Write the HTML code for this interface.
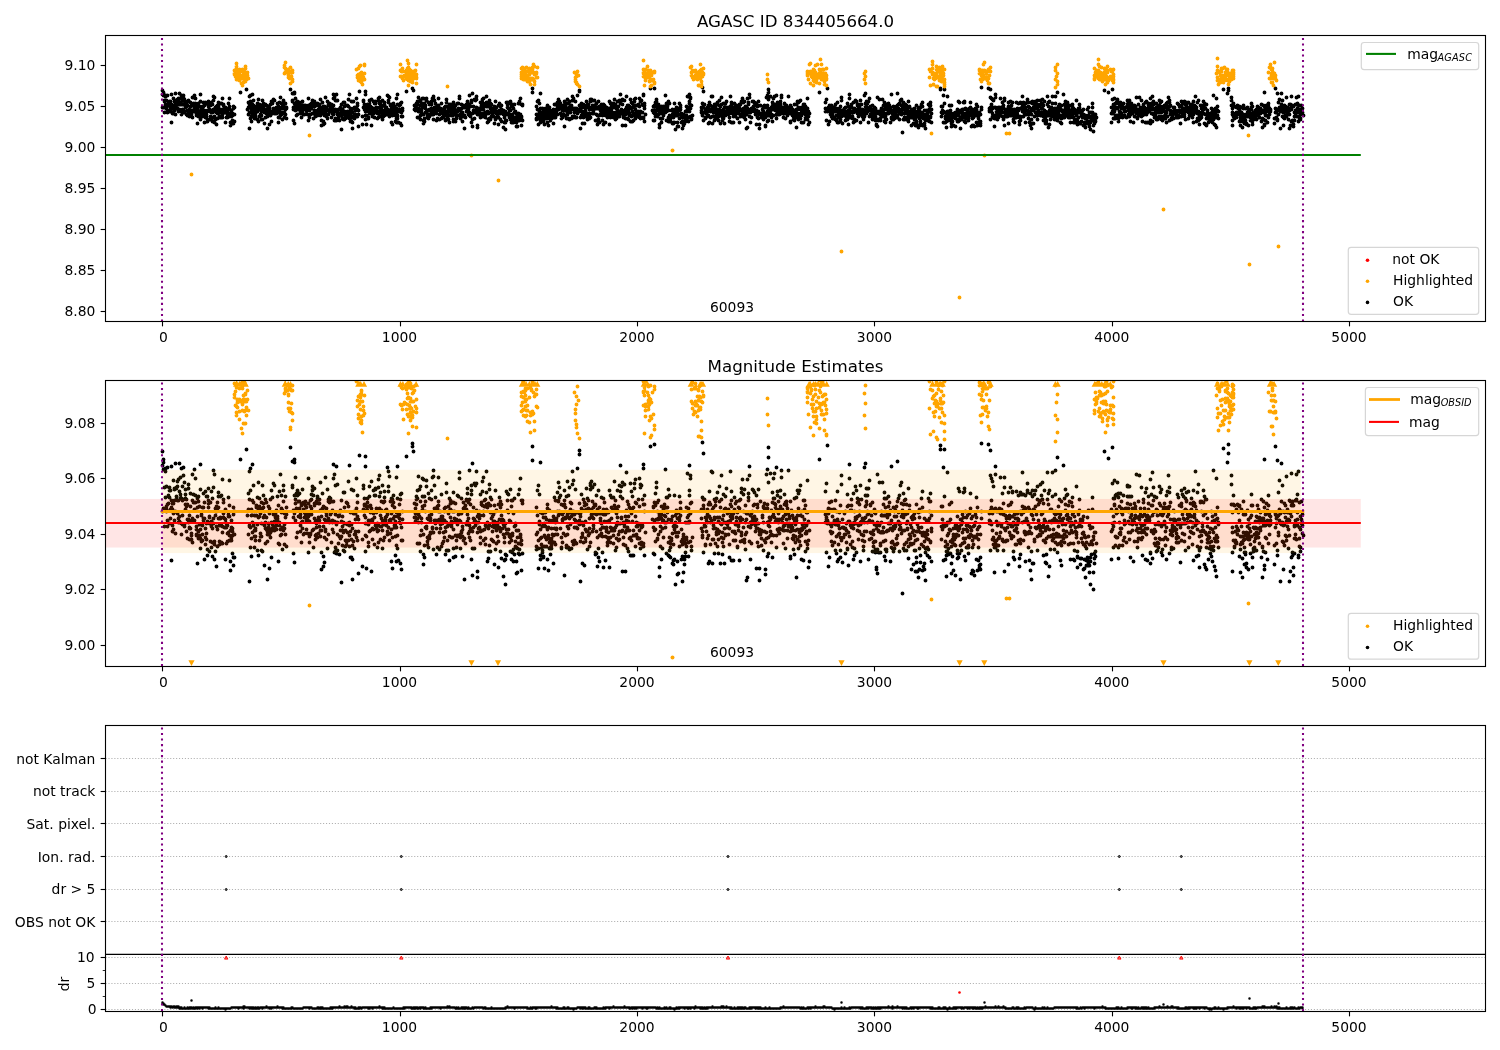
<!DOCTYPE html>
<html><head><meta charset="utf-8"><title>AGASC ID 834405664.0</title>
<style>html,body{margin:0;padding:0;background:#fff}svg{display:block;will-change:transform}text{font-family:"DejaVu Sans","Liberation Sans",sans-serif;font-size:13.89px;fill:#000}</style></head>
<body>
<svg width="1500" height="1050" viewBox="0 0 1500 1050">
<rect width="1500" height="1050" fill="#fff"/>
<defs>
<clipPath id="c1"><rect x="105.5" y="35.5" width="1380.0" height="286.0"/></clipPath>
<clipPath id="c2"><rect x="105.5" y="380.5" width="1380.0" height="286.0"/></clipPath>
<clipPath id="c3"><rect x="105.5" y="725.5" width="1380.0" height="286.0"/></clipPath>
</defs>
<g clip-path="url(#c1)">
<path d="M162.5 90.5h0M162.5 107.5h0M162.5 94.5h0M163.5 93.5h0M163.5 92.5h0M163.5 95.5h0M163.5 107.5h0M164.5 101.5h0M164.5 112.5h0M164.5 100.5h0M165.5 96.5h0M165.5 95.5h0M165.5 104.5h0M166.5 107.5h0M166.5 108.5h0M166.5 100.5h0M166.5 106.5h0M167.5 105.5h0M167.5 95.5h0M167.5 112.5h0M167.5 110.5h0M168.5 105.5h0M168.5 103.5h0M168.5 103.5h0M169.5 111.5h0M169.5 101.5h0M169.5 103.5h0M169.5 101.5h0M170.5 109.5h0M170.5 101.5h0M170.5 101.5h0M170.5 107.5h0M171.5 104.5h0M171.5 106.5h0M171.5 94.5h0M171.5 122.5h0M172.5 112.5h0M172.5 113.5h0M172.5 105.5h0M172.5 107.5h0M173.5 105.5h0M173.5 98.5h0M173.5 113.5h0M173.5 108.5h0M174.5 104.5h0M174.5 110.5h0M174.5 101.5h0M174.5 101.5h0M175.5 107.5h0M175.5 114.5h0M175.5 93.5h0M176.5 100.5h0M176.5 101.5h0M176.5 103.5h0M176.5 104.5h0M177.5 99.5h0M177.5 104.5h0M177.5 108.5h0M177.5 100.5h0M178.5 104.5h0M178.5 110.5h0M178.5 111.5h0M178.5 98.5h0M179.5 102.5h0M179.5 93.5h0M179.5 109.5h0M179.5 110.5h0M180.5 104.5h0M180.5 98.5h0M180.5 103.5h0M181.5 104.5h0M181.5 95.5h0M181.5 111.5h0M181.5 114.5h0M182.5 111.5h0M182.5 109.5h0M182.5 104.5h0M182.5 100.5h0M183.5 104.5h0M183.5 97.5h0M183.5 112.5h0M183.5 95.5h0M184.5 111.5h0M184.5 99.5h0M184.5 112.5h0M185.5 104.5h0M185.5 106.5h0M185.5 103.5h0M185.5 101.5h0M185.5 107.5h0M186.5 106.5h0M186.5 104.5h0M186.5 114.5h0M187.5 110.5h0M187.5 115.5h0M187.5 105.5h0M188.5 101.5h0M188.5 111.5h0M188.5 110.5h0M188.5 100.5h0M189.5 109.5h0M189.5 116.5h0M189.5 112.5h0M189.5 113.5h0M190.5 113.5h0M190.5 102.5h0M190.5 106.5h0M191.5 116.5h0M191.5 110.5h0M191.5 114.5h0M191.5 115.5h0M192.5 117.5h0M192.5 97.5h0M192.5 110.5h0M192.5 104.5h0M193.5 103.5h0M193.5 111.5h0M193.5 105.5h0M193.5 105.5h0M194.5 107.5h0M194.5 95.5h0M194.5 107.5h0M194.5 110.5h0M195.5 105.5h0M195.5 98.5h0M195.5 103.5h0M196.5 112.5h0M196.5 114.5h0M196.5 115.5h0M196.5 113.5h0M197.5 106.5h0M197.5 104.5h0M197.5 123.5h0M197.5 109.5h0M198.5 116.5h0M198.5 104.5h0M198.5 103.5h0M198.5 113.5h0M199.5 111.5h0M199.5 114.5h0M199.5 106.5h0M200.5 119.5h0M200.5 116.5h0M200.5 113.5h0M200.5 101.5h0M200.5 94.5h0M201.5 109.5h0M201.5 116.5h0M201.5 108.5h0M202.5 114.5h0M202.5 106.5h0M202.5 116.5h0M202.5 112.5h0M203.5 110.5h0M203.5 106.5h0M203.5 110.5h0M203.5 102.5h0M204.5 110.5h0M204.5 122.5h0M204.5 105.5h0M205.5 113.5h0M205.5 115.5h0M205.5 102.5h0M205.5 117.5h0M206.5 111.5h0M206.5 116.5h0M206.5 103.5h0M206.5 114.5h0M207.5 110.5h0M207.5 121.5h0M207.5 103.5h0M207.5 119.5h0M208.5 106.5h0M208.5 105.5h0M208.5 104.5h0M208.5 101.5h0M209.5 119.5h0M209.5 109.5h0M209.5 111.5h0M209.5 109.5h0M210.5 105.5h0M210.5 111.5h0M210.5 116.5h0M211.5 112.5h0M211.5 102.5h0M211.5 118.5h0M211.5 110.5h0M212.5 117.5h0M212.5 104.5h0M212.5 121.5h0M212.5 112.5h0M213.5 111.5h0M213.5 109.5h0M213.5 96.5h0M213.5 100.5h0M214.5 116.5h0M214.5 97.5h0M214.5 117.5h0M214.5 122.5h0M215.5 119.5h0M215.5 109.5h0M215.5 107.5h0M216.5 124.5h0M216.5 107.5h0M216.5 112.5h0M216.5 106.5h0M217.5 113.5h0M217.5 105.5h0M217.5 107.5h0M217.5 118.5h0M218.5 102.5h0M218.5 110.5h0M218.5 106.5h0M218.5 103.5h0M219.5 117.5h0M219.5 112.5h0M219.5 116.5h0M219.5 117.5h0M220.5 110.5h0M220.5 109.5h0M220.5 103.5h0M221.5 103.5h0M221.5 112.5h0M221.5 117.5h0M222.5 98.5h0M222.5 112.5h0M222.5 117.5h0M222.5 114.5h0M223.5 109.5h0M223.5 104.5h0M223.5 105.5h0M223.5 108.5h0M224.5 112.5h0M224.5 110.5h0M224.5 112.5h0M225.5 110.5h0M225.5 111.5h0M225.5 107.5h0M225.5 122.5h0M226.5 112.5h0M226.5 112.5h0M226.5 117.5h0M226.5 111.5h0M227.5 117.5h0M227.5 114.5h0M227.5 112.5h0M227.5 112.5h0M228.5 114.5h0M228.5 103.5h0M228.5 109.5h0M228.5 108.5h0M229.5 109.5h0M229.5 115.5h0M229.5 116.5h0M229.5 106.5h0M230.5 113.5h0M230.5 122.5h0M230.5 125.5h0M231.5 110.5h0M231.5 116.5h0M231.5 112.5h0M231.5 115.5h0M232.5 115.5h0M232.5 113.5h0M232.5 120.5h0M232.5 113.5h0M233.5 106.5h0M233.5 108.5h0M233.5 123.5h0M233.5 121.5h0M234.5 121.5h0M234.5 114.5h0M234.5 107.5h0M247.5 109.5h0M248.5 107.5h0M248.5 114.5h0M248.5 102.5h0M249.5 104.5h0M249.5 112.5h0M249.5 128.5h0M249.5 112.5h0M250.5 95.5h0M250.5 112.5h0M250.5 118.5h0M250.5 101.5h0M251.5 116.5h0M251.5 109.5h0M251.5 107.5h0M251.5 121.5h0M252.5 111.5h0M252.5 104.5h0M252.5 114.5h0M252.5 107.5h0M253.5 112.5h0M253.5 105.5h0M253.5 100.5h0M254.5 118.5h0M254.5 113.5h0M254.5 109.5h0M254.5 115.5h0M255.5 116.5h0M255.5 113.5h0M255.5 113.5h0M255.5 115.5h0M256.5 109.5h0M256.5 106.5h0M256.5 106.5h0M256.5 107.5h0M257.5 103.5h0M257.5 119.5h0M257.5 111.5h0M258.5 109.5h0M258.5 107.5h0M258.5 121.5h0M258.5 99.5h0M259.5 116.5h0M259.5 109.5h0M259.5 106.5h0M259.5 104.5h0M260.5 115.5h0M260.5 114.5h0M260.5 108.5h0M260.5 107.5h0M261.5 105.5h0M261.5 111.5h0M261.5 115.5h0M261.5 119.5h0M262.5 100.5h0M262.5 119.5h0M262.5 107.5h0M263.5 109.5h0M263.5 106.5h0M263.5 105.5h0M263.5 103.5h0M264.5 112.5h0M264.5 109.5h0M264.5 123.5h0M264.5 111.5h0M265.5 117.5h0M265.5 112.5h0M265.5 104.5h0M265.5 111.5h0M266.5 105.5h0M266.5 113.5h0M266.5 109.5h0M267.5 114.5h0M267.5 128.5h0M267.5 116.5h0M267.5 114.5h0M268.5 111.5h0M268.5 112.5h0M268.5 113.5h0M268.5 106.5h0M269.5 108.5h0M269.5 114.5h0M269.5 107.5h0M269.5 124.5h0M270.5 114.5h0M270.5 113.5h0M270.5 104.5h0M270.5 115.5h0M271.5 121.5h0M271.5 111.5h0M271.5 101.5h0M272.5 113.5h0M272.5 112.5h0M272.5 113.5h0M272.5 111.5h0M272.5 103.5h0M273.5 99.5h0M273.5 108.5h0M273.5 112.5h0M274.5 100.5h0M274.5 111.5h0M274.5 111.5h0M274.5 113.5h0M275.5 113.5h0M275.5 109.5h0M275.5 113.5h0M275.5 108.5h0M276.5 110.5h0M276.5 107.5h0M276.5 113.5h0M276.5 112.5h0M277.5 109.5h0M277.5 110.5h0M277.5 110.5h0M277.5 103.5h0M278.5 117.5h0M278.5 122.5h0M278.5 106.5h0M279.5 112.5h0M279.5 102.5h0M279.5 111.5h0M279.5 117.5h0M280.5 97.5h0M280.5 108.5h0M280.5 113.5h0M280.5 115.5h0M281.5 107.5h0M281.5 114.5h0M281.5 108.5h0M281.5 103.5h0M282.5 119.5h0M282.5 112.5h0M282.5 107.5h0M283.5 100.5h0M283.5 105.5h0M283.5 113.5h0M283.5 101.5h0M284.5 113.5h0M284.5 111.5h0M284.5 108.5h0M284.5 117.5h0M285.5 103.5h0M285.5 109.5h0M285.5 114.5h0M286.5 118.5h0M286.5 108.5h0M286.5 107.5h0M292.5 100.5h0M292.5 101.5h0M293.5 109.5h0M293.5 93.5h0M293.5 107.5h0M293.5 120.5h0M294.5 123.5h0M294.5 108.5h0M294.5 103.5h0M294.5 108.5h0M295.5 98.5h0M295.5 110.5h0M295.5 105.5h0M295.5 104.5h0M296.5 115.5h0M296.5 107.5h0M296.5 107.5h0M296.5 102.5h0M297.5 101.5h0M297.5 103.5h0M297.5 114.5h0M298.5 105.5h0M298.5 103.5h0M298.5 109.5h0M298.5 105.5h0M299.5 105.5h0M299.5 102.5h0M299.5 109.5h0M299.5 107.5h0M300.5 108.5h0M300.5 109.5h0M300.5 113.5h0M300.5 112.5h0M301.5 117.5h0M301.5 111.5h0M301.5 105.5h0M301.5 106.5h0M302.5 105.5h0M302.5 110.5h0M302.5 101.5h0M302.5 113.5h0M303.5 105.5h0M303.5 107.5h0M303.5 114.5h0M304.5 114.5h0M304.5 105.5h0M304.5 109.5h0M304.5 108.5h0M305.5 106.5h0M305.5 109.5h0M305.5 105.5h0M306.5 113.5h0M306.5 110.5h0M306.5 106.5h0M307.5 114.5h0M307.5 109.5h0M307.5 110.5h0M307.5 108.5h0M308.5 120.5h0M308.5 98.5h0M308.5 109.5h0M308.5 105.5h0M309.5 115.5h0M309.5 117.5h0M309.5 108.5h0M309.5 110.5h0M310.5 104.5h0M310.5 114.5h0M310.5 114.5h0M310.5 106.5h0M311.5 104.5h0M311.5 103.5h0M311.5 108.5h0M311.5 107.5h0M312.5 113.5h0M312.5 100.5h0M312.5 101.5h0M312.5 101.5h0M313.5 118.5h0M313.5 103.5h0M313.5 113.5h0M314.5 105.5h0M314.5 106.5h0M314.5 101.5h0M314.5 110.5h0M315.5 111.5h0M315.5 115.5h0M315.5 116.5h0M315.5 105.5h0M316.5 114.5h0M316.5 105.5h0M316.5 111.5h0M316.5 112.5h0M317.5 103.5h0M317.5 104.5h0M317.5 115.5h0M317.5 110.5h0M318.5 109.5h0M318.5 105.5h0M318.5 114.5h0M319.5 112.5h0M319.5 110.5h0M319.5 105.5h0M319.5 104.5h0M320.5 113.5h0M320.5 99.5h0M320.5 107.5h0M320.5 115.5h0M321.5 120.5h0M321.5 113.5h0M321.5 125.5h0M321.5 109.5h0M322.5 107.5h0M322.5 102.5h0M322.5 107.5h0M323.5 121.5h0M323.5 112.5h0M323.5 106.5h0M323.5 124.5h0M324.5 115.5h0M324.5 106.5h0M324.5 110.5h0M324.5 123.5h0M325.5 113.5h0M325.5 110.5h0M325.5 97.5h0M325.5 113.5h0M326.5 116.5h0M326.5 109.5h0M326.5 108.5h0M326.5 107.5h0M327.5 101.5h0M327.5 110.5h0M327.5 118.5h0M328.5 110.5h0M328.5 110.5h0M328.5 104.5h0M328.5 105.5h0M328.5 114.5h0M329.5 105.5h0M329.5 103.5h0M329.5 111.5h0M330.5 104.5h0M330.5 108.5h0M330.5 108.5h0M330.5 110.5h0M331.5 104.5h0M331.5 108.5h0M331.5 117.5h0M332.5 111.5h0M332.5 113.5h0M332.5 107.5h0M332.5 110.5h0M333.5 94.5h0M333.5 105.5h0M333.5 98.5h0M333.5 114.5h0M334.5 111.5h0M334.5 97.5h0M334.5 120.5h0M335.5 109.5h0M335.5 119.5h0M335.5 100.5h0M335.5 118.5h0M336.5 111.5h0M336.5 111.5h0M336.5 120.5h0M336.5 94.5h0M337.5 111.5h0M337.5 100.5h0M337.5 114.5h0M337.5 119.5h0M338.5 109.5h0M338.5 109.5h0M338.5 117.5h0M339.5 120.5h0M339.5 115.5h0M339.5 109.5h0M340.5 107.5h0M340.5 115.5h0M340.5 113.5h0M340.5 108.5h0M341.5 104.5h0M341.5 115.5h0M341.5 111.5h0M341.5 129.5h0M342.5 118.5h0M342.5 109.5h0M342.5 112.5h0M342.5 113.5h0M343.5 102.5h0M343.5 114.5h0M343.5 119.5h0M343.5 111.5h0M344.5 111.5h0M344.5 119.5h0M344.5 106.5h0M344.5 102.5h0M345.5 116.5h0M345.5 118.5h0M345.5 113.5h0M346.5 105.5h0M346.5 116.5h0M346.5 117.5h0M346.5 116.5h0M347.5 111.5h0M347.5 111.5h0M347.5 114.5h0M347.5 105.5h0M348.5 99.5h0M348.5 116.5h0M348.5 106.5h0M349.5 111.5h0M349.5 94.5h0M349.5 118.5h0M349.5 115.5h0M349.5 112.5h0M350.5 121.5h0M350.5 114.5h0M350.5 108.5h0M351.5 121.5h0M351.5 111.5h0M351.5 101.5h0M351.5 116.5h0M352.5 117.5h0M352.5 128.5h0M352.5 112.5h0M352.5 122.5h0M353.5 108.5h0M353.5 101.5h0M353.5 108.5h0M353.5 116.5h0M354.5 107.5h0M354.5 114.5h0M354.5 118.5h0M355.5 114.5h0M355.5 110.5h0M355.5 114.5h0M355.5 108.5h0M356.5 98.5h0M356.5 107.5h0M356.5 107.5h0M356.5 115.5h0M357.5 103.5h0M357.5 109.5h0M357.5 105.5h0M357.5 116.5h0M358.5 110.5h0M358.5 126.5h0M358.5 114.5h0M362.5 116.5h0M362.5 124.5h0M363.5 101.5h0M363.5 100.5h0M363.5 107.5h0M364.5 105.5h0M364.5 106.5h0M364.5 109.5h0M364.5 104.5h0M365.5 115.5h0M365.5 111.5h0M365.5 109.5h0M365.5 119.5h0M366.5 115.5h0M366.5 106.5h0M366.5 107.5h0M366.5 124.5h0M367.5 104.5h0M367.5 107.5h0M367.5 105.5h0M368.5 110.5h0M368.5 106.5h0M368.5 118.5h0M368.5 111.5h0M368.5 117.5h0M369.5 113.5h0M369.5 103.5h0M369.5 100.5h0M370.5 110.5h0M370.5 113.5h0M370.5 106.5h0M370.5 108.5h0M371.5 99.5h0M371.5 107.5h0M371.5 125.5h0M371.5 110.5h0M372.5 113.5h0M372.5 116.5h0M372.5 110.5h0M372.5 110.5h0M373.5 113.5h0M373.5 101.5h0M373.5 108.5h0M374.5 108.5h0M374.5 109.5h0M374.5 103.5h0M374.5 117.5h0M375.5 103.5h0M375.5 112.5h0M375.5 101.5h0M375.5 101.5h0M376.5 107.5h0M376.5 112.5h0M376.5 108.5h0M376.5 107.5h0M377.5 118.5h0M377.5 111.5h0M377.5 113.5h0M378.5 100.5h0M378.5 98.5h0M378.5 113.5h0M378.5 112.5h0M378.5 117.5h0M379.5 107.5h0M379.5 103.5h0M379.5 97.5h0M380.5 116.5h0M380.5 102.5h0M380.5 109.5h0M380.5 112.5h0M381.5 110.5h0M381.5 112.5h0M381.5 105.5h0M381.5 107.5h0M382.5 100.5h0M382.5 110.5h0M382.5 119.5h0M382.5 113.5h0M383.5 105.5h0M383.5 116.5h0M383.5 111.5h0M384.5 104.5h0M384.5 115.5h0M384.5 102.5h0M384.5 105.5h0M385.5 110.5h0M385.5 107.5h0M385.5 110.5h0M385.5 109.5h0M386.5 109.5h0M386.5 107.5h0M386.5 108.5h0M386.5 112.5h0M387.5 113.5h0M387.5 95.5h0M387.5 114.5h0M387.5 109.5h0M388.5 100.5h0M388.5 102.5h0M388.5 112.5h0M388.5 96.5h0M389.5 97.5h0M389.5 110.5h0M389.5 116.5h0M390.5 105.5h0M390.5 110.5h0M390.5 111.5h0M390.5 114.5h0M391.5 113.5h0M391.5 108.5h0M391.5 104.5h0M391.5 122.5h0M392.5 124.5h0M392.5 104.5h0M392.5 115.5h0M392.5 106.5h0M393.5 110.5h0M393.5 103.5h0M393.5 105.5h0M394.5 112.5h0M394.5 112.5h0M394.5 109.5h0M394.5 106.5h0M395.5 115.5h0M395.5 121.5h0M395.5 111.5h0M395.5 112.5h0M396.5 112.5h0M396.5 118.5h0M396.5 108.5h0M396.5 122.5h0M397.5 115.5h0M397.5 104.5h0M397.5 118.5h0M397.5 109.5h0M398.5 109.5h0M398.5 109.5h0M398.5 122.5h0M399.5 105.5h0M399.5 111.5h0M399.5 109.5h0M399.5 110.5h0M400.5 111.5h0M400.5 104.5h0M400.5 103.5h0M400.5 123.5h0M401.5 116.5h0M401.5 112.5h0M401.5 125.5h0M401.5 102.5h0M402.5 116.5h0M402.5 108.5h0M402.5 110.5h0M414.5 105.5h0M414.5 109.5h0M415.5 108.5h0M415.5 107.5h0M415.5 110.5h0M415.5 109.5h0M416.5 105.5h0M416.5 104.5h0M416.5 103.5h0M417.5 110.5h0M417.5 104.5h0M417.5 101.5h0M417.5 117.5h0M418.5 111.5h0M418.5 108.5h0M418.5 108.5h0M418.5 97.5h0M419.5 101.5h0M419.5 109.5h0M419.5 109.5h0M419.5 117.5h0M420.5 115.5h0M420.5 100.5h0M420.5 119.5h0M420.5 105.5h0M421.5 113.5h0M421.5 111.5h0M421.5 110.5h0M422.5 98.5h0M422.5 107.5h0M422.5 106.5h0M422.5 103.5h0M423.5 123.5h0M423.5 98.5h0M423.5 120.5h0M423.5 114.5h0M424.5 106.5h0M424.5 118.5h0M424.5 121.5h0M424.5 103.5h0M425.5 112.5h0M425.5 105.5h0M425.5 108.5h0M426.5 112.5h0M426.5 100.5h0M426.5 112.5h0M426.5 98.5h0M427.5 116.5h0M427.5 117.5h0M427.5 115.5h0M427.5 110.5h0M428.5 118.5h0M428.5 115.5h0M428.5 102.5h0M428.5 110.5h0M429.5 104.5h0M429.5 109.5h0M429.5 114.5h0M429.5 116.5h0M430.5 110.5h0M430.5 110.5h0M430.5 114.5h0M430.5 114.5h0M431.5 101.5h0M431.5 104.5h0M431.5 108.5h0M432.5 112.5h0M432.5 113.5h0M432.5 98.5h0M432.5 114.5h0M433.5 96.5h0M433.5 114.5h0M433.5 119.5h0M433.5 97.5h0M434.5 110.5h0M434.5 100.5h0M434.5 107.5h0M434.5 111.5h0M435.5 103.5h0M435.5 111.5h0M435.5 107.5h0M435.5 110.5h0M436.5 120.5h0M436.5 107.5h0M436.5 113.5h0M437.5 110.5h0M437.5 107.5h0M437.5 118.5h0M437.5 106.5h0M438.5 106.5h0M438.5 98.5h0M438.5 105.5h0M438.5 108.5h0M439.5 114.5h0M439.5 110.5h0M439.5 119.5h0M439.5 108.5h0M440.5 111.5h0M440.5 113.5h0M440.5 110.5h0M440.5 108.5h0M441.5 109.5h0M441.5 118.5h0M441.5 103.5h0M442.5 111.5h0M442.5 109.5h0M442.5 111.5h0M442.5 117.5h0M442.5 110.5h0M443.5 114.5h0M443.5 117.5h0M443.5 111.5h0M444.5 107.5h0M444.5 108.5h0M444.5 110.5h0M444.5 115.5h0M445.5 113.5h0M445.5 112.5h0M445.5 120.5h0M445.5 106.5h0M446.5 111.5h0M446.5 119.5h0M446.5 102.5h0M446.5 99.5h0M447.5 119.5h0M447.5 112.5h0M447.5 116.5h0M448.5 106.5h0M448.5 119.5h0M448.5 108.5h0M448.5 108.5h0M449.5 104.5h0M449.5 122.5h0M449.5 115.5h0M449.5 111.5h0M450.5 104.5h0M450.5 109.5h0M450.5 105.5h0M450.5 107.5h0M451.5 115.5h0M451.5 110.5h0M451.5 112.5h0M451.5 111.5h0M452.5 115.5h0M452.5 105.5h0M452.5 108.5h0M453.5 121.5h0M453.5 105.5h0M453.5 113.5h0M453.5 119.5h0M453.5 102.5h0M454.5 110.5h0M454.5 107.5h0M454.5 111.5h0M455.5 110.5h0M455.5 121.5h0M455.5 105.5h0M455.5 114.5h0M456.5 110.5h0M456.5 111.5h0M456.5 116.5h0M456.5 118.5h0M457.5 111.5h0M457.5 103.5h0M457.5 115.5h0M457.5 115.5h0M458.5 110.5h0M458.5 115.5h0M458.5 103.5h0M458.5 108.5h0M459.5 96.5h0M459.5 110.5h0M459.5 98.5h0M460.5 115.5h0M460.5 110.5h0M460.5 118.5h0M460.5 114.5h0M461.5 114.5h0M461.5 108.5h0M461.5 104.5h0M461.5 114.5h0M462.5 121.5h0M462.5 112.5h0M462.5 113.5h0M462.5 115.5h0M463.5 107.5h0M463.5 105.5h0M463.5 116.5h0M463.5 116.5h0M464.5 128.5h0M464.5 115.5h0M464.5 106.5h0M465.5 117.5h0M465.5 106.5h0M465.5 107.5h0M465.5 107.5h0M466.5 107.5h0M466.5 111.5h0M466.5 104.5h0M466.5 104.5h0M467.5 108.5h0M467.5 111.5h0M467.5 102.5h0M467.5 101.5h0M468.5 114.5h0M468.5 105.5h0M468.5 109.5h0M469.5 95.5h0M469.5 112.5h0M469.5 113.5h0M469.5 115.5h0M469.5 104.5h0M470.5 116.5h0M470.5 106.5h0M470.5 113.5h0M471.5 101.5h0M471.5 100.5h0M471.5 102.5h0M471.5 122.5h0M472.5 119.5h0M472.5 126.5h0M472.5 93.5h0M472.5 113.5h0M473.5 112.5h0M473.5 110.5h0M473.5 106.5h0M473.5 112.5h0M474.5 110.5h0M474.5 110.5h0M474.5 118.5h0M474.5 99.5h0M475.5 100.5h0M475.5 110.5h0M475.5 112.5h0M476.5 99.5h0M476.5 96.5h0M476.5 111.5h0M476.5 107.5h0M477.5 114.5h0M477.5 109.5h0M477.5 127.5h0M477.5 125.5h0M478.5 108.5h0M478.5 112.5h0M478.5 109.5h0M478.5 111.5h0M479.5 108.5h0M479.5 110.5h0M479.5 112.5h0M480.5 109.5h0M480.5 115.5h0M480.5 102.5h0M480.5 117.5h0M480.5 114.5h0M481.5 105.5h0M481.5 113.5h0M481.5 105.5h0M482.5 102.5h0M482.5 106.5h0M482.5 113.5h0M482.5 99.5h0M483.5 107.5h0M483.5 116.5h0M483.5 98.5h0M483.5 109.5h0M484.5 106.5h0M484.5 104.5h0M484.5 113.5h0M485.5 104.5h0M485.5 117.5h0M485.5 115.5h0M485.5 112.5h0M486.5 96.5h0M486.5 106.5h0M486.5 102.5h0M486.5 112.5h0M487.5 106.5h0M487.5 122.5h0M487.5 111.5h0M487.5 106.5h0M488.5 113.5h0M488.5 121.5h0M488.5 119.5h0M488.5 105.5h0M489.5 101.5h0M489.5 112.5h0M489.5 100.5h0M489.5 118.5h0M490.5 106.5h0M490.5 108.5h0M490.5 103.5h0M490.5 119.5h0M491.5 104.5h0M491.5 110.5h0M491.5 116.5h0M492.5 113.5h0M492.5 112.5h0M492.5 109.5h0M492.5 116.5h0M493.5 116.5h0M493.5 111.5h0M493.5 112.5h0M493.5 108.5h0M494.5 106.5h0M494.5 123.5h0M494.5 112.5h0M494.5 110.5h0M495.5 112.5h0M495.5 119.5h0M495.5 108.5h0M495.5 101.5h0M496.5 113.5h0M496.5 117.5h0M496.5 107.5h0M496.5 112.5h0M497.5 111.5h0M497.5 111.5h0M497.5 115.5h0M498.5 112.5h0M498.5 117.5h0M498.5 124.5h0M498.5 105.5h0M499.5 110.5h0M499.5 112.5h0M499.5 103.5h0M499.5 113.5h0M500.5 105.5h0M500.5 106.5h0M500.5 113.5h0M500.5 119.5h0M501.5 109.5h0M501.5 110.5h0M501.5 105.5h0M501.5 121.5h0M502.5 113.5h0M502.5 110.5h0M502.5 110.5h0M503.5 111.5h0M503.5 110.5h0M503.5 127.5h0M503.5 114.5h0M504.5 117.5h0M504.5 122.5h0M504.5 112.5h0M504.5 115.5h0M505.5 120.5h0M505.5 122.5h0M505.5 111.5h0M505.5 129.5h0M506.5 114.5h0M506.5 120.5h0M506.5 113.5h0M506.5 102.5h0M507.5 107.5h0M507.5 114.5h0M507.5 104.5h0M507.5 102.5h0M508.5 108.5h0M508.5 103.5h0M508.5 113.5h0M509.5 110.5h0M509.5 115.5h0M509.5 117.5h0M509.5 114.5h0M510.5 119.5h0M510.5 115.5h0M510.5 101.5h0M510.5 110.5h0M511.5 116.5h0M511.5 104.5h0M511.5 106.5h0M511.5 122.5h0M512.5 120.5h0M512.5 104.5h0M512.5 115.5h0M512.5 114.5h0M513.5 119.5h0M513.5 122.5h0M513.5 108.5h0M514.5 120.5h0M514.5 112.5h0M514.5 104.5h0M514.5 112.5h0M515.5 117.5h0M515.5 111.5h0M515.5 112.5h0M515.5 118.5h0M516.5 113.5h0M516.5 122.5h0M516.5 126.5h0M516.5 118.5h0M517.5 126.5h0M517.5 118.5h0M517.5 115.5h0M518.5 113.5h0M518.5 103.5h0M518.5 120.5h0M518.5 117.5h0M519.5 117.5h0M519.5 120.5h0M519.5 101.5h0M519.5 119.5h0M520.5 115.5h0M520.5 114.5h0M520.5 98.5h0M520.5 115.5h0M521.5 117.5h0M521.5 104.5h0M521.5 116.5h0M521.5 125.5h0M522.5 104.5h0M522.5 105.5h0M522.5 120.5h0M536.5 119.5h0M536.5 118.5h0M536.5 106.5h0M536.5 114.5h0M537.5 114.5h0M537.5 109.5h0M537.5 118.5h0M537.5 101.5h0M538.5 118.5h0M538.5 116.5h0M538.5 100.5h0M538.5 124.5h0M539.5 103.5h0M539.5 111.5h0M539.5 111.5h0M540.5 120.5h0M540.5 113.5h0M540.5 122.5h0M540.5 108.5h0M540.5 116.5h0M541.5 118.5h0M541.5 117.5h0M541.5 115.5h0M542.5 108.5h0M542.5 112.5h0M542.5 119.5h0M542.5 120.5h0M543.5 121.5h0M543.5 109.5h0M543.5 111.5h0M543.5 121.5h0M544.5 124.5h0M544.5 115.5h0M544.5 118.5h0M544.5 111.5h0M545.5 115.5h0M545.5 112.5h0M545.5 109.5h0M545.5 108.5h0M546.5 116.5h0M546.5 110.5h0M546.5 118.5h0M547.5 122.5h0M547.5 113.5h0M547.5 107.5h0M547.5 105.5h0M548.5 115.5h0M548.5 125.5h0M548.5 112.5h0M548.5 115.5h0M549.5 110.5h0M549.5 107.5h0M549.5 117.5h0M549.5 118.5h0M550.5 116.5h0M550.5 118.5h0M550.5 120.5h0M551.5 113.5h0M551.5 118.5h0M551.5 116.5h0M551.5 116.5h0M551.5 118.5h0M552.5 110.5h0M552.5 117.5h0M552.5 114.5h0M553.5 109.5h0M553.5 115.5h0M553.5 123.5h0M553.5 117.5h0M554.5 117.5h0M554.5 110.5h0M554.5 104.5h0M554.5 113.5h0M555.5 114.5h0M555.5 104.5h0M555.5 117.5h0M555.5 111.5h0M556.5 109.5h0M556.5 112.5h0M556.5 113.5h0M556.5 111.5h0M557.5 102.5h0M557.5 107.5h0M557.5 114.5h0M558.5 109.5h0M558.5 104.5h0M558.5 99.5h0M558.5 105.5h0M559.5 108.5h0M559.5 101.5h0M559.5 103.5h0M559.5 108.5h0M560.5 113.5h0M560.5 108.5h0M560.5 103.5h0M561.5 115.5h0M561.5 118.5h0M561.5 105.5h0M561.5 118.5h0M562.5 117.5h0M562.5 110.5h0M562.5 110.5h0M562.5 109.5h0M563.5 108.5h0M563.5 106.5h0M563.5 110.5h0M563.5 114.5h0M564.5 126.5h0M564.5 101.5h0M564.5 104.5h0M564.5 105.5h0M565.5 109.5h0M565.5 115.5h0M565.5 106.5h0M565.5 110.5h0M566.5 118.5h0M566.5 103.5h0M566.5 118.5h0M567.5 112.5h0M567.5 99.5h0M567.5 114.5h0M567.5 108.5h0M568.5 103.5h0M568.5 109.5h0M568.5 118.5h0M568.5 112.5h0M569.5 110.5h0M569.5 119.5h0M569.5 101.5h0M569.5 107.5h0M570.5 105.5h0M570.5 108.5h0M570.5 107.5h0M570.5 112.5h0M571.5 118.5h0M571.5 105.5h0M571.5 109.5h0M572.5 100.5h0M572.5 116.5h0M572.5 108.5h0M572.5 96.5h0M573.5 117.5h0M573.5 116.5h0M573.5 108.5h0M573.5 98.5h0M574.5 116.5h0M574.5 108.5h0M574.5 110.5h0M574.5 112.5h0M575.5 110.5h0M575.5 101.5h0M575.5 108.5h0M575.5 117.5h0M576.5 112.5h0M576.5 108.5h0M576.5 117.5h0M577.5 113.5h0M577.5 111.5h0M579.5 110.5h0M579.5 105.5h0M579.5 108.5h0M579.5 111.5h0M580.5 117.5h0M580.5 109.5h0M580.5 128.5h0M580.5 108.5h0M581.5 115.5h0M581.5 107.5h0M581.5 111.5h0M581.5 103.5h0M582.5 115.5h0M582.5 123.5h0M582.5 111.5h0M582.5 114.5h0M583.5 112.5h0M583.5 104.5h0M583.5 117.5h0M584.5 107.5h0M584.5 106.5h0M584.5 105.5h0M584.5 123.5h0M585.5 110.5h0M585.5 116.5h0M585.5 113.5h0M585.5 116.5h0M586.5 113.5h0M586.5 106.5h0M586.5 101.5h0M586.5 107.5h0M587.5 119.5h0M587.5 104.5h0M587.5 119.5h0M587.5 113.5h0M588.5 104.5h0M588.5 115.5h0M588.5 107.5h0M589.5 113.5h0M589.5 118.5h0M589.5 109.5h0M589.5 114.5h0M590.5 100.5h0M590.5 99.5h0M590.5 101.5h0M590.5 117.5h0M591.5 99.5h0M591.5 108.5h0M591.5 107.5h0M591.5 109.5h0M592.5 113.5h0M592.5 109.5h0M592.5 105.5h0M592.5 100.5h0M593.5 106.5h0M593.5 110.5h0M593.5 113.5h0M593.5 112.5h0M594.5 100.5h0M594.5 105.5h0M594.5 108.5h0M595.5 120.5h0M595.5 120.5h0M595.5 105.5h0M595.5 106.5h0M596.5 103.5h0M596.5 108.5h0M596.5 114.5h0M596.5 120.5h0M597.5 115.5h0M597.5 124.5h0M597.5 108.5h0M597.5 107.5h0M598.5 101.5h0M598.5 121.5h0M598.5 119.5h0M599.5 106.5h0M599.5 108.5h0M599.5 122.5h0M599.5 115.5h0M600.5 110.5h0M600.5 113.5h0M600.5 108.5h0M600.5 110.5h0M601.5 114.5h0M601.5 108.5h0M601.5 111.5h0M601.5 104.5h0M602.5 120.5h0M602.5 112.5h0M602.5 115.5h0M603.5 112.5h0M603.5 108.5h0M603.5 107.5h0M603.5 124.5h0M603.5 104.5h0M604.5 108.5h0M604.5 108.5h0M604.5 110.5h0M604.5 105.5h0M605.5 108.5h0M605.5 122.5h0M605.5 115.5h0M606.5 112.5h0M606.5 113.5h0M606.5 113.5h0M606.5 107.5h0M607.5 117.5h0M607.5 115.5h0M607.5 117.5h0M607.5 111.5h0M608.5 108.5h0M608.5 116.5h0M608.5 108.5h0M608.5 114.5h0M609.5 101.5h0M609.5 124.5h0M609.5 110.5h0M610.5 103.5h0M610.5 112.5h0M610.5 117.5h0M610.5 115.5h0M611.5 106.5h0M611.5 113.5h0M611.5 103.5h0M611.5 109.5h0M612.5 113.5h0M612.5 112.5h0M612.5 107.5h0M613.5 103.5h0M613.5 115.5h0M613.5 117.5h0M613.5 117.5h0M614.5 107.5h0M614.5 99.5h0M614.5 113.5h0M614.5 106.5h0M615.5 112.5h0M615.5 104.5h0M615.5 119.5h0M615.5 106.5h0M616.5 118.5h0M616.5 115.5h0M616.5 108.5h0M616.5 112.5h0M617.5 111.5h0M617.5 107.5h0M617.5 109.5h0M617.5 101.5h0M618.5 106.5h0M618.5 116.5h0M618.5 111.5h0M618.5 114.5h0M619.5 113.5h0M619.5 100.5h0M619.5 116.5h0M620.5 103.5h0M620.5 102.5h0M620.5 94.5h0M620.5 111.5h0M621.5 109.5h0M621.5 109.5h0M621.5 113.5h0M621.5 100.5h0M622.5 99.5h0M622.5 125.5h0M622.5 113.5h0M622.5 104.5h0M623.5 117.5h0M623.5 115.5h0M623.5 111.5h0M623.5 111.5h0M624.5 112.5h0M624.5 112.5h0M624.5 100.5h0M625.5 125.5h0M625.5 114.5h0M625.5 118.5h0M625.5 109.5h0M626.5 113.5h0M626.5 107.5h0M626.5 110.5h0M626.5 96.5h0M627.5 118.5h0M627.5 113.5h0M627.5 105.5h0M627.5 112.5h0M628.5 109.5h0M628.5 119.5h0M628.5 105.5h0M628.5 111.5h0M629.5 106.5h0M629.5 115.5h0M629.5 113.5h0M630.5 115.5h0M630.5 99.5h0M630.5 121.5h0M630.5 107.5h0M631.5 108.5h0M631.5 102.5h0M631.5 108.5h0M631.5 116.5h0M632.5 107.5h0M632.5 121.5h0M632.5 103.5h0M632.5 111.5h0M633.5 115.5h0M633.5 113.5h0M633.5 106.5h0M633.5 120.5h0M634.5 99.5h0M634.5 115.5h0M634.5 101.5h0M635.5 109.5h0M635.5 98.5h0M635.5 118.5h0M635.5 105.5h0M636.5 111.5h0M636.5 114.5h0M636.5 105.5h0M636.5 112.5h0M637.5 115.5h0M637.5 112.5h0M637.5 116.5h0M637.5 112.5h0M638.5 111.5h0M638.5 104.5h0M638.5 111.5h0M639.5 116.5h0M639.5 106.5h0M639.5 113.5h0M639.5 117.5h0M640.5 118.5h0M640.5 100.5h0M640.5 111.5h0M640.5 101.5h0M641.5 117.5h0M641.5 117.5h0M641.5 100.5h0M641.5 112.5h0M642.5 112.5h0M642.5 112.5h0M642.5 117.5h0M642.5 104.5h0M643.5 118.5h0M643.5 105.5h0M643.5 117.5h0M643.5 94.5h0M644.5 105.5h0M644.5 103.5h0M644.5 121.5h0M644.5 108.5h0M645.5 114.5h0M652.5 110.5h0M653.5 120.5h0M653.5 106.5h0M653.5 106.5h0M653.5 112.5h0M654.5 113.5h0M654.5 110.5h0M654.5 105.5h0M654.5 120.5h0M655.5 102.5h0M655.5 113.5h0M655.5 106.5h0M655.5 116.5h0M656.5 99.5h0M656.5 110.5h0M656.5 101.5h0M657.5 116.5h0M657.5 116.5h0M657.5 105.5h0M657.5 108.5h0M658.5 110.5h0M658.5 104.5h0M658.5 110.5h0M658.5 114.5h0M659.5 124.5h0M659.5 127.5h0M659.5 108.5h0M659.5 109.5h0M660.5 118.5h0M660.5 109.5h0M660.5 113.5h0M660.5 112.5h0M661.5 106.5h0M661.5 122.5h0M661.5 110.5h0M661.5 108.5h0M662.5 113.5h0M662.5 110.5h0M662.5 118.5h0M663.5 110.5h0M663.5 107.5h0M663.5 106.5h0M663.5 115.5h0M664.5 106.5h0M664.5 109.5h0M664.5 106.5h0M664.5 111.5h0M665.5 106.5h0M665.5 109.5h0M665.5 95.5h0M665.5 112.5h0M666.5 103.5h0M666.5 111.5h0M666.5 120.5h0M667.5 108.5h0M667.5 103.5h0M667.5 106.5h0M667.5 106.5h0M668.5 117.5h0M668.5 110.5h0M668.5 121.5h0M668.5 101.5h0M669.5 103.5h0M669.5 119.5h0M669.5 115.5h0M669.5 121.5h0M670.5 118.5h0M670.5 116.5h0M670.5 121.5h0M670.5 117.5h0M671.5 110.5h0M671.5 116.5h0M671.5 110.5h0M671.5 116.5h0M672.5 114.5h0M672.5 123.5h0M672.5 109.5h0M673.5 122.5h0M673.5 117.5h0M673.5 123.5h0M673.5 112.5h0M674.5 122.5h0M674.5 111.5h0M674.5 103.5h0M674.5 113.5h0M675.5 129.5h0M675.5 109.5h0M675.5 114.5h0M675.5 111.5h0M676.5 112.5h0M676.5 107.5h0M676.5 108.5h0M676.5 115.5h0M677.5 122.5h0M677.5 115.5h0M677.5 110.5h0M677.5 126.5h0M678.5 114.5h0M678.5 126.5h0M678.5 108.5h0M679.5 103.5h0M679.5 109.5h0M679.5 118.5h0M679.5 110.5h0M680.5 107.5h0M680.5 105.5h0M680.5 107.5h0M680.5 109.5h0M681.5 122.5h0M681.5 116.5h0M681.5 113.5h0M682.5 116.5h0M682.5 128.5h0M682.5 117.5h0M682.5 121.5h0M683.5 115.5h0M683.5 114.5h0M683.5 125.5h0M683.5 121.5h0M684.5 116.5h0M684.5 123.5h0M684.5 117.5h0M684.5 122.5h0M685.5 121.5h0M685.5 111.5h0M685.5 117.5h0M685.5 120.5h0M686.5 106.5h0M686.5 118.5h0M686.5 116.5h0M686.5 115.5h0M687.5 96.5h0M687.5 111.5h0M687.5 109.5h0M688.5 117.5h0M688.5 109.5h0M688.5 107.5h0M688.5 121.5h0M689.5 111.5h0M689.5 103.5h0M689.5 101.5h0M689.5 111.5h0M690.5 98.5h0M690.5 116.5h0M690.5 105.5h0M690.5 108.5h0M691.5 118.5h0M691.5 105.5h0M691.5 119.5h0M692.5 115.5h0M701.5 110.5h0M701.5 112.5h0M701.5 107.5h0M702.5 115.5h0M702.5 115.5h0M702.5 103.5h0M702.5 114.5h0M703.5 120.5h0M703.5 106.5h0M703.5 107.5h0M703.5 104.5h0M704.5 112.5h0M704.5 104.5h0M704.5 112.5h0M705.5 117.5h0M705.5 112.5h0M705.5 109.5h0M705.5 118.5h0M705.5 112.5h0M706.5 109.5h0M706.5 113.5h0M706.5 110.5h0M707.5 111.5h0M707.5 116.5h0M707.5 109.5h0M707.5 107.5h0M708.5 123.5h0M708.5 115.5h0M708.5 105.5h0M708.5 108.5h0M709.5 122.5h0M709.5 109.5h0M709.5 102.5h0M709.5 105.5h0M710.5 105.5h0M710.5 111.5h0M710.5 110.5h0M710.5 117.5h0M711.5 110.5h0M711.5 96.5h0M711.5 110.5h0M712.5 116.5h0M712.5 107.5h0M712.5 123.5h0M712.5 96.5h0M713.5 106.5h0M713.5 112.5h0M713.5 112.5h0M713.5 116.5h0M714.5 109.5h0M714.5 110.5h0M714.5 120.5h0M714.5 104.5h0M715.5 112.5h0M715.5 117.5h0M715.5 104.5h0M715.5 106.5h0M716.5 114.5h0M716.5 114.5h0M716.5 104.5h0M717.5 113.5h0M717.5 109.5h0M717.5 102.5h0M717.5 118.5h0M718.5 120.5h0M718.5 116.5h0M718.5 114.5h0M718.5 110.5h0M719.5 105.5h0M719.5 113.5h0M719.5 100.5h0M719.5 109.5h0M720.5 123.5h0M720.5 111.5h0M720.5 106.5h0M721.5 104.5h0M721.5 115.5h0M721.5 111.5h0M721.5 97.5h0M722.5 110.5h0M722.5 117.5h0M722.5 120.5h0M722.5 114.5h0M723.5 109.5h0M723.5 118.5h0M723.5 103.5h0M723.5 116.5h0M724.5 123.5h0M724.5 107.5h0M724.5 111.5h0M724.5 112.5h0M725.5 103.5h0M725.5 115.5h0M725.5 107.5h0M725.5 114.5h0M726.5 101.5h0M726.5 111.5h0M726.5 111.5h0M726.5 107.5h0M727.5 111.5h0M727.5 108.5h0M727.5 112.5h0M728.5 107.5h0M728.5 110.5h0M728.5 114.5h0M728.5 107.5h0M729.5 108.5h0M729.5 117.5h0M729.5 113.5h0M729.5 121.5h0M730.5 110.5h0M730.5 106.5h0M730.5 96.5h0M730.5 109.5h0M731.5 104.5h0M731.5 102.5h0M731.5 106.5h0M731.5 122.5h0M732.5 113.5h0M732.5 108.5h0M732.5 109.5h0M732.5 110.5h0M733.5 116.5h0M733.5 122.5h0M733.5 108.5h0M734.5 103.5h0M734.5 113.5h0M734.5 107.5h0M734.5 114.5h0M735.5 111.5h0M735.5 114.5h0M735.5 105.5h0M735.5 116.5h0M736.5 109.5h0M736.5 105.5h0M736.5 110.5h0M737.5 118.5h0M737.5 108.5h0M737.5 111.5h0M737.5 118.5h0M738.5 111.5h0M738.5 112.5h0M738.5 107.5h0M738.5 113.5h0M739.5 110.5h0M739.5 107.5h0M739.5 122.5h0M739.5 104.5h0M740.5 110.5h0M740.5 116.5h0M740.5 109.5h0M740.5 104.5h0M741.5 115.5h0M741.5 114.5h0M741.5 102.5h0M741.5 101.5h0M742.5 98.5h0M742.5 110.5h0M742.5 116.5h0M743.5 116.5h0M743.5 112.5h0M743.5 116.5h0M743.5 108.5h0M743.5 102.5h0M744.5 117.5h0M744.5 101.5h0M744.5 116.5h0M745.5 114.5h0M745.5 119.5h0M745.5 106.5h0M745.5 111.5h0M746.5 110.5h0M746.5 128.5h0M746.5 114.5h0M746.5 108.5h0M747.5 127.5h0M747.5 98.5h0M747.5 108.5h0M748.5 103.5h0M748.5 112.5h0M748.5 104.5h0M748.5 102.5h0M749.5 94.5h0M749.5 116.5h0M749.5 97.5h0M749.5 116.5h0M750.5 109.5h0M750.5 112.5h0M750.5 111.5h0M750.5 122.5h0M751.5 111.5h0M751.5 117.5h0M751.5 111.5h0M751.5 108.5h0M752.5 109.5h0M752.5 110.5h0M752.5 101.5h0M752.5 108.5h0M753.5 106.5h0M753.5 101.5h0M753.5 110.5h0M754.5 109.5h0M754.5 105.5h0M754.5 111.5h0M754.5 102.5h0M755.5 114.5h0M755.5 111.5h0M755.5 111.5h0M755.5 112.5h0M756.5 110.5h0M756.5 113.5h0M756.5 124.5h0M756.5 103.5h0M757.5 113.5h0M757.5 105.5h0M757.5 117.5h0M757.5 106.5h0M758.5 118.5h0M758.5 101.5h0M758.5 111.5h0M759.5 113.5h0M759.5 128.5h0M759.5 124.5h0M759.5 113.5h0M759.5 114.5h0M760.5 114.5h0M760.5 114.5h0M760.5 105.5h0M761.5 113.5h0M761.5 113.5h0M761.5 115.5h0M761.5 117.5h0M762.5 109.5h0M762.5 114.5h0M762.5 113.5h0M762.5 109.5h0M763.5 111.5h0M763.5 106.5h0M763.5 107.5h0M763.5 119.5h0M764.5 116.5h0M764.5 105.5h0M764.5 113.5h0M764.5 107.5h0M765.5 117.5h0M765.5 126.5h0M765.5 125.5h0M766.5 115.5h0M766.5 114.5h0M766.5 97.5h0M766.5 107.5h0M767.5 107.5h0M767.5 105.5h0M767.5 121.5h0M767.5 111.5h0M768.5 112.5h0M768.5 99.5h0M768.5 115.5h0M768.5 120.5h0M769.5 110.5h0M769.5 112.5h0M769.5 110.5h0M769.5 109.5h0M770.5 110.5h0M770.5 115.5h0M770.5 113.5h0M770.5 96.5h0M771.5 114.5h0M771.5 107.5h0M771.5 117.5h0M772.5 121.5h0M772.5 105.5h0M772.5 109.5h0M772.5 102.5h0M773.5 104.5h0M773.5 108.5h0M773.5 115.5h0M773.5 98.5h0M774.5 109.5h0M774.5 96.5h0M774.5 105.5h0M774.5 104.5h0M775.5 105.5h0M775.5 106.5h0M775.5 110.5h0M776.5 95.5h0M776.5 114.5h0M776.5 118.5h0M776.5 107.5h0M777.5 113.5h0M777.5 103.5h0M777.5 110.5h0M777.5 102.5h0M778.5 108.5h0M778.5 114.5h0M778.5 111.5h0M778.5 104.5h0M779.5 113.5h0M779.5 114.5h0M779.5 110.5h0M779.5 107.5h0M780.5 101.5h0M780.5 106.5h0M780.5 104.5h0M781.5 110.5h0M781.5 97.5h0M781.5 95.5h0M781.5 113.5h0M781.5 107.5h0M782.5 110.5h0M782.5 107.5h0M782.5 111.5h0M783.5 113.5h0M783.5 117.5h0M783.5 112.5h0M783.5 109.5h0M784.5 103.5h0M784.5 106.5h0M784.5 112.5h0M784.5 113.5h0M785.5 118.5h0M785.5 105.5h0M785.5 109.5h0M786.5 105.5h0M786.5 105.5h0M786.5 106.5h0M786.5 110.5h0M787.5 111.5h0M787.5 115.5h0M787.5 113.5h0M787.5 107.5h0M788.5 96.5h0M788.5 112.5h0M788.5 108.5h0M789.5 109.5h0M789.5 112.5h0M789.5 110.5h0M789.5 111.5h0M790.5 122.5h0M790.5 105.5h0M790.5 121.5h0M790.5 113.5h0M791.5 113.5h0M791.5 107.5h0M791.5 111.5h0M792.5 113.5h0M792.5 115.5h0M792.5 109.5h0M792.5 112.5h0M793.5 115.5h0M793.5 119.5h0M793.5 116.5h0M793.5 110.5h0M794.5 120.5h0M794.5 110.5h0M794.5 110.5h0M794.5 104.5h0M795.5 115.5h0M795.5 117.5h0M795.5 111.5h0M795.5 113.5h0M796.5 127.5h0M796.5 104.5h0M796.5 109.5h0M796.5 110.5h0M797.5 116.5h0M797.5 109.5h0M797.5 113.5h0M797.5 101.5h0M798.5 107.5h0M798.5 102.5h0M798.5 119.5h0M799.5 116.5h0M799.5 114.5h0M799.5 115.5h0M799.5 101.5h0M800.5 109.5h0M800.5 118.5h0M800.5 113.5h0M800.5 100.5h0M801.5 113.5h0M801.5 107.5h0M801.5 122.5h0M801.5 115.5h0M802.5 112.5h0M802.5 113.5h0M802.5 111.5h0M802.5 109.5h0M803.5 104.5h0M803.5 122.5h0M803.5 111.5h0M804.5 107.5h0M804.5 110.5h0M804.5 104.5h0M804.5 112.5h0M805.5 114.5h0M805.5 117.5h0M805.5 106.5h0M805.5 119.5h0M806.5 114.5h0M806.5 112.5h0M806.5 108.5h0M806.5 113.5h0M807.5 117.5h0M807.5 108.5h0M807.5 119.5h0M808.5 116.5h0M808.5 124.5h0M808.5 111.5h0M808.5 111.5h0M809.5 122.5h0M809.5 113.5h0M825.5 111.5h0M825.5 108.5h0M825.5 102.5h0M826.5 99.5h0M826.5 109.5h0M826.5 120.5h0M826.5 110.5h0M827.5 111.5h0M827.5 110.5h0M827.5 111.5h0M827.5 110.5h0M828.5 124.5h0M828.5 107.5h0M828.5 107.5h0M828.5 108.5h0M829.5 111.5h0M829.5 105.5h0M829.5 121.5h0M830.5 111.5h0M830.5 107.5h0M830.5 114.5h0M830.5 111.5h0M831.5 105.5h0M831.5 112.5h0M831.5 116.5h0M831.5 114.5h0M832.5 109.5h0M832.5 118.5h0M832.5 111.5h0M832.5 114.5h0M833.5 111.5h0M833.5 107.5h0M833.5 107.5h0M833.5 111.5h0M834.5 110.5h0M834.5 107.5h0M834.5 117.5h0M834.5 111.5h0M835.5 119.5h0M835.5 104.5h0M835.5 111.5h0M836.5 120.5h0M836.5 115.5h0M836.5 108.5h0M836.5 110.5h0M837.5 122.5h0M837.5 102.5h0M837.5 111.5h0M837.5 110.5h0M838.5 114.5h0M838.5 117.5h0M838.5 122.5h0M838.5 112.5h0M839.5 113.5h0M839.5 114.5h0M839.5 108.5h0M839.5 111.5h0M840.5 119.5h0M840.5 115.5h0M840.5 106.5h0M840.5 121.5h0M841.5 100.5h0M841.5 116.5h0M841.5 97.5h0M842.5 110.5h0M842.5 123.5h0M842.5 110.5h0M842.5 112.5h0M843.5 115.5h0M843.5 112.5h0M843.5 112.5h0M844.5 108.5h0M844.5 114.5h0M844.5 112.5h0M844.5 108.5h0M845.5 113.5h0M845.5 120.5h0M845.5 107.5h0M845.5 114.5h0M846.5 111.5h0M846.5 117.5h0M846.5 113.5h0M847.5 118.5h0M847.5 103.5h0M847.5 119.5h0M847.5 106.5h0M848.5 124.5h0M848.5 110.5h0M848.5 114.5h0M848.5 106.5h0M849.5 110.5h0M849.5 98.5h0M849.5 94.5h0M849.5 115.5h0M850.5 107.5h0M850.5 117.5h0M850.5 117.5h0M850.5 112.5h0M851.5 106.5h0M851.5 107.5h0M851.5 112.5h0M851.5 104.5h0M852.5 118.5h0M852.5 116.5h0M852.5 111.5h0M853.5 122.5h0M853.5 102.5h0M853.5 111.5h0M853.5 112.5h0M854.5 108.5h0M854.5 119.5h0M854.5 111.5h0M854.5 121.5h0M855.5 111.5h0M855.5 109.5h0M855.5 100.5h0M855.5 110.5h0M856.5 101.5h0M856.5 110.5h0M856.5 120.5h0M857.5 105.5h0M857.5 109.5h0M857.5 113.5h0M857.5 104.5h0M858.5 116.5h0M858.5 112.5h0M858.5 105.5h0M858.5 104.5h0M859.5 113.5h0M859.5 107.5h0M859.5 109.5h0M859.5 105.5h0M860.5 111.5h0M860.5 122.5h0M860.5 112.5h0M860.5 100.5h0M861.5 114.5h0M861.5 110.5h0M861.5 104.5h0M862.5 111.5h0M862.5 116.5h0M862.5 109.5h0M862.5 111.5h0M863.5 115.5h0M863.5 110.5h0M863.5 118.5h0M863.5 119.5h0M864.5 116.5h0M864.5 111.5h0M864.5 110.5h0M864.5 113.5h0M865.5 103.5h0M865.5 106.5h0M865.5 109.5h0M865.5 103.5h0M866.5 101.5h0M866.5 106.5h0M866.5 113.5h0M866.5 105.5h0M867.5 103.5h0M867.5 108.5h0M867.5 111.5h0M867.5 109.5h0M868.5 108.5h0M868.5 122.5h0M868.5 101.5h0M869.5 110.5h0M869.5 98.5h0M869.5 110.5h0M869.5 116.5h0M870.5 106.5h0M870.5 110.5h0M870.5 106.5h0M870.5 114.5h0M871.5 114.5h0M871.5 115.5h0M871.5 116.5h0M871.5 109.5h0M872.5 119.5h0M872.5 111.5h0M872.5 105.5h0M873.5 118.5h0M873.5 113.5h0M873.5 117.5h0M873.5 114.5h0M874.5 111.5h0M874.5 108.5h0M874.5 107.5h0M874.5 116.5h0M875.5 108.5h0M875.5 116.5h0M875.5 120.5h0M875.5 119.5h0M876.5 125.5h0M876.5 113.5h0M876.5 124.5h0M876.5 112.5h0M877.5 97.5h0M877.5 119.5h0M877.5 126.5h0M877.5 111.5h0M878.5 120.5h0M878.5 113.5h0M878.5 113.5h0M879.5 112.5h0M879.5 99.5h0M879.5 111.5h0M879.5 111.5h0M880.5 114.5h0M880.5 118.5h0M880.5 117.5h0M880.5 120.5h0M881.5 108.5h0M881.5 114.5h0M881.5 109.5h0M881.5 111.5h0M882.5 99.5h0M882.5 113.5h0M882.5 109.5h0M883.5 116.5h0M883.5 105.5h0M883.5 114.5h0M883.5 112.5h0M884.5 121.5h0M884.5 109.5h0M884.5 102.5h0M884.5 104.5h0M885.5 119.5h0M885.5 106.5h0M885.5 116.5h0M885.5 122.5h0M886.5 119.5h0M886.5 104.5h0M886.5 113.5h0M886.5 119.5h0M887.5 109.5h0M887.5 109.5h0M887.5 113.5h0M887.5 108.5h0M888.5 113.5h0M888.5 103.5h0M888.5 106.5h0M888.5 111.5h0M889.5 108.5h0M889.5 105.5h0M889.5 111.5h0M890.5 107.5h0M890.5 111.5h0M890.5 112.5h0M890.5 122.5h0M891.5 118.5h0M891.5 117.5h0M891.5 110.5h0M891.5 94.5h0M892.5 116.5h0M892.5 113.5h0M892.5 119.5h0M892.5 113.5h0M893.5 112.5h0M893.5 106.5h0M893.5 119.5h0M894.5 108.5h0M894.5 109.5h0M894.5 113.5h0M894.5 118.5h0M894.5 117.5h0M895.5 112.5h0M895.5 107.5h0M895.5 111.5h0M896.5 115.5h0M896.5 109.5h0M896.5 117.5h0M896.5 106.5h0M897.5 93.5h0M897.5 115.5h0M897.5 105.5h0M897.5 117.5h0M898.5 111.5h0M898.5 108.5h0M898.5 104.5h0M899.5 111.5h0M899.5 103.5h0M899.5 119.5h0M899.5 113.5h0M899.5 112.5h0M900.5 111.5h0M900.5 112.5h0M900.5 100.5h0M901.5 114.5h0M901.5 105.5h0M901.5 109.5h0M901.5 99.5h0M902.5 113.5h0M902.5 107.5h0M902.5 108.5h0M902.5 132.5h0M903.5 109.5h0M903.5 105.5h0M903.5 102.5h0M903.5 119.5h0M904.5 113.5h0M904.5 104.5h0M904.5 119.5h0M904.5 117.5h0M905.5 109.5h0M905.5 108.5h0M905.5 104.5h0M906.5 105.5h0M906.5 111.5h0M906.5 119.5h0M906.5 117.5h0M907.5 113.5h0M907.5 111.5h0M907.5 113.5h0M907.5 108.5h0M908.5 118.5h0M908.5 116.5h0M908.5 121.5h0M908.5 101.5h0M909.5 114.5h0M909.5 107.5h0M909.5 106.5h0M910.5 111.5h0M910.5 115.5h0M910.5 117.5h0M910.5 115.5h0M911.5 125.5h0M911.5 117.5h0M911.5 109.5h0M911.5 112.5h0M912.5 109.5h0M912.5 109.5h0M912.5 110.5h0M912.5 114.5h0M913.5 113.5h0M913.5 109.5h0M913.5 117.5h0M913.5 123.5h0M914.5 110.5h0M914.5 115.5h0M914.5 108.5h0M914.5 119.5h0M915.5 125.5h0M915.5 116.5h0M915.5 119.5h0M916.5 121.5h0M916.5 105.5h0M916.5 113.5h0M916.5 122.5h0M917.5 125.5h0M917.5 116.5h0M917.5 111.5h0M917.5 113.5h0M918.5 108.5h0M918.5 113.5h0M918.5 112.5h0M918.5 127.5h0M919.5 107.5h0M919.5 118.5h0M919.5 109.5h0M919.5 125.5h0M920.5 121.5h0M920.5 107.5h0M920.5 123.5h0M920.5 114.5h0M921.5 117.5h0M921.5 104.5h0M921.5 112.5h0M922.5 106.5h0M922.5 115.5h0M922.5 125.5h0M922.5 102.5h0M923.5 118.5h0M923.5 114.5h0M923.5 114.5h0M923.5 124.5h0M924.5 110.5h0M924.5 116.5h0M924.5 125.5h0M924.5 123.5h0M925.5 128.5h0M925.5 119.5h0M925.5 115.5h0M925.5 120.5h0M926.5 114.5h0M926.5 116.5h0M926.5 110.5h0M927.5 113.5h0M927.5 114.5h0M927.5 118.5h0M927.5 120.5h0M928.5 119.5h0M928.5 111.5h0M928.5 116.5h0M928.5 104.5h0M929.5 108.5h0M929.5 121.5h0M929.5 110.5h0M929.5 105.5h0M930.5 116.5h0M930.5 105.5h0M930.5 117.5h0M930.5 102.5h0M931.5 109.5h0M931.5 113.5h0M931.5 122.5h0M931.5 113.5h0M941.5 116.5h0M941.5 106.5h0M941.5 112.5h0M942.5 113.5h0M942.5 106.5h0M942.5 110.5h0M942.5 113.5h0M943.5 95.5h0M943.5 111.5h0M943.5 122.5h0M943.5 112.5h0M944.5 112.5h0M944.5 103.5h0M944.5 112.5h0M945.5 118.5h0M945.5 112.5h0M945.5 122.5h0M945.5 116.5h0M946.5 112.5h0M946.5 119.5h0M946.5 127.5h0M946.5 121.5h0M947.5 119.5h0M947.5 111.5h0M947.5 117.5h0M947.5 115.5h0M948.5 120.5h0M948.5 114.5h0M948.5 118.5h0M948.5 111.5h0M949.5 113.5h0M949.5 105.5h0M949.5 111.5h0M950.5 117.5h0M950.5 120.5h0M950.5 113.5h0M950.5 110.5h0M951.5 105.5h0M951.5 118.5h0M951.5 123.5h0M951.5 126.5h0M952.5 121.5h0M952.5 116.5h0M952.5 116.5h0M952.5 117.5h0M953.5 115.5h0M953.5 113.5h0M953.5 125.5h0M953.5 114.5h0M954.5 116.5h0M954.5 116.5h0M954.5 117.5h0M955.5 126.5h0M955.5 112.5h0M955.5 118.5h0M955.5 115.5h0M956.5 113.5h0M956.5 114.5h0M956.5 112.5h0M956.5 112.5h0M957.5 120.5h0M957.5 121.5h0M957.5 109.5h0M957.5 119.5h0M958.5 101.5h0M958.5 121.5h0M958.5 113.5h0M958.5 115.5h0M959.5 112.5h0M959.5 120.5h0M959.5 112.5h0M959.5 102.5h0M960.5 117.5h0M960.5 128.5h0M960.5 110.5h0M961.5 111.5h0M961.5 110.5h0M961.5 119.5h0M961.5 111.5h0M962.5 109.5h0M962.5 117.5h0M962.5 114.5h0M962.5 111.5h0M963.5 109.5h0M963.5 116.5h0M963.5 113.5h0M963.5 102.5h0M964.5 102.5h0M964.5 121.5h0M964.5 101.5h0M964.5 117.5h0M965.5 108.5h0M965.5 122.5h0M965.5 115.5h0M966.5 118.5h0M966.5 109.5h0M966.5 113.5h0M966.5 112.5h0M967.5 112.5h0M967.5 113.5h0M967.5 109.5h0M967.5 114.5h0M968.5 115.5h0M968.5 118.5h0M968.5 120.5h0M968.5 118.5h0M969.5 112.5h0M969.5 108.5h0M969.5 115.5h0M970.5 102.5h0M970.5 107.5h0M970.5 114.5h0M970.5 112.5h0M971.5 115.5h0M971.5 126.5h0M971.5 109.5h0M971.5 113.5h0M972.5 125.5h0M972.5 109.5h0M972.5 118.5h0M972.5 116.5h0M973.5 125.5h0M973.5 115.5h0M973.5 112.5h0M973.5 117.5h0M974.5 115.5h0M974.5 126.5h0M974.5 112.5h0M974.5 115.5h0M975.5 115.5h0M975.5 111.5h0M975.5 108.5h0M976.5 115.5h0M976.5 109.5h0M976.5 104.5h0M976.5 122.5h0M977.5 114.5h0M977.5 125.5h0M977.5 113.5h0M977.5 106.5h0M978.5 116.5h0M978.5 122.5h0M978.5 118.5h0M978.5 112.5h0M979.5 124.5h0M979.5 124.5h0M979.5 112.5h0M980.5 123.5h0M980.5 114.5h0M980.5 121.5h0M980.5 125.5h0M981.5 109.5h0M981.5 107.5h0M989.5 110.5h0M989.5 111.5h0M989.5 108.5h0M990.5 107.5h0M990.5 119.5h0M990.5 110.5h0M990.5 97.5h0M991.5 106.5h0M991.5 104.5h0M991.5 111.5h0M991.5 98.5h0M992.5 107.5h0M992.5 113.5h0M992.5 116.5h0M992.5 108.5h0M993.5 100.5h0M993.5 115.5h0M993.5 117.5h0M994.5 126.5h0M994.5 107.5h0M994.5 118.5h0M994.5 116.5h0M995.5 118.5h0M995.5 117.5h0M995.5 107.5h0M995.5 116.5h0M996.5 111.5h0M996.5 116.5h0M996.5 114.5h0M996.5 108.5h0M997.5 108.5h0M997.5 119.5h0M997.5 112.5h0M997.5 118.5h0M998.5 107.5h0M998.5 116.5h0M998.5 117.5h0M999.5 107.5h0M999.5 115.5h0M999.5 111.5h0M999.5 107.5h0M999.5 115.5h0M1000.5 114.5h0M1000.5 108.5h0M1000.5 98.5h0M1001.5 108.5h0M1001.5 107.5h0M1001.5 111.5h0M1001.5 112.5h0M1002.5 102.5h0M1002.5 116.5h0M1002.5 116.5h0M1002.5 102.5h0M1003.5 116.5h0M1003.5 119.5h0M1003.5 108.5h0M1003.5 105.5h0M1004.5 100.5h0M1004.5 98.5h0M1004.5 125.5h0M1004.5 112.5h0M1005.5 113.5h0M1005.5 109.5h0M1005.5 116.5h0M1006.5 111.5h0M1006.5 109.5h0M1006.5 110.5h0M1006.5 116.5h0M1007.5 109.5h0M1007.5 116.5h0M1007.5 116.5h0M1007.5 112.5h0M1008.5 106.5h0M1008.5 123.5h0M1008.5 111.5h0M1008.5 102.5h0M1009.5 110.5h0M1009.5 114.5h0M1009.5 109.5h0M1010.5 101.5h0M1010.5 111.5h0M1010.5 115.5h0M1010.5 106.5h0M1011.5 112.5h0M1011.5 115.5h0M1011.5 105.5h0M1011.5 115.5h0M1012.5 112.5h0M1012.5 102.5h0M1012.5 109.5h0M1012.5 102.5h0M1013.5 121.5h0M1013.5 119.5h0M1013.5 115.5h0M1013.5 111.5h0M1014.5 122.5h0M1014.5 109.5h0M1014.5 113.5h0M1015.5 113.5h0M1015.5 110.5h0M1015.5 111.5h0M1015.5 117.5h0M1016.5 111.5h0M1016.5 117.5h0M1016.5 102.5h0M1016.5 113.5h0M1017.5 111.5h0M1017.5 114.5h0M1017.5 110.5h0M1017.5 108.5h0M1018.5 110.5h0M1018.5 116.5h0M1018.5 103.5h0M1018.5 110.5h0M1019.5 121.5h0M1019.5 124.5h0M1019.5 117.5h0M1020.5 117.5h0M1020.5 120.5h0M1020.5 116.5h0M1020.5 108.5h0M1020.5 102.5h0M1021.5 108.5h0M1021.5 108.5h0M1021.5 103.5h0M1022.5 96.5h0M1022.5 103.5h0M1022.5 106.5h0M1022.5 111.5h0M1023.5 116.5h0M1023.5 107.5h0M1023.5 102.5h0M1023.5 108.5h0M1024.5 113.5h0M1024.5 106.5h0M1024.5 111.5h0M1024.5 114.5h0M1025.5 122.5h0M1025.5 107.5h0M1025.5 114.5h0M1025.5 103.5h0M1026.5 114.5h0M1026.5 110.5h0M1026.5 114.5h0M1027.5 99.5h0M1027.5 102.5h0M1027.5 110.5h0M1027.5 101.5h0M1028.5 118.5h0M1028.5 106.5h0M1028.5 114.5h0M1028.5 111.5h0M1029.5 113.5h0M1029.5 107.5h0M1029.5 122.5h0M1029.5 114.5h0M1030.5 102.5h0M1030.5 125.5h0M1030.5 112.5h0M1031.5 119.5h0M1031.5 128.5h0M1031.5 109.5h0M1031.5 114.5h0M1032.5 103.5h0M1032.5 123.5h0M1032.5 109.5h0M1032.5 101.5h0M1033.5 123.5h0M1033.5 107.5h0M1033.5 107.5h0M1033.5 110.5h0M1034.5 103.5h0M1034.5 107.5h0M1034.5 116.5h0M1034.5 116.5h0M1035.5 112.5h0M1035.5 101.5h0M1035.5 112.5h0M1035.5 106.5h0M1036.5 113.5h0M1036.5 108.5h0M1036.5 108.5h0M1037.5 104.5h0M1037.5 100.5h0M1037.5 115.5h0M1037.5 119.5h0M1038.5 112.5h0M1038.5 112.5h0M1038.5 110.5h0M1038.5 106.5h0M1039.5 114.5h0M1039.5 112.5h0M1039.5 112.5h0M1039.5 105.5h0M1040.5 115.5h0M1040.5 104.5h0M1040.5 100.5h0M1040.5 113.5h0M1041.5 103.5h0M1041.5 108.5h0M1041.5 112.5h0M1042.5 99.5h0M1042.5 104.5h0M1042.5 114.5h0M1042.5 108.5h0M1043.5 116.5h0M1043.5 120.5h0M1043.5 105.5h0M1043.5 112.5h0M1044.5 101.5h0M1044.5 111.5h0M1044.5 110.5h0M1044.5 112.5h0M1045.5 111.5h0M1045.5 117.5h0M1045.5 113.5h0M1045.5 123.5h0M1046.5 123.5h0M1046.5 120.5h0M1046.5 115.5h0M1047.5 112.5h0M1047.5 113.5h0M1047.5 104.5h0M1047.5 96.5h0M1048.5 127.5h0M1048.5 102.5h0M1048.5 106.5h0M1048.5 115.5h0M1049.5 110.5h0M1049.5 124.5h0M1049.5 113.5h0M1049.5 101.5h0M1050.5 119.5h0M1050.5 115.5h0M1050.5 111.5h0M1050.5 107.5h0M1051.5 111.5h0M1051.5 114.5h0M1051.5 107.5h0M1051.5 115.5h0M1052.5 96.5h0M1052.5 103.5h0M1052.5 110.5h0M1052.5 116.5h0M1053.5 114.5h0M1053.5 115.5h0M1053.5 113.5h0M1054.5 108.5h0M1054.5 119.5h0M1054.5 110.5h0M1054.5 111.5h0M1055.5 117.5h0M1055.5 103.5h0M1055.5 108.5h0M1055.5 108.5h0M1056.5 114.5h0M1056.5 115.5h0M1056.5 110.5h0M1057.5 120.5h0M1057.5 108.5h0M1057.5 117.5h0M1057.5 110.5h0M1058.5 106.5h0M1058.5 112.5h0M1058.5 114.5h0M1058.5 115.5h0M1059.5 109.5h0M1059.5 117.5h0M1059.5 110.5h0M1059.5 104.5h0M1060.5 122.5h0M1060.5 115.5h0M1060.5 108.5h0M1060.5 117.5h0M1061.5 117.5h0M1061.5 118.5h0M1061.5 105.5h0M1061.5 123.5h0M1062.5 111.5h0M1062.5 111.5h0M1062.5 110.5h0M1062.5 115.5h0M1063.5 110.5h0M1063.5 113.5h0M1063.5 115.5h0M1063.5 94.5h0M1064.5 104.5h0M1064.5 117.5h0M1064.5 114.5h0M1065.5 107.5h0M1065.5 101.5h0M1065.5 111.5h0M1065.5 106.5h0M1066.5 109.5h0M1066.5 103.5h0M1066.5 113.5h0M1066.5 115.5h0M1067.5 108.5h0M1067.5 108.5h0M1067.5 110.5h0M1067.5 102.5h0M1068.5 106.5h0M1068.5 109.5h0M1068.5 117.5h0M1068.5 106.5h0M1069.5 105.5h0M1069.5 114.5h0M1069.5 111.5h0M1070.5 117.5h0M1070.5 110.5h0M1070.5 112.5h0M1070.5 122.5h0M1071.5 111.5h0M1071.5 113.5h0M1071.5 113.5h0M1071.5 105.5h0M1072.5 108.5h0M1072.5 106.5h0M1072.5 114.5h0M1072.5 104.5h0M1073.5 117.5h0M1073.5 108.5h0M1073.5 122.5h0M1073.5 111.5h0M1074.5 119.5h0M1074.5 122.5h0M1074.5 109.5h0M1075.5 112.5h0M1075.5 110.5h0M1075.5 113.5h0M1075.5 112.5h0M1076.5 114.5h0M1076.5 115.5h0M1076.5 114.5h0M1076.5 100.5h0M1077.5 121.5h0M1077.5 124.5h0M1077.5 121.5h0M1077.5 119.5h0M1078.5 112.5h0M1078.5 109.5h0M1078.5 108.5h0M1078.5 117.5h0M1079.5 111.5h0M1079.5 104.5h0M1079.5 112.5h0M1079.5 107.5h0M1080.5 122.5h0M1080.5 110.5h0M1080.5 111.5h0M1080.5 123.5h0M1081.5 115.5h0M1081.5 112.5h0M1081.5 121.5h0M1082.5 110.5h0M1082.5 110.5h0M1082.5 114.5h0M1082.5 117.5h0M1083.5 117.5h0M1083.5 114.5h0M1083.5 109.5h0M1083.5 125.5h0M1084.5 115.5h0M1084.5 115.5h0M1084.5 122.5h0M1084.5 124.5h0M1085.5 118.5h0M1085.5 127.5h0M1085.5 115.5h0M1086.5 118.5h0M1086.5 123.5h0M1086.5 117.5h0M1086.5 122.5h0M1087.5 121.5h0M1087.5 109.5h0M1087.5 122.5h0M1088.5 115.5h0M1088.5 123.5h0M1088.5 122.5h0M1088.5 107.5h0M1089.5 117.5h0M1089.5 112.5h0M1089.5 126.5h0M1089.5 123.5h0M1090.5 122.5h0M1090.5 112.5h0M1090.5 121.5h0M1090.5 129.5h0M1091.5 112.5h0M1091.5 120.5h0M1091.5 116.5h0M1092.5 112.5h0M1092.5 103.5h0M1092.5 117.5h0M1092.5 107.5h0M1093.5 125.5h0M1093.5 116.5h0M1093.5 115.5h0M1093.5 131.5h0M1094.5 123.5h0M1094.5 121.5h0M1094.5 114.5h0M1094.5 120.5h0M1095.5 119.5h0M1095.5 121.5h0M1095.5 114.5h0M1096.5 117.5h0M1111.5 122.5h0M1111.5 107.5h0M1111.5 113.5h0M1112.5 113.5h0M1112.5 111.5h0M1112.5 99.5h0M1113.5 104.5h0M1113.5 109.5h0M1113.5 118.5h0M1113.5 112.5h0M1114.5 111.5h0M1114.5 104.5h0M1114.5 106.5h0M1114.5 106.5h0M1115.5 115.5h0M1115.5 103.5h0M1115.5 118.5h0M1116.5 115.5h0M1116.5 108.5h0M1116.5 102.5h0M1116.5 107.5h0M1117.5 108.5h0M1117.5 99.5h0M1117.5 115.5h0M1118.5 121.5h0M1118.5 118.5h0M1118.5 103.5h0M1118.5 102.5h0M1119.5 111.5h0M1119.5 117.5h0M1119.5 114.5h0M1119.5 106.5h0M1120.5 102.5h0M1120.5 112.5h0M1120.5 114.5h0M1120.5 114.5h0M1121.5 113.5h0M1121.5 105.5h0M1121.5 108.5h0M1121.5 107.5h0M1122.5 108.5h0M1122.5 108.5h0M1122.5 117.5h0M1123.5 116.5h0M1123.5 107.5h0M1123.5 107.5h0M1123.5 103.5h0M1124.5 110.5h0M1124.5 115.5h0M1124.5 111.5h0M1124.5 111.5h0M1125.5 107.5h0M1125.5 111.5h0M1125.5 107.5h0M1125.5 107.5h0M1126.5 107.5h0M1126.5 107.5h0M1126.5 117.5h0M1127.5 103.5h0M1127.5 100.5h0M1127.5 105.5h0M1127.5 100.5h0M1128.5 108.5h0M1128.5 114.5h0M1128.5 107.5h0M1128.5 110.5h0M1129.5 111.5h0M1129.5 100.5h0M1129.5 116.5h0M1129.5 103.5h0M1130.5 114.5h0M1130.5 121.5h0M1130.5 105.5h0M1130.5 109.5h0M1131.5 109.5h0M1131.5 108.5h0M1131.5 103.5h0M1131.5 107.5h0M1132.5 111.5h0M1132.5 110.5h0M1132.5 107.5h0M1132.5 113.5h0M1133.5 107.5h0M1133.5 122.5h0M1133.5 110.5h0M1134.5 110.5h0M1134.5 105.5h0M1134.5 116.5h0M1134.5 111.5h0M1135.5 107.5h0M1135.5 109.5h0M1135.5 106.5h0M1136.5 113.5h0M1136.5 97.5h0M1136.5 111.5h0M1136.5 111.5h0M1137.5 109.5h0M1137.5 118.5h0M1137.5 117.5h0M1137.5 113.5h0M1138.5 115.5h0M1138.5 104.5h0M1138.5 114.5h0M1139.5 97.5h0M1139.5 109.5h0M1139.5 115.5h0M1139.5 110.5h0M1140.5 107.5h0M1140.5 111.5h0M1140.5 108.5h0M1140.5 112.5h0M1141.5 116.5h0M1141.5 112.5h0M1141.5 100.5h0M1141.5 114.5h0M1142.5 112.5h0M1142.5 121.5h0M1142.5 115.5h0M1142.5 109.5h0M1143.5 113.5h0M1143.5 104.5h0M1143.5 105.5h0M1144.5 114.5h0M1144.5 111.5h0M1144.5 107.5h0M1144.5 108.5h0M1145.5 112.5h0M1145.5 122.5h0M1145.5 102.5h0M1145.5 110.5h0M1146.5 109.5h0M1146.5 114.5h0M1146.5 101.5h0M1146.5 110.5h0M1147.5 109.5h0M1147.5 122.5h0M1147.5 112.5h0M1147.5 110.5h0M1148.5 107.5h0M1148.5 105.5h0M1148.5 111.5h0M1148.5 103.5h0M1149.5 110.5h0M1149.5 110.5h0M1149.5 109.5h0M1150.5 120.5h0M1150.5 123.5h0M1150.5 98.5h0M1150.5 120.5h0M1151.5 113.5h0M1151.5 106.5h0M1151.5 113.5h0M1151.5 103.5h0M1152.5 121.5h0M1152.5 109.5h0M1152.5 106.5h0M1152.5 96.5h0M1153.5 101.5h0M1153.5 114.5h0M1153.5 104.5h0M1153.5 108.5h0M1154.5 117.5h0M1154.5 113.5h0M1154.5 103.5h0M1155.5 111.5h0M1155.5 116.5h0M1155.5 114.5h0M1155.5 117.5h0M1156.5 119.5h0M1156.5 107.5h0M1156.5 107.5h0M1156.5 103.5h0M1157.5 119.5h0M1157.5 117.5h0M1157.5 107.5h0M1157.5 109.5h0M1158.5 111.5h0M1158.5 117.5h0M1158.5 112.5h0M1158.5 118.5h0M1159.5 100.5h0M1159.5 105.5h0M1159.5 116.5h0M1160.5 102.5h0M1160.5 116.5h0M1160.5 106.5h0M1160.5 108.5h0M1161.5 112.5h0M1161.5 101.5h0M1161.5 119.5h0M1161.5 111.5h0M1162.5 111.5h0M1162.5 120.5h0M1162.5 119.5h0M1162.5 109.5h0M1163.5 108.5h0M1163.5 116.5h0M1163.5 106.5h0M1163.5 107.5h0M1164.5 105.5h0M1164.5 111.5h0M1164.5 111.5h0M1164.5 106.5h0M1165.5 114.5h0M1165.5 115.5h0M1165.5 118.5h0M1165.5 107.5h0M1166.5 103.5h0M1166.5 122.5h0M1166.5 112.5h0M1167.5 106.5h0M1167.5 102.5h0M1167.5 109.5h0M1167.5 116.5h0M1168.5 107.5h0M1168.5 97.5h0M1168.5 109.5h0M1168.5 107.5h0M1169.5 100.5h0M1169.5 120.5h0M1169.5 106.5h0M1169.5 102.5h0M1170.5 105.5h0M1170.5 110.5h0M1170.5 113.5h0M1170.5 114.5h0M1171.5 119.5h0M1171.5 114.5h0M1171.5 118.5h0M1172.5 112.5h0M1172.5 112.5h0M1172.5 115.5h0M1172.5 114.5h0M1173.5 111.5h0M1173.5 118.5h0M1173.5 107.5h0M1173.5 110.5h0M1174.5 107.5h0M1174.5 113.5h0M1174.5 112.5h0M1174.5 110.5h0M1175.5 110.5h0M1175.5 113.5h0M1175.5 113.5h0M1176.5 114.5h0M1176.5 113.5h0M1176.5 115.5h0M1176.5 116.5h0M1176.5 117.5h0M1177.5 103.5h0M1177.5 115.5h0M1177.5 111.5h0M1178.5 117.5h0M1178.5 110.5h0M1178.5 104.5h0M1178.5 115.5h0M1179.5 110.5h0M1179.5 111.5h0M1179.5 106.5h0M1179.5 111.5h0M1180.5 112.5h0M1180.5 112.5h0M1180.5 123.5h0M1181.5 105.5h0M1181.5 101.5h0M1181.5 116.5h0M1181.5 106.5h0M1181.5 111.5h0M1182.5 102.5h0M1182.5 114.5h0M1182.5 108.5h0M1183.5 103.5h0M1183.5 108.5h0M1183.5 110.5h0M1183.5 111.5h0M1184.5 114.5h0M1184.5 110.5h0M1184.5 116.5h0M1184.5 101.5h0M1185.5 107.5h0M1185.5 111.5h0M1185.5 119.5h0M1185.5 104.5h0M1186.5 102.5h0M1186.5 107.5h0M1186.5 104.5h0M1186.5 104.5h0M1187.5 110.5h0M1187.5 111.5h0M1187.5 108.5h0M1188.5 102.5h0M1188.5 112.5h0M1188.5 118.5h0M1188.5 108.5h0M1189.5 108.5h0M1189.5 109.5h0M1189.5 107.5h0M1189.5 115.5h0M1190.5 113.5h0M1190.5 111.5h0M1190.5 109.5h0M1190.5 105.5h0M1191.5 104.5h0M1191.5 107.5h0M1191.5 109.5h0M1191.5 114.5h0M1192.5 111.5h0M1192.5 117.5h0M1192.5 112.5h0M1193.5 106.5h0M1193.5 105.5h0M1193.5 114.5h0M1193.5 101.5h0M1193.5 122.5h0M1194.5 105.5h0M1194.5 108.5h0M1194.5 109.5h0M1195.5 106.5h0M1195.5 111.5h0M1195.5 96.5h0M1195.5 112.5h0M1196.5 111.5h0M1196.5 107.5h0M1196.5 121.5h0M1196.5 110.5h0M1197.5 118.5h0M1197.5 102.5h0M1197.5 113.5h0M1198.5 111.5h0M1198.5 120.5h0M1198.5 100.5h0M1198.5 120.5h0M1199.5 119.5h0M1199.5 115.5h0M1199.5 124.5h0M1199.5 119.5h0M1200.5 113.5h0M1200.5 105.5h0M1200.5 105.5h0M1200.5 118.5h0M1201.5 115.5h0M1201.5 108.5h0M1201.5 105.5h0M1201.5 117.5h0M1202.5 113.5h0M1202.5 112.5h0M1202.5 111.5h0M1203.5 113.5h0M1203.5 101.5h0M1203.5 113.5h0M1203.5 105.5h0M1203.5 109.5h0M1204.5 103.5h0M1204.5 123.5h0M1205.5 108.5h0M1205.5 124.5h0M1205.5 104.5h0M1205.5 114.5h0M1206.5 125.5h0M1206.5 118.5h0M1206.5 114.5h0M1206.5 104.5h0M1207.5 112.5h0M1207.5 110.5h0M1207.5 117.5h0M1207.5 116.5h0M1208.5 122.5h0M1208.5 116.5h0M1208.5 115.5h0M1209.5 114.5h0M1209.5 119.5h0M1209.5 115.5h0M1209.5 117.5h0M1210.5 113.5h0M1210.5 118.5h0M1210.5 118.5h0M1210.5 120.5h0M1211.5 119.5h0M1211.5 116.5h0M1211.5 121.5h0M1211.5 108.5h0M1212.5 109.5h0M1212.5 113.5h0M1212.5 111.5h0M1212.5 122.5h0M1213.5 119.5h0M1213.5 118.5h0M1213.5 114.5h0M1213.5 110.5h0M1214.5 110.5h0M1214.5 124.5h0M1214.5 115.5h0M1215.5 108.5h0M1215.5 117.5h0M1215.5 112.5h0M1215.5 125.5h0M1216.5 115.5h0M1216.5 116.5h0M1216.5 127.5h0M1216.5 110.5h0M1217.5 106.5h0M1217.5 110.5h0M1217.5 117.5h0M1217.5 115.5h0M1218.5 118.5h0M1218.5 111.5h0M1218.5 111.5h0M1231.5 97.5h0M1231.5 105.5h0M1231.5 100.5h0M1232.5 125.5h0M1232.5 108.5h0M1232.5 114.5h0M1232.5 120.5h0M1232.5 112.5h0M1233.5 103.5h0M1233.5 106.5h0M1233.5 116.5h0M1234.5 106.5h0M1234.5 118.5h0M1234.5 118.5h0M1235.5 117.5h0M1235.5 113.5h0M1235.5 116.5h0M1236.5 117.5h0M1236.5 107.5h0M1236.5 117.5h0M1236.5 112.5h0M1236.5 117.5h0M1237.5 114.5h0M1237.5 105.5h0M1237.5 113.5h0M1238.5 108.5h0M1238.5 113.5h0M1238.5 106.5h0M1238.5 113.5h0M1239.5 106.5h0M1239.5 121.5h0M1239.5 106.5h0M1239.5 110.5h0M1240.5 119.5h0M1240.5 117.5h0M1240.5 125.5h0M1240.5 115.5h0M1241.5 112.5h0M1241.5 117.5h0M1241.5 107.5h0M1242.5 127.5h0M1242.5 115.5h0M1242.5 121.5h0M1242.5 117.5h0M1243.5 108.5h0M1243.5 114.5h0M1243.5 105.5h0M1243.5 116.5h0M1244.5 118.5h0M1244.5 116.5h0M1244.5 123.5h0M1244.5 120.5h0M1245.5 115.5h0M1245.5 108.5h0M1245.5 120.5h0M1245.5 120.5h0M1246.5 124.5h0M1246.5 123.5h0M1246.5 114.5h0M1246.5 114.5h0M1247.5 112.5h0M1247.5 116.5h0M1247.5 107.5h0M1248.5 125.5h0M1248.5 114.5h0M1248.5 110.5h0M1248.5 116.5h0M1249.5 111.5h0M1249.5 115.5h0M1249.5 116.5h0M1249.5 112.5h0M1250.5 117.5h0M1250.5 113.5h0M1250.5 109.5h0M1250.5 120.5h0M1251.5 109.5h0M1251.5 106.5h0M1251.5 103.5h0M1251.5 115.5h0M1252.5 106.5h0M1252.5 124.5h0M1252.5 121.5h0M1253.5 112.5h0M1253.5 119.5h0M1253.5 118.5h0M1253.5 119.5h0M1254.5 114.5h0M1254.5 117.5h0M1254.5 118.5h0M1254.5 113.5h0M1255.5 116.5h0M1255.5 112.5h0M1255.5 110.5h0M1256.5 109.5h0M1256.5 114.5h0M1256.5 115.5h0M1256.5 115.5h0M1256.5 119.5h0M1257.5 109.5h0M1257.5 113.5h0M1257.5 106.5h0M1258.5 110.5h0M1258.5 115.5h0M1258.5 107.5h0M1258.5 114.5h0M1259.5 113.5h0M1259.5 109.5h0M1259.5 111.5h0M1259.5 117.5h0M1260.5 108.5h0M1260.5 110.5h0M1260.5 112.5h0M1260.5 113.5h0M1261.5 111.5h0M1261.5 121.5h0M1261.5 104.5h0M1262.5 127.5h0M1262.5 118.5h0M1262.5 118.5h0M1262.5 110.5h0M1263.5 112.5h0M1263.5 110.5h0M1263.5 119.5h0M1263.5 105.5h0M1264.5 106.5h0M1264.5 125.5h0M1264.5 111.5h0M1264.5 124.5h0M1265.5 115.5h0M1265.5 108.5h0M1265.5 112.5h0M1265.5 120.5h0M1266.5 115.5h0M1266.5 105.5h0M1266.5 111.5h0M1267.5 107.5h0M1267.5 122.5h0M1267.5 108.5h0M1267.5 110.5h0M1268.5 117.5h0M1268.5 103.5h0M1268.5 111.5h0M1268.5 106.5h0M1269.5 114.5h0M1269.5 109.5h0M1269.5 108.5h0M1269.5 112.5h0M1270.5 110.5h0M1270.5 109.5h0M1270.5 111.5h0M1274.5 118.5h0M1274.5 123.5h0M1275.5 108.5h0M1275.5 108.5h0M1275.5 112.5h0M1276.5 117.5h0M1276.5 109.5h0M1276.5 111.5h0M1276.5 110.5h0M1277.5 109.5h0M1277.5 120.5h0M1277.5 109.5h0M1277.5 119.5h0M1278.5 109.5h0M1278.5 114.5h0M1278.5 114.5h0M1278.5 102.5h0M1279.5 110.5h0M1279.5 110.5h0M1279.5 107.5h0M1279.5 99.5h0M1280.5 128.5h0M1280.5 108.5h0M1280.5 111.5h0M1281.5 104.5h0M1281.5 111.5h0M1281.5 111.5h0M1281.5 108.5h0M1282.5 111.5h0M1282.5 116.5h0M1282.5 111.5h0M1282.5 100.5h0M1283.5 107.5h0M1283.5 125.5h0M1283.5 112.5h0M1283.5 117.5h0M1284.5 105.5h0M1284.5 118.5h0M1284.5 111.5h0M1284.5 108.5h0M1285.5 106.5h0M1285.5 115.5h0M1285.5 109.5h0M1286.5 97.5h0M1286.5 115.5h0M1286.5 111.5h0M1286.5 116.5h0M1287.5 112.5h0M1287.5 108.5h0M1287.5 111.5h0M1287.5 107.5h0M1288.5 119.5h0M1288.5 110.5h0M1288.5 113.5h0M1289.5 128.5h0M1289.5 104.5h0M1289.5 110.5h0M1289.5 114.5h0M1290.5 104.5h0M1290.5 108.5h0M1290.5 125.5h0M1290.5 108.5h0M1291.5 96.5h0M1291.5 109.5h0M1291.5 106.5h0M1291.5 121.5h0M1292.5 120.5h0M1292.5 120.5h0M1292.5 105.5h0M1292.5 105.5h0M1293.5 126.5h0M1293.5 106.5h0M1293.5 124.5h0M1294.5 120.5h0M1294.5 112.5h0M1294.5 116.5h0M1294.5 112.5h0M1295.5 110.5h0M1295.5 104.5h0M1295.5 114.5h0M1295.5 115.5h0M1296.5 116.5h0M1296.5 97.5h0M1296.5 104.5h0M1296.5 104.5h0M1297.5 108.5h0M1297.5 110.5h0M1297.5 103.5h0M1297.5 112.5h0M1298.5 121.5h0M1298.5 121.5h0M1298.5 96.5h0M1299.5 118.5h0M1299.5 116.5h0M1299.5 112.5h0M1299.5 105.5h0M1300.5 118.5h0M1300.5 113.5h0M1300.5 109.5h0M1300.5 119.5h0M1301.5 111.5h0M1301.5 105.5h0M1301.5 110.5h0M1301.5 111.5h0M1302.5 108.5h0M1302.5 112.5h0M1302.5 114.5h0M1303.5 115.5h0M240.5 92.5h0M229.5 98.5h0M249.5 96.5h0M252.5 94.5h0M292.5 93.5h0M294.5 93.5h0M294.5 92.5h0M365.5 91.5h0M359.5 91.5h0M365.5 94.5h0M406.5 91.5h0M413.5 90.5h0M396.5 98.5h0M397.5 94.5h0M532.5 92.5h0M540.5 93.5h0M579.5 91.5h0M654.5 88.5h0M643.5 95.5h0M639.5 98.5h0M703.5 91.5h0M689.5 94.5h0M690.5 97.5h0M768.5 92.5h0M827.5 88.5h0M819.5 92.5h0M807.5 98.5h0M944.5 89.5h0M940.5 89.5h0M947.5 96.5h0M988.5 88.5h0M990.5 89.5h0M995.5 94.5h0M995.5 97.5h0M992.5 99.5h0M1104.5 90.5h0M1108.5 92.5h0M1114.5 98.5h0M1227.5 93.5h0M1213.5 95.5h0M1216.5 98.5h0M1275.5 88.5h0M1277.5 93.5h0M1264.5 92.5h0M1281.5 93.5h0M246.5 89.5h0M290.5 89.5h0M412.5 88.5h0M412.5 88.5h0M413.5 90.5h0M532.5 88.5h0M577.5 95.5h0M577.5 95.5h0M579.5 90.5h0M650.5 88.5h0M702.5 87.5h0M767.5 95.5h0M768.5 89.5h0M865.5 93.5h0M864.5 95.5h0M940.5 88.5h0M981.5 87.5h0M1057.5 92.5h0M1055.5 96.5h0M1112.5 89.5h0M1223.5 89.5h0M1228.5 88.5h0M1228.5 90.5h0" stroke="#000" stroke-width="3.90" stroke-linecap="round" fill="none"/>
<path d="M234.5 70.5h0M237.5 75.5h0M236.5 63.5h0M234.5 73.5h0M234.5 74.5h0M237.5 75.5h0M236.5 71.5h0M235.5 72.5h0M235.5 76.5h0M236.5 71.5h0M236.5 68.5h0M236.5 66.5h0M237.5 70.5h0M237.5 74.5h0M236.5 77.5h0M241.5 70.5h0M236.5 66.5h0M236.5 63.5h0M239.5 74.5h0M236.5 78.5h0M239.5 78.5h0M239.5 71.5h0M240.5 70.5h0M237.5 77.5h0M236.5 79.5h0M241.5 83.5h0M240.5 70.5h0M243.5 82.5h0M242.5 71.5h0M240.5 75.5h0M242.5 85.5h0M239.5 80.5h0M240.5 70.5h0M242.5 75.5h0M242.5 76.5h0M239.5 69.5h0M244.5 75.5h0M243.5 75.5h0M244.5 75.5h0M240.5 75.5h0M244.5 70.5h0M242.5 78.5h0M242.5 70.5h0M245.5 68.5h0M244.5 78.5h0M245.5 73.5h0M245.5 81.5h0M246.5 75.5h0M242.5 69.5h0M242.5 71.5h0M245.5 78.5h0M245.5 73.5h0M243.5 73.5h0M246.5 75.5h0M244.5 75.5h0M245.5 66.5h0M246.5 79.5h0M247.5 72.5h0M246.5 77.5h0M247.5 75.5h0M246.5 75.5h0M248.5 78.5h0M284.5 65.5h0M285.5 72.5h0M285.5 72.5h0M284.5 67.5h0M285.5 62.5h0M287.5 70.5h0M285.5 68.5h0M284.5 73.5h0M285.5 71.5h0M287.5 72.5h0M288.5 69.5h0M289.5 77.5h0M288.5 73.5h0M288.5 73.5h0M288.5 75.5h0M289.5 78.5h0M289.5 71.5h0M288.5 77.5h0M290.5 83.5h0M291.5 72.5h0M290.5 83.5h0M290.5 72.5h0M291.5 76.5h0M290.5 67.5h0M290.5 77.5h0M292.5 70.5h0M292.5 79.5h0M292.5 81.5h0M291.5 78.5h0M292.5 72.5h0M356.5 69.5h0M357.5 75.5h0M358.5 80.5h0M357.5 77.5h0M359.5 66.5h0M358.5 74.5h0M358.5 79.5h0M359.5 76.5h0M360.5 75.5h0M358.5 68.5h0M360.5 78.5h0M360.5 65.5h0M360.5 74.5h0M361.5 73.5h0M360.5 81.5h0M360.5 73.5h0M360.5 74.5h0M361.5 72.5h0M361.5 80.5h0M362.5 75.5h0M362.5 84.5h0M361.5 82.5h0M364.5 65.5h0M363.5 79.5h0M361.5 81.5h0M361.5 72.5h0M363.5 78.5h0M364.5 64.5h0M363.5 77.5h0M364.5 73.5h0M364.5 79.5h0M402.5 68.5h0M401.5 71.5h0M400.5 76.5h0M400.5 70.5h0M402.5 78.5h0M401.5 76.5h0M400.5 64.5h0M404.5 75.5h0M402.5 71.5h0M405.5 76.5h0M403.5 76.5h0M403.5 80.5h0M410.5 81.5h0M407.5 68.5h0M408.5 63.5h0M405.5 71.5h0M406.5 72.5h0M406.5 78.5h0M410.5 75.5h0M408.5 67.5h0M407.5 60.5h0M407.5 71.5h0M407.5 73.5h0M409.5 69.5h0M407.5 74.5h0M407.5 79.5h0M410.5 80.5h0M409.5 76.5h0M409.5 77.5h0M408.5 85.5h0M406.5 71.5h0M406.5 70.5h0M409.5 71.5h0M410.5 77.5h0M412.5 79.5h0M407.5 76.5h0M408.5 74.5h0M410.5 78.5h0M410.5 70.5h0M408.5 80.5h0M413.5 73.5h0M411.5 71.5h0M416.5 77.5h0M413.5 71.5h0M410.5 70.5h0M410.5 74.5h0M416.5 83.5h0M412.5 73.5h0M412.5 75.5h0M414.5 72.5h0M413.5 78.5h0M412.5 80.5h0M413.5 75.5h0M416.5 64.5h0M416.5 74.5h0M412.5 82.5h0M411.5 77.5h0M416.5 78.5h0M415.5 70.5h0M415.5 76.5h0M521.5 74.5h0M521.5 72.5h0M523.5 78.5h0M523.5 74.5h0M522.5 78.5h0M525.5 72.5h0M523.5 79.5h0M523.5 72.5h0M523.5 69.5h0M525.5 75.5h0M524.5 72.5h0M524.5 72.5h0M521.5 76.5h0M527.5 81.5h0M521.5 68.5h0M525.5 73.5h0M522.5 75.5h0M522.5 67.5h0M521.5 78.5h0M525.5 77.5h0M526.5 78.5h0M525.5 79.5h0M525.5 75.5h0M523.5 77.5h0M526.5 67.5h0M526.5 78.5h0M524.5 68.5h0M526.5 79.5h0M527.5 76.5h0M526.5 75.5h0M530.5 79.5h0M525.5 71.5h0M532.5 78.5h0M530.5 78.5h0M527.5 71.5h0M532.5 79.5h0M531.5 72.5h0M532.5 70.5h0M530.5 71.5h0M529.5 68.5h0M527.5 78.5h0M532.5 69.5h0M531.5 78.5h0M530.5 84.5h0M536.5 77.5h0M533.5 64.5h0M529.5 81.5h0M532.5 67.5h0M534.5 84.5h0M531.5 71.5h0M534.5 74.5h0M533.5 79.5h0M535.5 73.5h0M536.5 73.5h0M529.5 74.5h0M536.5 72.5h0M534.5 81.5h0M534.5 66.5h0M533.5 72.5h0M534.5 81.5h0M537.5 67.5h0M537.5 77.5h0M579.5 86.5h0M577.5 84.5h0M576.5 83.5h0M576.5 82.5h0M575.5 81.5h0M575.5 79.5h0M575.5 77.5h0M576.5 76.5h0M578.5 75.5h0M576.5 74.5h0M574.5 72.5h0M577.5 71.5h0M644.5 72.5h0M643.5 76.5h0M644.5 71.5h0M643.5 69.5h0M643.5 73.5h0M644.5 70.5h0M644.5 73.5h0M643.5 72.5h0M645.5 80.5h0M643.5 60.5h0M648.5 77.5h0M645.5 76.5h0M645.5 78.5h0M648.5 75.5h0M645.5 76.5h0M644.5 85.5h0M647.5 66.5h0M647.5 73.5h0M649.5 76.5h0M648.5 75.5h0M645.5 69.5h0M648.5 70.5h0M648.5 73.5h0M650.5 70.5h0M648.5 71.5h0M648.5 77.5h0M650.5 79.5h0M649.5 81.5h0M651.5 75.5h0M651.5 85.5h0M649.5 74.5h0M651.5 80.5h0M652.5 72.5h0M650.5 86.5h0M650.5 74.5h0M653.5 79.5h0M654.5 83.5h0M654.5 71.5h0M654.5 72.5h0M654.5 82.5h0M653.5 79.5h0M693.5 79.5h0M690.5 67.5h0M691.5 66.5h0M691.5 75.5h0M691.5 72.5h0M692.5 70.5h0M692.5 77.5h0M692.5 76.5h0M695.5 76.5h0M694.5 71.5h0M692.5 70.5h0M697.5 79.5h0M695.5 78.5h0M695.5 71.5h0M694.5 78.5h0M696.5 76.5h0M695.5 71.5h0M695.5 75.5h0M695.5 70.5h0M698.5 75.5h0M697.5 76.5h0M697.5 79.5h0M698.5 78.5h0M699.5 85.5h0M698.5 72.5h0M698.5 72.5h0M697.5 74.5h0M700.5 70.5h0M700.5 64.5h0M698.5 85.5h0M699.5 77.5h0M702.5 72.5h0M700.5 78.5h0M700.5 77.5h0M699.5 71.5h0M699.5 74.5h0M701.5 84.5h0M701.5 69.5h0M701.5 81.5h0M702.5 76.5h0M700.5 74.5h0M701.5 86.5h0M703.5 68.5h0M703.5 74.5h0M701.5 75.5h0M703.5 73.5h0M768.5 82.5h0M767.5 79.5h0M767.5 74.5h0M807.5 73.5h0M807.5 71.5h0M810.5 63.5h0M810.5 73.5h0M810.5 71.5h0M809.5 64.5h0M807.5 75.5h0M807.5 74.5h0M807.5 72.5h0M807.5 71.5h0M811.5 72.5h0M813.5 69.5h0M808.5 79.5h0M813.5 80.5h0M815.5 73.5h0M814.5 81.5h0M815.5 65.5h0M812.5 77.5h0M811.5 76.5h0M813.5 70.5h0M815.5 72.5h0M814.5 70.5h0M813.5 74.5h0M816.5 80.5h0M812.5 75.5h0M816.5 77.5h0M810.5 83.5h0M819.5 76.5h0M819.5 69.5h0M821.5 79.5h0M813.5 78.5h0M815.5 78.5h0M814.5 70.5h0M813.5 85.5h0M811.5 72.5h0M818.5 74.5h0M816.5 75.5h0M816.5 79.5h0M813.5 76.5h0M817.5 64.5h0M822.5 74.5h0M819.5 77.5h0M820.5 71.5h0M816.5 82.5h0M822.5 69.5h0M820.5 76.5h0M820.5 59.5h0M821.5 64.5h0M820.5 72.5h0M823.5 73.5h0M821.5 78.5h0M820.5 73.5h0M819.5 72.5h0M819.5 83.5h0M824.5 84.5h0M825.5 73.5h0M823.5 79.5h0M823.5 75.5h0M822.5 76.5h0M824.5 75.5h0M826.5 78.5h0M825.5 73.5h0M823.5 69.5h0M826.5 68.5h0M826.5 79.5h0M821.5 76.5h0M825.5 76.5h0M826.5 85.5h0M826.5 85.5h0M826.5 78.5h0M826.5 75.5h0M824.5 73.5h0M824.5 81.5h0M865.5 83.5h0M864.5 79.5h0M865.5 76.5h0M864.5 73.5h0M865.5 71.5h0M929.5 69.5h0M929.5 77.5h0M930.5 71.5h0M932.5 61.5h0M932.5 74.5h0M935.5 75.5h0M933.5 78.5h0M934.5 76.5h0M930.5 85.5h0M933.5 74.5h0M932.5 68.5h0M932.5 72.5h0M936.5 73.5h0M934.5 73.5h0M934.5 73.5h0M934.5 79.5h0M933.5 84.5h0M932.5 64.5h0M938.5 71.5h0M936.5 86.5h0M936.5 66.5h0M936.5 77.5h0M936.5 69.5h0M936.5 75.5h0M935.5 78.5h0M938.5 70.5h0M937.5 77.5h0M941.5 72.5h0M937.5 76.5h0M940.5 76.5h0M939.5 77.5h0M943.5 73.5h0M940.5 68.5h0M942.5 70.5h0M940.5 74.5h0M943.5 75.5h0M939.5 80.5h0M939.5 67.5h0M937.5 86.5h0M941.5 81.5h0M941.5 77.5h0M942.5 76.5h0M940.5 75.5h0M942.5 78.5h0M942.5 66.5h0M940.5 70.5h0M944.5 86.5h0M944.5 82.5h0M944.5 84.5h0M944.5 69.5h0M944.5 79.5h0M979.5 69.5h0M980.5 79.5h0M982.5 70.5h0M979.5 73.5h0M981.5 70.5h0M982.5 71.5h0M979.5 70.5h0M982.5 72.5h0M983.5 77.5h0M981.5 75.5h0M983.5 75.5h0M981.5 81.5h0M981.5 73.5h0M982.5 79.5h0M984.5 70.5h0M983.5 64.5h0M983.5 64.5h0M984.5 62.5h0M986.5 77.5h0M982.5 77.5h0M986.5 71.5h0M987.5 80.5h0M984.5 71.5h0M985.5 78.5h0M986.5 73.5h0M986.5 77.5h0M990.5 67.5h0M988.5 69.5h0M987.5 71.5h0M988.5 83.5h0M989.5 70.5h0M988.5 78.5h0M989.5 83.5h0M989.5 75.5h0M990.5 71.5h0M1055.5 87.5h0M1057.5 84.5h0M1057.5 81.5h0M1055.5 79.5h0M1056.5 76.5h0M1057.5 73.5h0M1055.5 70.5h0M1055.5 67.5h0M1057.5 64.5h0M1095.5 76.5h0M1094.5 68.5h0M1094.5 78.5h0M1097.5 74.5h0M1094.5 75.5h0M1095.5 72.5h0M1096.5 74.5h0M1094.5 79.5h0M1096.5 76.5h0M1096.5 75.5h0M1098.5 64.5h0M1096.5 70.5h0M1096.5 74.5h0M1101.5 73.5h0M1101.5 75.5h0M1099.5 66.5h0M1096.5 75.5h0M1100.5 79.5h0M1098.5 59.5h0M1102.5 78.5h0M1099.5 77.5h0M1099.5 79.5h0M1100.5 72.5h0M1098.5 78.5h0M1100.5 79.5h0M1098.5 70.5h0M1101.5 67.5h0M1103.5 73.5h0M1102.5 80.5h0M1099.5 72.5h0M1103.5 78.5h0M1101.5 73.5h0M1099.5 73.5h0M1102.5 81.5h0M1105.5 71.5h0M1103.5 75.5h0M1103.5 76.5h0M1102.5 81.5h0M1104.5 71.5h0M1105.5 79.5h0M1105.5 75.5h0M1107.5 81.5h0M1107.5 82.5h0M1107.5 82.5h0M1105.5 84.5h0M1106.5 78.5h0M1106.5 69.5h0M1107.5 70.5h0M1107.5 80.5h0M1112.5 80.5h0M1104.5 68.5h0M1107.5 72.5h0M1106.5 76.5h0M1108.5 78.5h0M1109.5 78.5h0M1108.5 80.5h0M1107.5 66.5h0M1110.5 69.5h0M1110.5 78.5h0M1105.5 73.5h0M1113.5 74.5h0M1108.5 80.5h0M1113.5 82.5h0M1113.5 80.5h0M1113.5 76.5h0M1112.5 71.5h0M1110.5 76.5h0M1110.5 77.5h0M1113.5 79.5h0M1111.5 71.5h0M1113.5 69.5h0M1112.5 76.5h0M1217.5 70.5h0M1219.5 72.5h0M1217.5 80.5h0M1216.5 73.5h0M1217.5 66.5h0M1217.5 71.5h0M1217.5 58.5h0M1220.5 82.5h0M1219.5 72.5h0M1218.5 84.5h0M1219.5 71.5h0M1217.5 77.5h0M1220.5 75.5h0M1225.5 72.5h0M1218.5 79.5h0M1225.5 78.5h0M1221.5 76.5h0M1221.5 71.5h0M1221.5 68.5h0M1220.5 79.5h0M1224.5 79.5h0M1222.5 75.5h0M1222.5 81.5h0M1223.5 82.5h0M1227.5 72.5h0M1223.5 78.5h0M1224.5 67.5h0M1227.5 80.5h0M1222.5 68.5h0M1226.5 69.5h0M1230.5 77.5h0M1225.5 74.5h0M1227.5 74.5h0M1225.5 75.5h0M1229.5 80.5h0M1227.5 69.5h0M1225.5 72.5h0M1229.5 76.5h0M1228.5 75.5h0M1228.5 84.5h0M1228.5 73.5h0M1228.5 79.5h0M1228.5 75.5h0M1227.5 71.5h0M1224.5 80.5h0M1227.5 74.5h0M1230.5 75.5h0M1231.5 78.5h0M1227.5 80.5h0M1229.5 81.5h0M1229.5 76.5h0M1231.5 74.5h0M1231.5 79.5h0M1232.5 70.5h0M1230.5 78.5h0M1230.5 73.5h0M1233.5 78.5h0M1229.5 77.5h0M1233.5 72.5h0M1233.5 73.5h0M1233.5 70.5h0M1232.5 71.5h0M1232.5 76.5h0M1233.5 73.5h0M1232.5 74.5h0M1232.5 74.5h0M1232.5 72.5h0M1233.5 76.5h0M1233.5 76.5h0M1233.5 74.5h0M1269.5 78.5h0M1268.5 72.5h0M1270.5 67.5h0M1269.5 67.5h0M1270.5 64.5h0M1271.5 75.5h0M1271.5 73.5h0M1271.5 69.5h0M1272.5 72.5h0M1271.5 68.5h0M1271.5 73.5h0M1272.5 82.5h0M1270.5 78.5h0M1271.5 82.5h0M1274.5 73.5h0M1272.5 68.5h0M1272.5 71.5h0M1273.5 77.5h0M1273.5 85.5h0M1273.5 75.5h0M1273.5 78.5h0M1275.5 78.5h0M1275.5 75.5h0M1274.5 62.5h0M1275.5 78.5h0M1276.5 80.5h0M309.5 135.5h0M931.5 133.5h0M1006.5 133.5h0M1009.5 133.5h0M1248.5 135.5h0M447.5 86.5h0M191.5 174.5h0M471.5 155.5h0M498.5 180.5h0M841.5 251.5h0M959.5 297.5h0M984.5 155.5h0M1163.5 209.5h0M1249.5 264.5h0M1278.5 246.5h0" stroke="#ffa500" stroke-width="3.90" stroke-linecap="round" fill="none"/>
<path d="M672.5 150.5h0" stroke="#ffa500" stroke-width="3.90" stroke-linecap="round" fill="none"/>
<path d="M105.5 155.00H1360.8" stroke="#008000" stroke-width="2.08"/>
<path d="M162.00 321.5V35.5" stroke="#800080" stroke-width="2.08" stroke-dasharray="2.08 3.44" stroke-dashoffset="0.0" fill="none"/><path d="M1303.00 321.5V35.5" stroke="#800080" stroke-width="2.08" stroke-dasharray="2.08 3.44" stroke-dashoffset="0.0" fill="none"/>
</g>
<rect x="105.5" y="35.5" width="1380.0" height="286.0" fill="none" stroke="#000" stroke-width="1.11"/>
<path d="M162.5 321.5v4.86" stroke="#000" stroke-width="1.11"/><text x="163.4" y="341.9" text-anchor="middle">0</text><path d="M400.5 321.5v4.86" stroke="#000" stroke-width="1.11"/><text x="399.5" y="341.9" text-anchor="middle">1000</text><path d="M637.5 321.5v4.86" stroke="#000" stroke-width="1.11"/><text x="637.0" y="341.9" text-anchor="middle">2000</text><path d="M874.5 321.5v4.86" stroke="#000" stroke-width="1.11"/><text x="874.5" y="341.9" text-anchor="middle">3000</text><path d="M1112.5 321.5v4.86" stroke="#000" stroke-width="1.11"/><text x="1111.8" y="341.9" text-anchor="middle">4000</text><path d="M1349.5 321.5v4.86" stroke="#000" stroke-width="1.11"/><text x="1349.0" y="341.9" text-anchor="middle">5000</text>
<path d="M105.5 65.5h-4.86" stroke="#000" stroke-width="1.11"/><text x="95.4" y="70.0" text-anchor="end">9.10</text>
<path d="M105.5 106.5h-4.86" stroke="#000" stroke-width="1.11"/><text x="95.4" y="111.0" text-anchor="end">9.05</text>
<path d="M105.5 147.5h-4.86" stroke="#000" stroke-width="1.11"/><text x="95.4" y="152.0" text-anchor="end">9.00</text>
<path d="M105.5 188.5h-4.86" stroke="#000" stroke-width="1.11"/><text x="95.4" y="193.0" text-anchor="end">8.95</text>
<path d="M105.5 229.5h-4.86" stroke="#000" stroke-width="1.11"/><text x="95.4" y="234.0" text-anchor="end">8.90</text>
<path d="M105.5 270.5h-4.86" stroke="#000" stroke-width="1.11"/><text x="95.4" y="275.0" text-anchor="end">8.85</text>
<path d="M105.5 311.5h-4.86" stroke="#000" stroke-width="1.11"/><text x="95.4" y="316.0" text-anchor="end">8.80</text>
<text x="795.5" y="26.7" text-anchor="middle" style="font-size:16.67px">AGASC ID 834405664.0</text>
<text x="732" y="311.7" text-anchor="middle">60093</text>
<rect x="1361.3" y="42.5" width="117.4" height="27.1" rx="2.8" fill="#fff" fill-opacity="0.8" stroke="#ccc" stroke-opacity="0.8" stroke-width="1.2"/>
<path d="M1366 53.9H1396" stroke="#008000" stroke-width="2.08"/>
<text x="1407.2" y="58.8">mag<tspan style="font-size:9.72px;font-style:italic" dx="-0.6" dy="2.1" letter-spacing="0.2">AGASC</tspan></text>
<rect x="1348.3" y="247.3" width="130.4" height="67.0" rx="2.8" fill="#fff" fill-opacity="0.8" stroke="#ccc" stroke-opacity="0.8" stroke-width="1.2"/>
<circle cx="1367.5" cy="260.3" r="1.8" fill="#f00"/>
<text x="1392.3" y="263.7">not OK</text>
<circle cx="1367.5" cy="281.3" r="1.8" fill="#ffa500"/>
<text x="1393.0" y="284.8">Highlighted</text>
<circle cx="1367.5" cy="302.4" r="1.8" fill="#000"/>
<text x="1393.0" y="305.6">OK</text>
<g clip-path="url(#c2)">
<path d="M162.5 451.5h0M162.5 511.5h0M162.5 465.5h0M163.5 462.5h0M163.5 459.5h0M163.5 469.5h0M163.5 508.5h0M164.5 487.5h0M164.5 526.5h0M164.5 487.5h0M165.5 471.5h0M165.5 468.5h0M165.5 497.5h0M166.5 509.5h0M166.5 511.5h0M166.5 486.5h0M166.5 506.5h0M167.5 504.5h0M167.5 467.5h0M167.5 526.5h0M167.5 520.5h0M168.5 503.5h0M168.5 495.5h0M168.5 496.5h0M169.5 523.5h0M169.5 490.5h0M169.5 497.5h0M169.5 487.5h0M170.5 518.5h0M170.5 490.5h0M170.5 490.5h0M170.5 509.5h0M171.5 500.5h0M171.5 507.5h0M171.5 466.5h0M171.5 560.5h0M172.5 525.5h0M172.5 531.5h0M172.5 503.5h0M172.5 509.5h0M173.5 503.5h0M173.5 480.5h0M173.5 529.5h0M173.5 513.5h0M174.5 500.5h0M174.5 520.5h0M174.5 488.5h0M174.5 489.5h0M175.5 511.5h0M175.5 533.5h0M175.5 463.5h0M176.5 487.5h0M176.5 488.5h0M176.5 496.5h0M176.5 499.5h0M177.5 481.5h0M177.5 500.5h0M177.5 513.5h0M177.5 486.5h0M178.5 500.5h0M178.5 518.5h0M178.5 522.5h0M178.5 479.5h0M179.5 491.5h0M179.5 463.5h0M179.5 516.5h0M179.5 521.5h0M180.5 497.5h0M180.5 477.5h0M180.5 494.5h0M181.5 498.5h0M181.5 468.5h0M181.5 523.5h0M181.5 534.5h0M182.5 524.5h0M182.5 515.5h0M182.5 500.5h0M182.5 486.5h0M183.5 499.5h0M183.5 475.5h0M183.5 524.5h0M183.5 467.5h0M184.5 524.5h0M184.5 482.5h0M184.5 526.5h0M185.5 498.5h0M185.5 504.5h0M185.5 494.5h0M185.5 489.5h0M185.5 509.5h0M186.5 506.5h0M186.5 499.5h0M186.5 531.5h0M187.5 519.5h0M187.5 538.5h0M187.5 504.5h0M188.5 488.5h0M188.5 522.5h0M188.5 519.5h0M188.5 484.5h0M189.5 515.5h0M189.5 539.5h0M189.5 527.5h0M189.5 528.5h0M190.5 528.5h0M190.5 493.5h0M190.5 506.5h0M191.5 539.5h0M191.5 520.5h0M191.5 533.5h0M191.5 535.5h0M192.5 542.5h0M192.5 474.5h0M192.5 518.5h0M192.5 500.5h0M193.5 494.5h0M193.5 521.5h0M193.5 502.5h0M193.5 502.5h0M194.5 510.5h0M194.5 469.5h0M194.5 509.5h0M194.5 520.5h0M195.5 502.5h0M195.5 478.5h0M195.5 495.5h0M196.5 526.5h0M196.5 534.5h0M196.5 535.5h0M196.5 529.5h0M197.5 507.5h0M197.5 498.5h0M197.5 563.5h0M197.5 516.5h0M198.5 538.5h0M198.5 501.5h0M198.5 496.5h0M198.5 531.5h0M199.5 524.5h0M199.5 535.5h0M199.5 506.5h0M200.5 548.5h0M200.5 538.5h0M200.5 529.5h0M200.5 489.5h0M200.5 464.5h0M201.5 515.5h0M201.5 541.5h0M201.5 514.5h0M202.5 534.5h0M202.5 507.5h0M202.5 540.5h0M202.5 525.5h0M203.5 518.5h0M203.5 507.5h0M203.5 520.5h0M203.5 493.5h0M204.5 518.5h0M204.5 559.5h0M204.5 502.5h0M205.5 528.5h0M205.5 537.5h0M205.5 491.5h0M205.5 544.5h0M206.5 523.5h0M206.5 539.5h0M206.5 496.5h0M206.5 533.5h0M207.5 521.5h0M207.5 555.5h0M207.5 496.5h0M207.5 549.5h0M208.5 507.5h0M208.5 503.5h0M208.5 500.5h0M208.5 488.5h0M209.5 551.5h0M209.5 517.5h0M209.5 523.5h0M209.5 516.5h0M210.5 502.5h0M210.5 522.5h0M210.5 541.5h0M211.5 526.5h0M211.5 491.5h0M211.5 547.5h0M211.5 521.5h0M212.5 542.5h0M212.5 498.5h0M212.5 556.5h0M212.5 528.5h0M213.5 523.5h0M213.5 518.5h0M213.5 470.5h0M213.5 487.5h0M214.5 541.5h0M214.5 474.5h0M214.5 544.5h0M214.5 559.5h0M215.5 551.5h0M215.5 515.5h0M215.5 508.5h0M216.5 566.5h0M216.5 511.5h0M216.5 526.5h0M216.5 506.5h0M217.5 529.5h0M217.5 502.5h0M217.5 510.5h0M217.5 546.5h0M218.5 492.5h0M218.5 518.5h0M218.5 507.5h0M218.5 496.5h0M219.5 544.5h0M219.5 525.5h0M219.5 541.5h0M219.5 544.5h0M220.5 518.5h0M220.5 517.5h0M220.5 496.5h0M221.5 495.5h0M221.5 525.5h0M221.5 542.5h0M222.5 479.5h0M222.5 526.5h0M222.5 543.5h0M222.5 532.5h0M223.5 517.5h0M223.5 499.5h0M223.5 502.5h0M223.5 513.5h0M224.5 527.5h0M224.5 518.5h0M224.5 527.5h0M225.5 519.5h0M225.5 522.5h0M225.5 509.5h0M225.5 559.5h0M226.5 527.5h0M226.5 526.5h0M226.5 543.5h0M226.5 523.5h0M227.5 541.5h0M227.5 533.5h0M227.5 525.5h0M227.5 525.5h0M228.5 532.5h0M228.5 497.5h0M228.5 516.5h0M228.5 514.5h0M229.5 516.5h0M229.5 535.5h0M229.5 540.5h0M229.5 505.5h0M230.5 530.5h0M230.5 561.5h0M230.5 570.5h0M231.5 520.5h0M231.5 540.5h0M231.5 527.5h0M231.5 537.5h0M232.5 535.5h0M232.5 531.5h0M232.5 553.5h0M232.5 528.5h0M233.5 507.5h0M233.5 514.5h0M233.5 565.5h0M233.5 557.5h0M234.5 557.5h0M234.5 534.5h0M234.5 511.5h0M247.5 515.5h0M248.5 509.5h0M248.5 534.5h0M248.5 493.5h0M249.5 499.5h0M249.5 526.5h0M249.5 581.5h0M249.5 525.5h0M250.5 468.5h0M250.5 527.5h0M250.5 547.5h0M250.5 490.5h0M251.5 538.5h0M251.5 515.5h0M251.5 509.5h0M251.5 556.5h0M252.5 522.5h0M252.5 500.5h0M252.5 532.5h0M252.5 511.5h0M253.5 525.5h0M253.5 502.5h0M253.5 485.5h0M254.5 547.5h0M254.5 530.5h0M254.5 515.5h0M254.5 536.5h0M255.5 540.5h0M255.5 530.5h0M255.5 528.5h0M255.5 536.5h0M256.5 515.5h0M256.5 505.5h0M256.5 506.5h0M256.5 507.5h0M257.5 497.5h0M257.5 550.5h0M257.5 524.5h0M258.5 517.5h0M258.5 510.5h0M258.5 555.5h0M258.5 482.5h0M259.5 540.5h0M259.5 516.5h0M259.5 506.5h0M259.5 498.5h0M260.5 536.5h0M260.5 533.5h0M260.5 513.5h0M260.5 509.5h0M261.5 502.5h0M261.5 523.5h0M261.5 536.5h0M261.5 550.5h0M262.5 485.5h0M262.5 551.5h0M262.5 508.5h0M263.5 517.5h0M263.5 507.5h0M263.5 503.5h0M263.5 495.5h0M264.5 525.5h0M264.5 515.5h0M264.5 565.5h0M264.5 523.5h0M265.5 543.5h0M265.5 528.5h0M265.5 499.5h0M265.5 522.5h0M266.5 502.5h0M266.5 529.5h0M266.5 517.5h0M267.5 534.5h0M267.5 579.5h0M267.5 541.5h0M267.5 531.5h0M268.5 523.5h0M268.5 526.5h0M268.5 529.5h0M268.5 506.5h0M269.5 513.5h0M269.5 534.5h0M269.5 508.5h0M269.5 568.5h0M270.5 532.5h0M270.5 529.5h0M270.5 499.5h0M270.5 537.5h0M271.5 557.5h0M271.5 522.5h0M271.5 490.5h0M272.5 530.5h0M272.5 527.5h0M272.5 529.5h0M272.5 524.5h0M272.5 497.5h0M273.5 483.5h0M273.5 514.5h0M273.5 526.5h0M274.5 485.5h0M274.5 521.5h0M274.5 522.5h0M274.5 530.5h0M275.5 529.5h0M275.5 517.5h0M275.5 528.5h0M275.5 513.5h0M276.5 520.5h0M276.5 510.5h0M276.5 529.5h0M276.5 525.5h0M277.5 516.5h0M277.5 519.5h0M277.5 518.5h0M277.5 496.5h0M278.5 543.5h0M278.5 561.5h0M278.5 505.5h0M279.5 525.5h0M279.5 491.5h0M279.5 522.5h0M279.5 544.5h0M280.5 474.5h0M280.5 511.5h0M280.5 529.5h0M280.5 535.5h0M281.5 508.5h0M281.5 534.5h0M281.5 512.5h0M281.5 495.5h0M282.5 549.5h0M282.5 527.5h0M282.5 510.5h0M283.5 485.5h0M283.5 501.5h0M283.5 530.5h0M283.5 490.5h0M284.5 528.5h0M284.5 524.5h0M284.5 513.5h0M284.5 544.5h0M285.5 496.5h0M285.5 517.5h0M285.5 534.5h0M286.5 546.5h0M286.5 514.5h0M286.5 507.5h0M292.5 485.5h0M292.5 487.5h0M293.5 517.5h0M293.5 461.5h0M293.5 510.5h0M293.5 553.5h0M294.5 562.5h0M294.5 513.5h0M294.5 495.5h0M294.5 512.5h0M295.5 477.5h0M295.5 520.5h0M295.5 503.5h0M295.5 499.5h0M296.5 537.5h0M296.5 509.5h0M296.5 508.5h0M296.5 493.5h0M297.5 490.5h0M297.5 495.5h0M297.5 532.5h0M298.5 501.5h0M298.5 494.5h0M298.5 516.5h0M298.5 501.5h0M299.5 501.5h0M299.5 493.5h0M299.5 516.5h0M299.5 508.5h0M300.5 514.5h0M300.5 517.5h0M300.5 531.5h0M300.5 525.5h0M301.5 542.5h0M301.5 522.5h0M301.5 504.5h0M301.5 505.5h0M302.5 503.5h0M302.5 521.5h0M302.5 489.5h0M302.5 528.5h0M303.5 502.5h0M303.5 509.5h0M303.5 534.5h0M304.5 533.5h0M304.5 502.5h0M304.5 517.5h0M304.5 512.5h0M305.5 505.5h0M305.5 514.5h0M305.5 501.5h0M306.5 529.5h0M306.5 520.5h0M306.5 507.5h0M307.5 533.5h0M307.5 516.5h0M307.5 519.5h0M307.5 513.5h0M308.5 552.5h0M308.5 478.5h0M308.5 516.5h0M308.5 503.5h0M309.5 536.5h0M309.5 542.5h0M309.5 513.5h0M309.5 521.5h0M310.5 500.5h0M310.5 533.5h0M310.5 534.5h0M310.5 506.5h0M311.5 499.5h0M311.5 494.5h0M311.5 514.5h0M311.5 508.5h0M312.5 530.5h0M312.5 486.5h0M312.5 489.5h0M312.5 490.5h0M313.5 547.5h0M313.5 495.5h0M313.5 529.5h0M314.5 503.5h0M314.5 505.5h0M314.5 488.5h0M314.5 518.5h0M315.5 521.5h0M315.5 535.5h0M315.5 539.5h0M315.5 503.5h0M316.5 534.5h0M316.5 501.5h0M316.5 523.5h0M316.5 527.5h0M317.5 496.5h0M317.5 498.5h0M317.5 537.5h0M317.5 520.5h0M318.5 517.5h0M318.5 503.5h0M318.5 533.5h0M319.5 526.5h0M319.5 520.5h0M319.5 503.5h0M319.5 499.5h0M320.5 530.5h0M320.5 482.5h0M320.5 510.5h0M320.5 536.5h0M321.5 552.5h0M321.5 530.5h0M321.5 569.5h0M321.5 516.5h0M322.5 508.5h0M322.5 493.5h0M322.5 509.5h0M323.5 556.5h0M323.5 526.5h0M323.5 506.5h0M323.5 566.5h0M324.5 537.5h0M324.5 507.5h0M324.5 519.5h0M324.5 562.5h0M325.5 531.5h0M325.5 520.5h0M325.5 477.5h0M325.5 529.5h0M326.5 539.5h0M326.5 515.5h0M326.5 513.5h0M326.5 508.5h0M327.5 489.5h0M327.5 521.5h0M327.5 548.5h0M328.5 518.5h0M328.5 519.5h0M328.5 499.5h0M328.5 501.5h0M328.5 534.5h0M329.5 502.5h0M329.5 497.5h0M329.5 522.5h0M330.5 498.5h0M330.5 514.5h0M330.5 514.5h0M330.5 521.5h0M331.5 501.5h0M331.5 512.5h0M331.5 542.5h0M332.5 522.5h0M332.5 529.5h0M332.5 510.5h0M332.5 520.5h0M333.5 464.5h0M333.5 501.5h0M333.5 478.5h0M333.5 532.5h0M334.5 521.5h0M334.5 474.5h0M334.5 552.5h0M335.5 514.5h0M335.5 550.5h0M335.5 485.5h0M335.5 547.5h0M336.5 524.5h0M336.5 522.5h0M336.5 553.5h0M336.5 466.5h0M337.5 522.5h0M337.5 484.5h0M337.5 534.5h0M337.5 550.5h0M338.5 515.5h0M338.5 516.5h0M338.5 543.5h0M339.5 554.5h0M339.5 536.5h0M339.5 515.5h0M340.5 510.5h0M340.5 538.5h0M340.5 530.5h0M340.5 511.5h0M341.5 500.5h0M341.5 536.5h0M341.5 521.5h0M341.5 582.5h0M342.5 545.5h0M342.5 516.5h0M342.5 526.5h0M342.5 530.5h0M343.5 492.5h0M343.5 532.5h0M343.5 550.5h0M343.5 522.5h0M344.5 523.5h0M344.5 551.5h0M344.5 507.5h0M344.5 492.5h0M345.5 540.5h0M345.5 546.5h0M345.5 530.5h0M346.5 502.5h0M346.5 540.5h0M346.5 544.5h0M346.5 541.5h0M347.5 523.5h0M347.5 524.5h0M347.5 532.5h0M347.5 503.5h0M348.5 481.5h0M348.5 540.5h0M348.5 506.5h0M349.5 522.5h0M349.5 465.5h0M349.5 546.5h0M349.5 535.5h0M349.5 525.5h0M350.5 557.5h0M350.5 531.5h0M350.5 512.5h0M351.5 557.5h0M351.5 524.5h0M351.5 489.5h0M351.5 539.5h0M352.5 545.5h0M352.5 579.5h0M352.5 528.5h0M352.5 559.5h0M353.5 513.5h0M353.5 490.5h0M353.5 513.5h0M353.5 541.5h0M354.5 511.5h0M354.5 534.5h0M354.5 548.5h0M355.5 534.5h0M355.5 519.5h0M355.5 531.5h0M355.5 513.5h0M356.5 478.5h0M356.5 511.5h0M356.5 508.5h0M356.5 537.5h0M357.5 495.5h0M357.5 516.5h0M357.5 502.5h0M357.5 540.5h0M358.5 519.5h0M358.5 573.5h0M358.5 531.5h0M362.5 539.5h0M362.5 566.5h0M363.5 488.5h0M363.5 485.5h0M363.5 509.5h0M364.5 504.5h0M364.5 505.5h0M364.5 515.5h0M364.5 498.5h0M365.5 535.5h0M365.5 523.5h0M365.5 517.5h0M365.5 551.5h0M366.5 536.5h0M366.5 506.5h0M366.5 509.5h0M366.5 568.5h0M367.5 498.5h0M367.5 510.5h0M367.5 502.5h0M368.5 520.5h0M368.5 506.5h0M368.5 546.5h0M368.5 524.5h0M368.5 542.5h0M369.5 531.5h0M369.5 496.5h0M369.5 486.5h0M370.5 520.5h0M370.5 530.5h0M370.5 505.5h0M370.5 512.5h0M371.5 481.5h0M371.5 508.5h0M371.5 571.5h0M371.5 520.5h0M372.5 528.5h0M372.5 539.5h0M372.5 519.5h0M372.5 520.5h0M373.5 529.5h0M373.5 490.5h0M373.5 513.5h0M374.5 512.5h0M374.5 517.5h0M374.5 495.5h0M374.5 544.5h0M375.5 495.5h0M375.5 525.5h0M375.5 488.5h0M375.5 489.5h0M376.5 508.5h0M376.5 528.5h0M376.5 512.5h0M376.5 510.5h0M377.5 547.5h0M377.5 523.5h0M377.5 531.5h0M378.5 487.5h0M378.5 479.5h0M378.5 530.5h0M378.5 525.5h0M378.5 542.5h0M379.5 508.5h0M379.5 496.5h0M379.5 475.5h0M380.5 539.5h0M380.5 492.5h0M380.5 515.5h0M380.5 526.5h0M381.5 518.5h0M381.5 526.5h0M381.5 501.5h0M381.5 510.5h0M382.5 485.5h0M382.5 520.5h0M382.5 548.5h0M382.5 530.5h0M383.5 502.5h0M383.5 540.5h0M383.5 524.5h0M384.5 497.5h0M384.5 537.5h0M384.5 491.5h0M384.5 501.5h0M385.5 521.5h0M385.5 510.5h0M385.5 519.5h0M385.5 517.5h0M386.5 516.5h0M386.5 509.5h0M386.5 511.5h0M386.5 525.5h0M387.5 531.5h0M387.5 467.5h0M387.5 534.5h0M387.5 514.5h0M388.5 486.5h0M388.5 491.5h0M388.5 527.5h0M388.5 471.5h0M389.5 476.5h0M389.5 520.5h0M389.5 540.5h0M390.5 501.5h0M390.5 519.5h0M390.5 521.5h0M390.5 533.5h0M391.5 529.5h0M391.5 513.5h0M391.5 498.5h0M391.5 561.5h0M392.5 568.5h0M392.5 499.5h0M392.5 537.5h0M392.5 505.5h0M393.5 518.5h0M393.5 495.5h0M393.5 502.5h0M394.5 527.5h0M394.5 525.5h0M394.5 516.5h0M394.5 507.5h0M395.5 536.5h0M395.5 555.5h0M395.5 521.5h0M395.5 525.5h0M396.5 527.5h0M396.5 545.5h0M396.5 512.5h0M396.5 561.5h0M397.5 535.5h0M397.5 498.5h0M397.5 548.5h0M397.5 516.5h0M398.5 515.5h0M398.5 516.5h0M398.5 560.5h0M399.5 504.5h0M399.5 522.5h0M399.5 514.5h0M399.5 518.5h0M400.5 523.5h0M400.5 499.5h0M400.5 494.5h0M400.5 563.5h0M401.5 540.5h0M401.5 527.5h0M401.5 569.5h0M401.5 493.5h0M402.5 540.5h0M402.5 511.5h0M402.5 519.5h0M414.5 503.5h0M414.5 517.5h0M415.5 513.5h0M415.5 508.5h0M415.5 521.5h0M415.5 517.5h0M416.5 504.5h0M416.5 499.5h0M416.5 496.5h0M417.5 518.5h0M417.5 498.5h0M417.5 490.5h0M417.5 543.5h0M418.5 522.5h0M418.5 514.5h0M418.5 513.5h0M418.5 476.5h0M419.5 489.5h0M419.5 516.5h0M419.5 516.5h0M419.5 543.5h0M420.5 535.5h0M420.5 486.5h0M420.5 551.5h0M420.5 501.5h0M421.5 530.5h0M421.5 522.5h0M421.5 518.5h0M422.5 478.5h0M422.5 509.5h0M422.5 506.5h0M422.5 496.5h0M423.5 564.5h0M423.5 479.5h0M423.5 554.5h0M423.5 534.5h0M424.5 505.5h0M424.5 545.5h0M424.5 557.5h0M424.5 496.5h0M425.5 527.5h0M425.5 501.5h0M425.5 511.5h0M426.5 526.5h0M426.5 486.5h0M426.5 528.5h0M426.5 480.5h0M427.5 541.5h0M427.5 544.5h0M427.5 537.5h0M427.5 518.5h0M428.5 547.5h0M428.5 538.5h0M428.5 493.5h0M428.5 519.5h0M429.5 498.5h0M429.5 515.5h0M429.5 535.5h0M429.5 538.5h0M430.5 518.5h0M430.5 520.5h0M430.5 532.5h0M430.5 533.5h0M431.5 490.5h0M431.5 499.5h0M431.5 514.5h0M432.5 527.5h0M432.5 528.5h0M432.5 477.5h0M432.5 532.5h0M433.5 470.5h0M433.5 532.5h0M433.5 549.5h0M433.5 476.5h0M434.5 520.5h0M434.5 485.5h0M434.5 508.5h0M434.5 522.5h0M435.5 497.5h0M435.5 523.5h0M435.5 508.5h0M435.5 520.5h0M436.5 554.5h0M436.5 508.5h0M436.5 528.5h0M437.5 520.5h0M437.5 508.5h0M437.5 547.5h0M437.5 506.5h0M438.5 505.5h0M438.5 477.5h0M438.5 501.5h0M438.5 511.5h0M439.5 532.5h0M439.5 519.5h0M439.5 549.5h0M439.5 511.5h0M440.5 524.5h0M440.5 528.5h0M440.5 520.5h0M440.5 511.5h0M441.5 516.5h0M441.5 546.5h0M441.5 494.5h0M442.5 522.5h0M442.5 516.5h0M442.5 523.5h0M442.5 543.5h0M442.5 518.5h0M443.5 532.5h0M443.5 541.5h0M443.5 521.5h0M444.5 508.5h0M444.5 511.5h0M444.5 520.5h0M444.5 537.5h0M445.5 531.5h0M445.5 527.5h0M445.5 554.5h0M445.5 507.5h0M446.5 522.5h0M446.5 550.5h0M446.5 492.5h0M446.5 483.5h0M447.5 550.5h0M447.5 526.5h0M447.5 540.5h0M448.5 506.5h0M448.5 550.5h0M448.5 511.5h0M448.5 513.5h0M449.5 498.5h0M449.5 560.5h0M449.5 536.5h0M449.5 524.5h0M450.5 500.5h0M450.5 517.5h0M450.5 503.5h0M450.5 509.5h0M451.5 537.5h0M451.5 521.5h0M451.5 526.5h0M451.5 524.5h0M452.5 537.5h0M452.5 502.5h0M452.5 511.5h0M453.5 557.5h0M453.5 502.5h0M453.5 529.5h0M453.5 548.5h0M453.5 492.5h0M454.5 518.5h0M454.5 511.5h0M454.5 521.5h0M455.5 519.5h0M455.5 556.5h0M455.5 503.5h0M455.5 535.5h0M456.5 519.5h0M456.5 522.5h0M456.5 540.5h0M456.5 547.5h0M457.5 524.5h0M457.5 495.5h0M457.5 536.5h0M457.5 535.5h0M458.5 521.5h0M458.5 535.5h0M458.5 496.5h0M458.5 514.5h0M459.5 472.5h0M459.5 520.5h0M459.5 478.5h0M460.5 537.5h0M460.5 521.5h0M460.5 548.5h0M460.5 534.5h0M461.5 532.5h0M461.5 513.5h0M461.5 498.5h0M461.5 531.5h0M462.5 556.5h0M462.5 526.5h0M462.5 529.5h0M462.5 536.5h0M463.5 508.5h0M463.5 502.5h0M463.5 540.5h0M463.5 540.5h0M464.5 579.5h0M464.5 538.5h0M464.5 507.5h0M465.5 543.5h0M465.5 505.5h0M465.5 509.5h0M465.5 510.5h0M466.5 509.5h0M466.5 524.5h0M466.5 500.5h0M466.5 499.5h0M467.5 514.5h0M467.5 521.5h0M467.5 493.5h0M467.5 488.5h0M468.5 533.5h0M468.5 502.5h0M468.5 518.5h0M469.5 470.5h0M469.5 525.5h0M469.5 531.5h0M469.5 537.5h0M469.5 499.5h0M470.5 540.5h0M470.5 504.5h0M470.5 528.5h0M471.5 490.5h0M471.5 485.5h0M471.5 494.5h0M471.5 559.5h0M472.5 548.5h0M472.5 575.5h0M472.5 463.5h0M472.5 531.5h0M473.5 527.5h0M473.5 518.5h0M473.5 507.5h0M473.5 527.5h0M474.5 519.5h0M474.5 521.5h0M474.5 548.5h0M474.5 483.5h0M475.5 485.5h0M475.5 521.5h0M475.5 525.5h0M476.5 483.5h0M476.5 471.5h0M476.5 522.5h0M476.5 510.5h0M477.5 532.5h0M477.5 516.5h0M477.5 577.5h0M477.5 571.5h0M478.5 514.5h0M478.5 528.5h0M478.5 516.5h0M478.5 522.5h0M479.5 511.5h0M479.5 518.5h0M479.5 527.5h0M480.5 515.5h0M480.5 537.5h0M480.5 494.5h0M480.5 543.5h0M480.5 531.5h0M481.5 504.5h0M481.5 530.5h0M481.5 502.5h0M482.5 491.5h0M482.5 505.5h0M482.5 530.5h0M482.5 481.5h0M483.5 511.5h0M483.5 540.5h0M483.5 477.5h0M483.5 515.5h0M484.5 506.5h0M484.5 500.5h0M484.5 529.5h0M485.5 499.5h0M485.5 544.5h0M485.5 538.5h0M485.5 525.5h0M486.5 471.5h0M486.5 504.5h0M486.5 492.5h0M486.5 526.5h0M487.5 505.5h0M487.5 561.5h0M487.5 522.5h0M487.5 507.5h0M488.5 528.5h0M488.5 558.5h0M488.5 551.5h0M488.5 503.5h0M489.5 489.5h0M489.5 525.5h0M489.5 484.5h0M489.5 545.5h0M490.5 505.5h0M490.5 512.5h0M490.5 497.5h0M490.5 551.5h0M491.5 499.5h0M491.5 518.5h0M491.5 539.5h0M492.5 531.5h0M492.5 526.5h0M492.5 516.5h0M492.5 540.5h0M493.5 541.5h0M493.5 521.5h0M493.5 524.5h0M493.5 514.5h0M494.5 505.5h0M494.5 564.5h0M494.5 527.5h0M494.5 521.5h0M495.5 525.5h0M495.5 549.5h0M495.5 511.5h0M495.5 490.5h0M496.5 530.5h0M496.5 543.5h0M496.5 510.5h0M496.5 526.5h0M497.5 524.5h0M497.5 522.5h0M497.5 536.5h0M498.5 527.5h0M498.5 541.5h0M498.5 567.5h0M498.5 504.5h0M499.5 519.5h0M499.5 527.5h0M499.5 497.5h0M499.5 528.5h0M500.5 501.5h0M500.5 507.5h0M500.5 531.5h0M500.5 551.5h0M501.5 515.5h0M501.5 520.5h0M501.5 504.5h0M501.5 558.5h0M502.5 528.5h0M502.5 521.5h0M502.5 519.5h0M503.5 524.5h0M503.5 520.5h0M503.5 576.5h0M503.5 534.5h0M504.5 542.5h0M504.5 560.5h0M504.5 526.5h0M504.5 537.5h0M505.5 554.5h0M505.5 559.5h0M505.5 523.5h0M505.5 584.5h0M506.5 533.5h0M506.5 555.5h0M506.5 529.5h0M506.5 491.5h0M507.5 510.5h0M507.5 533.5h0M507.5 500.5h0M507.5 493.5h0M508.5 512.5h0M508.5 494.5h0M508.5 529.5h0M509.5 520.5h0M509.5 536.5h0M509.5 542.5h0M509.5 534.5h0M510.5 551.5h0M510.5 537.5h0M510.5 489.5h0M510.5 521.5h0M511.5 540.5h0M511.5 500.5h0M511.5 506.5h0M511.5 559.5h0M512.5 552.5h0M512.5 500.5h0M512.5 535.5h0M512.5 533.5h0M513.5 549.5h0M513.5 561.5h0M513.5 513.5h0M514.5 554.5h0M514.5 526.5h0M514.5 498.5h0M514.5 526.5h0M515.5 541.5h0M515.5 523.5h0M515.5 525.5h0M515.5 546.5h0M516.5 530.5h0M516.5 561.5h0M516.5 573.5h0M516.5 547.5h0M517.5 572.5h0M517.5 548.5h0M517.5 537.5h0M518.5 530.5h0M518.5 494.5h0M518.5 553.5h0M518.5 543.5h0M519.5 543.5h0M519.5 554.5h0M519.5 489.5h0M519.5 549.5h0M520.5 537.5h0M520.5 534.5h0M520.5 478.5h0M520.5 535.5h0M521.5 544.5h0M521.5 500.5h0M521.5 540.5h0M521.5 570.5h0M522.5 500.5h0M522.5 503.5h0M522.5 553.5h0M536.5 549.5h0M536.5 546.5h0M536.5 507.5h0M536.5 534.5h0M537.5 532.5h0M537.5 515.5h0M537.5 548.5h0M537.5 490.5h0M538.5 548.5h0M538.5 540.5h0M538.5 485.5h0M538.5 568.5h0M539.5 494.5h0M539.5 524.5h0M539.5 521.5h0M540.5 555.5h0M540.5 529.5h0M540.5 559.5h0M540.5 512.5h0M540.5 538.5h0M541.5 547.5h0M541.5 544.5h0M541.5 537.5h0M542.5 513.5h0M542.5 526.5h0M542.5 550.5h0M542.5 552.5h0M543.5 556.5h0M543.5 517.5h0M543.5 524.5h0M543.5 557.5h0M544.5 568.5h0M544.5 535.5h0M544.5 546.5h0M544.5 523.5h0M545.5 537.5h0M545.5 526.5h0M545.5 517.5h0M545.5 512.5h0M546.5 539.5h0M546.5 519.5h0M546.5 546.5h0M547.5 559.5h0M547.5 529.5h0M547.5 508.5h0M547.5 504.5h0M548.5 535.5h0M548.5 570.5h0M548.5 527.5h0M548.5 538.5h0M549.5 520.5h0M549.5 510.5h0M549.5 542.5h0M549.5 548.5h0M550.5 541.5h0M550.5 547.5h0M550.5 554.5h0M551.5 528.5h0M551.5 548.5h0M551.5 538.5h0M551.5 540.5h0M551.5 545.5h0M552.5 520.5h0M552.5 542.5h0M552.5 534.5h0M553.5 516.5h0M553.5 535.5h0M553.5 563.5h0M553.5 542.5h0M554.5 542.5h0M554.5 519.5h0M554.5 497.5h0M554.5 528.5h0M555.5 534.5h0M555.5 500.5h0M555.5 544.5h0M555.5 522.5h0M556.5 518.5h0M556.5 528.5h0M556.5 529.5h0M556.5 521.5h0M557.5 492.5h0M557.5 511.5h0M557.5 534.5h0M558.5 515.5h0M558.5 500.5h0M558.5 482.5h0M558.5 501.5h0M559.5 513.5h0M559.5 487.5h0M559.5 497.5h0M559.5 511.5h0M560.5 528.5h0M560.5 512.5h0M560.5 495.5h0M561.5 537.5h0M561.5 548.5h0M561.5 504.5h0M561.5 547.5h0M562.5 542.5h0M562.5 519.5h0M562.5 520.5h0M562.5 514.5h0M563.5 512.5h0M563.5 505.5h0M563.5 518.5h0M563.5 533.5h0M564.5 575.5h0M564.5 490.5h0M564.5 500.5h0M564.5 504.5h0M565.5 517.5h0M565.5 535.5h0M565.5 507.5h0M565.5 518.5h0M566.5 545.5h0M566.5 496.5h0M566.5 547.5h0M567.5 526.5h0M567.5 481.5h0M567.5 534.5h0M567.5 514.5h0M568.5 495.5h0M568.5 517.5h0M568.5 547.5h0M568.5 528.5h0M569.5 518.5h0M569.5 549.5h0M569.5 487.5h0M569.5 511.5h0M570.5 502.5h0M570.5 512.5h0M570.5 509.5h0M570.5 524.5h0M571.5 548.5h0M571.5 503.5h0M571.5 516.5h0M572.5 484.5h0M572.5 541.5h0M572.5 513.5h0M572.5 471.5h0M573.5 544.5h0M573.5 541.5h0M573.5 511.5h0M573.5 480.5h0M574.5 540.5h0M574.5 514.5h0M574.5 519.5h0M574.5 527.5h0M575.5 520.5h0M575.5 489.5h0M575.5 512.5h0M575.5 542.5h0M576.5 527.5h0M576.5 512.5h0M576.5 543.5h0M577.5 528.5h0M577.5 522.5h0M579.5 520.5h0M579.5 503.5h0M579.5 513.5h0M579.5 524.5h0M580.5 541.5h0M580.5 516.5h0M580.5 581.5h0M580.5 513.5h0M581.5 537.5h0M581.5 508.5h0M581.5 523.5h0M581.5 494.5h0M582.5 536.5h0M582.5 563.5h0M582.5 522.5h0M582.5 533.5h0M583.5 525.5h0M583.5 499.5h0M583.5 542.5h0M584.5 510.5h0M584.5 505.5h0M584.5 502.5h0M584.5 565.5h0M585.5 521.5h0M585.5 538.5h0M585.5 529.5h0M585.5 541.5h0M586.5 531.5h0M586.5 504.5h0M586.5 488.5h0M586.5 509.5h0M587.5 549.5h0M587.5 498.5h0M587.5 549.5h0M587.5 531.5h0M588.5 500.5h0M588.5 535.5h0M588.5 508.5h0M589.5 528.5h0M589.5 546.5h0M589.5 518.5h0M589.5 533.5h0M590.5 485.5h0M590.5 483.5h0M590.5 489.5h0M590.5 542.5h0M591.5 481.5h0M591.5 514.5h0M591.5 509.5h0M591.5 516.5h0M592.5 531.5h0M592.5 517.5h0M592.5 501.5h0M592.5 487.5h0M593.5 507.5h0M593.5 518.5h0M593.5 528.5h0M593.5 525.5h0M594.5 484.5h0M594.5 504.5h0M594.5 513.5h0M595.5 552.5h0M595.5 554.5h0M595.5 504.5h0M595.5 505.5h0M596.5 495.5h0M596.5 514.5h0M596.5 531.5h0M596.5 553.5h0M597.5 537.5h0M597.5 566.5h0M597.5 512.5h0M597.5 509.5h0M598.5 490.5h0M598.5 557.5h0M598.5 548.5h0M599.5 507.5h0M599.5 513.5h0M599.5 561.5h0M599.5 535.5h0M600.5 518.5h0M600.5 529.5h0M600.5 513.5h0M600.5 520.5h0M601.5 533.5h0M601.5 513.5h0M601.5 523.5h0M601.5 497.5h0M602.5 552.5h0M602.5 527.5h0M602.5 536.5h0M603.5 527.5h0M603.5 514.5h0M603.5 509.5h0M603.5 567.5h0M603.5 498.5h0M604.5 511.5h0M604.5 511.5h0M604.5 521.5h0M604.5 502.5h0M605.5 514.5h0M605.5 560.5h0M605.5 536.5h0M606.5 527.5h0M606.5 529.5h0M606.5 531.5h0M606.5 509.5h0M607.5 545.5h0M607.5 537.5h0M607.5 542.5h0M607.5 521.5h0M608.5 511.5h0M608.5 539.5h0M608.5 512.5h0M608.5 532.5h0M609.5 490.5h0M609.5 567.5h0M609.5 520.5h0M610.5 495.5h0M610.5 527.5h0M610.5 542.5h0M610.5 537.5h0M611.5 507.5h0M611.5 530.5h0M611.5 497.5h0M611.5 518.5h0M612.5 530.5h0M612.5 528.5h0M612.5 509.5h0M613.5 497.5h0M613.5 535.5h0M613.5 543.5h0M613.5 543.5h0M614.5 509.5h0M614.5 481.5h0M614.5 530.5h0M614.5 505.5h0M615.5 527.5h0M615.5 500.5h0M615.5 550.5h0M615.5 507.5h0M616.5 547.5h0M616.5 538.5h0M616.5 513.5h0M616.5 525.5h0M617.5 522.5h0M617.5 510.5h0M617.5 517.5h0M617.5 490.5h0M618.5 506.5h0M618.5 540.5h0M618.5 523.5h0M618.5 534.5h0M619.5 531.5h0M619.5 485.5h0M619.5 539.5h0M620.5 496.5h0M620.5 491.5h0M620.5 465.5h0M620.5 523.5h0M621.5 518.5h0M621.5 517.5h0M621.5 531.5h0M621.5 486.5h0M622.5 482.5h0M622.5 571.5h0M622.5 530.5h0M622.5 498.5h0M623.5 544.5h0M623.5 537.5h0M623.5 522.5h0M623.5 523.5h0M624.5 526.5h0M624.5 525.5h0M624.5 484.5h0M625.5 571.5h0M625.5 532.5h0M625.5 545.5h0M625.5 516.5h0M626.5 530.5h0M626.5 510.5h0M626.5 520.5h0M626.5 472.5h0M627.5 548.5h0M627.5 530.5h0M627.5 501.5h0M627.5 527.5h0M628.5 516.5h0M628.5 551.5h0M628.5 504.5h0M628.5 521.5h0M629.5 507.5h0M629.5 538.5h0M629.5 530.5h0M630.5 537.5h0M630.5 483.5h0M630.5 555.5h0M630.5 509.5h0M631.5 513.5h0M631.5 491.5h0M631.5 512.5h0M631.5 540.5h0M632.5 508.5h0M632.5 555.5h0M632.5 496.5h0M632.5 521.5h0M633.5 535.5h0M633.5 530.5h0M633.5 507.5h0M633.5 555.5h0M634.5 483.5h0M634.5 535.5h0M634.5 488.5h0M635.5 516.5h0M635.5 479.5h0M635.5 546.5h0M635.5 502.5h0M636.5 522.5h0M636.5 534.5h0M636.5 503.5h0M636.5 526.5h0M637.5 537.5h0M637.5 526.5h0M637.5 538.5h0M637.5 526.5h0M638.5 523.5h0M638.5 499.5h0M638.5 524.5h0M639.5 538.5h0M639.5 506.5h0M639.5 530.5h0M639.5 543.5h0M640.5 548.5h0M640.5 484.5h0M640.5 524.5h0M640.5 487.5h0M641.5 542.5h0M641.5 544.5h0M641.5 485.5h0M641.5 527.5h0M642.5 525.5h0M642.5 526.5h0M642.5 543.5h0M642.5 499.5h0M643.5 546.5h0M643.5 504.5h0M643.5 543.5h0M643.5 464.5h0M644.5 504.5h0M644.5 495.5h0M644.5 555.5h0M644.5 511.5h0M645.5 532.5h0M652.5 519.5h0M653.5 553.5h0M653.5 506.5h0M653.5 507.5h0M653.5 527.5h0M654.5 530.5h0M654.5 520.5h0M654.5 502.5h0M654.5 554.5h0M655.5 493.5h0M655.5 529.5h0M655.5 505.5h0M655.5 541.5h0M656.5 482.5h0M656.5 519.5h0M656.5 487.5h0M657.5 538.5h0M657.5 539.5h0M657.5 502.5h0M657.5 511.5h0M658.5 519.5h0M658.5 500.5h0M658.5 518.5h0M658.5 534.5h0M659.5 567.5h0M659.5 576.5h0M659.5 514.5h0M659.5 515.5h0M660.5 546.5h0M660.5 516.5h0M660.5 531.5h0M660.5 526.5h0M661.5 506.5h0M661.5 559.5h0M661.5 518.5h0M661.5 514.5h0M662.5 528.5h0M662.5 520.5h0M662.5 548.5h0M663.5 520.5h0M663.5 509.5h0M663.5 506.5h0M663.5 537.5h0M664.5 504.5h0M664.5 515.5h0M664.5 507.5h0M664.5 522.5h0M665.5 507.5h0M665.5 516.5h0M665.5 469.5h0M665.5 527.5h0M666.5 497.5h0M666.5 522.5h0M666.5 553.5h0M667.5 512.5h0M667.5 497.5h0M667.5 507.5h0M667.5 507.5h0M668.5 542.5h0M668.5 519.5h0M668.5 555.5h0M668.5 489.5h0M669.5 495.5h0M669.5 550.5h0M669.5 537.5h0M669.5 556.5h0M670.5 547.5h0M670.5 541.5h0M670.5 557.5h0M670.5 543.5h0M671.5 520.5h0M671.5 540.5h0M671.5 519.5h0M671.5 538.5h0M672.5 533.5h0M672.5 563.5h0M672.5 516.5h0M673.5 560.5h0M673.5 544.5h0M673.5 564.5h0M673.5 526.5h0M674.5 559.5h0M674.5 524.5h0M674.5 495.5h0M674.5 529.5h0M675.5 584.5h0M675.5 515.5h0M675.5 532.5h0M675.5 522.5h0M676.5 526.5h0M676.5 510.5h0M676.5 513.5h0M676.5 536.5h0M677.5 561.5h0M677.5 536.5h0M677.5 518.5h0M677.5 574.5h0M678.5 532.5h0M678.5 573.5h0M678.5 512.5h0M679.5 496.5h0M679.5 517.5h0M679.5 546.5h0M679.5 520.5h0M680.5 509.5h0M680.5 502.5h0M680.5 508.5h0M680.5 515.5h0M681.5 559.5h0M681.5 541.5h0M681.5 529.5h0M682.5 539.5h0M682.5 581.5h0M682.5 544.5h0M682.5 556.5h0M683.5 536.5h0M683.5 534.5h0M683.5 572.5h0M683.5 557.5h0M684.5 538.5h0M684.5 564.5h0M684.5 542.5h0M684.5 559.5h0M685.5 556.5h0M685.5 522.5h0M685.5 543.5h0M685.5 552.5h0M686.5 507.5h0M686.5 546.5h0M686.5 539.5h0M686.5 537.5h0M687.5 473.5h0M687.5 522.5h0M687.5 517.5h0M688.5 542.5h0M688.5 515.5h0M688.5 508.5h0M688.5 556.5h0M689.5 521.5h0M689.5 495.5h0M689.5 490.5h0M689.5 522.5h0M690.5 478.5h0M690.5 541.5h0M690.5 503.5h0M690.5 513.5h0M691.5 546.5h0M691.5 502.5h0M691.5 550.5h0M692.5 537.5h0M701.5 518.5h0M701.5 528.5h0M701.5 509.5h0M702.5 535.5h0M702.5 537.5h0M702.5 497.5h0M702.5 531.5h0M703.5 552.5h0M703.5 505.5h0M703.5 508.5h0M703.5 499.5h0M704.5 525.5h0M704.5 499.5h0M704.5 526.5h0M705.5 544.5h0M705.5 526.5h0M705.5 517.5h0M705.5 545.5h0M705.5 526.5h0M706.5 517.5h0M706.5 531.5h0M706.5 520.5h0M707.5 522.5h0M707.5 538.5h0M707.5 514.5h0M707.5 509.5h0M708.5 563.5h0M708.5 535.5h0M708.5 504.5h0M708.5 511.5h0M709.5 561.5h0M709.5 516.5h0M709.5 491.5h0M709.5 502.5h0M710.5 504.5h0M710.5 522.5h0M710.5 518.5h0M710.5 544.5h0M711.5 520.5h0M711.5 471.5h0M711.5 520.5h0M712.5 539.5h0M712.5 509.5h0M712.5 563.5h0M712.5 472.5h0M713.5 507.5h0M713.5 525.5h0M713.5 528.5h0M713.5 539.5h0M714.5 517.5h0M714.5 519.5h0M714.5 553.5h0M714.5 499.5h0M715.5 528.5h0M715.5 543.5h0M715.5 501.5h0M715.5 505.5h0M716.5 532.5h0M716.5 534.5h0M716.5 498.5h0M717.5 529.5h0M717.5 517.5h0M717.5 492.5h0M717.5 546.5h0M718.5 553.5h0M718.5 539.5h0M718.5 533.5h0M718.5 521.5h0M719.5 501.5h0M719.5 531.5h0M719.5 486.5h0M719.5 517.5h0M720.5 563.5h0M720.5 523.5h0M720.5 507.5h0M721.5 499.5h0M721.5 537.5h0M721.5 524.5h0M721.5 475.5h0M722.5 519.5h0M722.5 542.5h0M722.5 554.5h0M722.5 532.5h0M723.5 515.5h0M723.5 546.5h0M723.5 494.5h0M723.5 538.5h0M724.5 563.5h0M724.5 509.5h0M724.5 522.5h0M724.5 528.5h0M725.5 496.5h0M725.5 535.5h0M725.5 508.5h0M725.5 534.5h0M726.5 488.5h0M726.5 523.5h0M726.5 522.5h0M726.5 510.5h0M727.5 524.5h0M727.5 513.5h0M727.5 527.5h0M728.5 509.5h0M728.5 521.5h0M728.5 534.5h0M728.5 510.5h0M729.5 512.5h0M729.5 544.5h0M729.5 528.5h0M729.5 557.5h0M730.5 520.5h0M730.5 504.5h0M730.5 471.5h0M730.5 516.5h0M731.5 500.5h0M731.5 491.5h0M731.5 506.5h0M731.5 560.5h0M732.5 531.5h0M732.5 514.5h0M732.5 515.5h0M732.5 518.5h0M733.5 540.5h0M733.5 560.5h0M733.5 513.5h0M734.5 497.5h0M734.5 531.5h0M734.5 509.5h0M734.5 532.5h0M735.5 524.5h0M735.5 533.5h0M735.5 503.5h0M735.5 540.5h0M736.5 517.5h0M736.5 501.5h0M736.5 521.5h0M737.5 546.5h0M737.5 512.5h0M737.5 524.5h0M737.5 547.5h0M738.5 524.5h0M738.5 526.5h0M738.5 507.5h0M738.5 530.5h0M739.5 518.5h0M739.5 508.5h0M739.5 560.5h0M739.5 500.5h0M740.5 520.5h0M740.5 541.5h0M740.5 517.5h0M740.5 499.5h0M741.5 535.5h0M741.5 532.5h0M741.5 492.5h0M741.5 488.5h0M742.5 479.5h0M742.5 519.5h0M742.5 540.5h0M743.5 540.5h0M743.5 527.5h0M743.5 541.5h0M743.5 511.5h0M743.5 494.5h0M744.5 542.5h0M744.5 489.5h0M744.5 539.5h0M745.5 534.5h0M745.5 549.5h0M745.5 505.5h0M745.5 522.5h0M746.5 519.5h0M746.5 580.5h0M746.5 532.5h0M746.5 513.5h0M747.5 577.5h0M747.5 479.5h0M747.5 513.5h0M748.5 497.5h0M748.5 526.5h0M748.5 500.5h0M748.5 493.5h0M749.5 466.5h0M749.5 541.5h0M749.5 475.5h0M749.5 541.5h0M750.5 515.5h0M750.5 527.5h0M750.5 522.5h0M750.5 559.5h0M751.5 524.5h0M751.5 543.5h0M751.5 522.5h0M751.5 513.5h0M752.5 517.5h0M752.5 520.5h0M752.5 489.5h0M752.5 511.5h0M753.5 505.5h0M753.5 490.5h0M753.5 519.5h0M754.5 516.5h0M754.5 504.5h0M754.5 523.5h0M754.5 492.5h0M755.5 531.5h0M755.5 522.5h0M755.5 521.5h0M755.5 525.5h0M756.5 519.5h0M756.5 528.5h0M756.5 568.5h0M756.5 495.5h0M757.5 528.5h0M757.5 504.5h0M757.5 542.5h0M757.5 507.5h0M758.5 546.5h0M758.5 489.5h0M758.5 523.5h0M759.5 529.5h0M759.5 580.5h0M759.5 568.5h0M759.5 531.5h0M759.5 534.5h0M760.5 534.5h0M760.5 532.5h0M760.5 501.5h0M761.5 530.5h0M761.5 530.5h0M761.5 538.5h0M761.5 545.5h0M762.5 515.5h0M762.5 531.5h0M762.5 531.5h0M762.5 517.5h0M763.5 522.5h0M763.5 506.5h0M763.5 507.5h0M763.5 550.5h0M764.5 540.5h0M764.5 503.5h0M764.5 531.5h0M764.5 510.5h0M765.5 542.5h0M765.5 574.5h0M765.5 569.5h0M766.5 538.5h0M766.5 532.5h0M766.5 474.5h0M766.5 508.5h0M767.5 508.5h0M767.5 504.5h0M767.5 556.5h0M767.5 522.5h0M768.5 525.5h0M768.5 482.5h0M768.5 537.5h0M768.5 553.5h0M769.5 521.5h0M769.5 526.5h0M769.5 520.5h0M769.5 517.5h0M770.5 519.5h0M770.5 535.5h0M770.5 531.5h0M770.5 473.5h0M771.5 534.5h0M771.5 510.5h0M771.5 542.5h0M772.5 557.5h0M772.5 502.5h0M772.5 516.5h0M772.5 492.5h0M773.5 498.5h0M773.5 514.5h0M773.5 535.5h0M773.5 478.5h0M774.5 517.5h0M774.5 473.5h0M774.5 503.5h0M774.5 498.5h0M775.5 504.5h0M775.5 507.5h0M775.5 521.5h0M776.5 467.5h0M776.5 535.5h0M776.5 547.5h0M776.5 509.5h0M777.5 529.5h0M777.5 495.5h0M777.5 519.5h0M777.5 491.5h0M778.5 513.5h0M778.5 531.5h0M778.5 522.5h0M778.5 501.5h0M779.5 528.5h0M779.5 533.5h0M779.5 519.5h0M779.5 509.5h0M780.5 490.5h0M780.5 506.5h0M780.5 497.5h0M781.5 519.5h0M781.5 477.5h0M781.5 470.5h0M781.5 529.5h0M781.5 510.5h0M782.5 518.5h0M782.5 509.5h0M782.5 522.5h0M783.5 530.5h0M783.5 543.5h0M783.5 526.5h0M783.5 516.5h0M784.5 494.5h0M784.5 504.5h0M784.5 525.5h0M784.5 530.5h0M785.5 548.5h0M785.5 502.5h0M785.5 514.5h0M786.5 504.5h0M786.5 501.5h0M786.5 505.5h0M786.5 519.5h0M787.5 523.5h0M787.5 538.5h0M787.5 530.5h0M787.5 508.5h0M788.5 470.5h0M788.5 526.5h0M788.5 513.5h0M789.5 516.5h0M789.5 525.5h0M789.5 518.5h0M789.5 523.5h0M790.5 558.5h0M790.5 501.5h0M790.5 556.5h0M790.5 531.5h0M791.5 528.5h0M791.5 510.5h0M791.5 524.5h0M792.5 530.5h0M792.5 538.5h0M792.5 515.5h0M792.5 527.5h0M793.5 535.5h0M793.5 549.5h0M793.5 539.5h0M793.5 518.5h0M794.5 554.5h0M794.5 518.5h0M794.5 520.5h0M794.5 498.5h0M795.5 536.5h0M795.5 542.5h0M795.5 524.5h0M795.5 530.5h0M796.5 577.5h0M796.5 497.5h0M796.5 517.5h0M796.5 520.5h0M797.5 539.5h0M797.5 515.5h0M797.5 529.5h0M797.5 490.5h0M798.5 508.5h0M798.5 493.5h0M798.5 548.5h0M799.5 541.5h0M799.5 532.5h0M799.5 536.5h0M799.5 490.5h0M800.5 515.5h0M800.5 545.5h0M800.5 529.5h0M800.5 485.5h0M801.5 530.5h0M801.5 511.5h0M801.5 559.5h0M801.5 535.5h0M802.5 527.5h0M802.5 529.5h0M802.5 524.5h0M802.5 516.5h0M803.5 500.5h0M803.5 560.5h0M803.5 523.5h0M804.5 509.5h0M804.5 519.5h0M804.5 500.5h0M804.5 527.5h0M805.5 533.5h0M805.5 541.5h0M805.5 505.5h0M805.5 551.5h0M806.5 533.5h0M806.5 525.5h0M806.5 512.5h0M806.5 531.5h0M807.5 544.5h0M807.5 512.5h0M807.5 548.5h0M808.5 540.5h0M808.5 567.5h0M808.5 521.5h0M808.5 522.5h0M809.5 561.5h0M809.5 530.5h0M825.5 522.5h0M825.5 514.5h0M825.5 491.5h0M826.5 483.5h0M826.5 517.5h0M826.5 552.5h0M826.5 519.5h0M827.5 523.5h0M827.5 521.5h0M827.5 522.5h0M827.5 520.5h0M828.5 566.5h0M828.5 508.5h0M828.5 509.5h0M828.5 513.5h0M829.5 523.5h0M829.5 502.5h0M829.5 557.5h0M830.5 524.5h0M830.5 509.5h0M830.5 531.5h0M830.5 524.5h0M831.5 501.5h0M831.5 526.5h0M831.5 541.5h0M831.5 533.5h0M832.5 516.5h0M832.5 545.5h0M832.5 523.5h0M832.5 532.5h0M833.5 523.5h0M833.5 509.5h0M833.5 509.5h0M833.5 523.5h0M834.5 520.5h0M834.5 509.5h0M834.5 542.5h0M834.5 522.5h0M835.5 550.5h0M835.5 500.5h0M835.5 524.5h0M836.5 553.5h0M836.5 536.5h0M836.5 511.5h0M836.5 521.5h0M837.5 561.5h0M837.5 491.5h0M837.5 522.5h0M837.5 519.5h0M838.5 534.5h0M838.5 544.5h0M838.5 559.5h0M838.5 525.5h0M839.5 528.5h0M839.5 533.5h0M839.5 512.5h0M839.5 522.5h0M840.5 550.5h0M840.5 537.5h0M840.5 505.5h0M840.5 557.5h0M841.5 484.5h0M841.5 540.5h0M841.5 475.5h0M842.5 519.5h0M842.5 562.5h0M842.5 519.5h0M842.5 527.5h0M843.5 537.5h0M843.5 527.5h0M843.5 527.5h0M844.5 513.5h0M844.5 534.5h0M844.5 528.5h0M844.5 513.5h0M845.5 528.5h0M845.5 553.5h0M845.5 511.5h0M845.5 534.5h0M846.5 523.5h0M846.5 542.5h0M846.5 530.5h0M847.5 548.5h0M847.5 494.5h0M847.5 549.5h0M847.5 506.5h0M848.5 565.5h0M848.5 521.5h0M848.5 532.5h0M848.5 505.5h0M849.5 521.5h0M849.5 478.5h0M849.5 464.5h0M849.5 536.5h0M850.5 510.5h0M850.5 544.5h0M850.5 544.5h0M850.5 525.5h0M851.5 505.5h0M851.5 510.5h0M851.5 527.5h0M851.5 499.5h0M852.5 547.5h0M852.5 541.5h0M852.5 523.5h0M853.5 559.5h0M853.5 493.5h0M853.5 524.5h0M853.5 528.5h0M854.5 511.5h0M854.5 548.5h0M854.5 522.5h0M854.5 555.5h0M855.5 523.5h0M855.5 517.5h0M855.5 486.5h0M855.5 519.5h0M856.5 490.5h0M856.5 518.5h0M856.5 552.5h0M857.5 502.5h0M857.5 516.5h0M857.5 530.5h0M857.5 498.5h0M858.5 539.5h0M858.5 525.5h0M858.5 502.5h0M858.5 499.5h0M859.5 531.5h0M859.5 511.5h0M859.5 515.5h0M859.5 504.5h0M860.5 522.5h0M860.5 561.5h0M860.5 524.5h0M860.5 485.5h0M861.5 534.5h0M861.5 521.5h0M861.5 499.5h0M862.5 522.5h0M862.5 540.5h0M862.5 518.5h0M862.5 521.5h0M863.5 535.5h0M863.5 520.5h0M863.5 546.5h0M863.5 550.5h0M864.5 541.5h0M864.5 522.5h0M864.5 518.5h0M864.5 531.5h0M865.5 495.5h0M865.5 506.5h0M865.5 517.5h0M865.5 495.5h0M866.5 488.5h0M866.5 504.5h0M866.5 531.5h0M866.5 501.5h0M867.5 495.5h0M867.5 511.5h0M867.5 522.5h0M867.5 514.5h0M868.5 513.5h0M868.5 559.5h0M868.5 488.5h0M869.5 520.5h0M869.5 480.5h0M869.5 520.5h0M869.5 539.5h0M870.5 505.5h0M870.5 521.5h0M870.5 504.5h0M870.5 532.5h0M871.5 533.5h0M871.5 538.5h0M871.5 538.5h0M871.5 515.5h0M872.5 551.5h0M872.5 521.5h0M872.5 502.5h0M873.5 546.5h0M873.5 530.5h0M873.5 542.5h0M873.5 534.5h0M874.5 524.5h0M874.5 512.5h0M874.5 509.5h0M874.5 541.5h0M875.5 513.5h0M875.5 541.5h0M875.5 552.5h0M875.5 549.5h0M876.5 569.5h0M876.5 528.5h0M876.5 567.5h0M876.5 525.5h0M877.5 474.5h0M877.5 549.5h0M877.5 573.5h0M877.5 522.5h0M878.5 552.5h0M878.5 531.5h0M878.5 530.5h0M879.5 525.5h0M879.5 482.5h0M879.5 523.5h0M879.5 524.5h0M880.5 532.5h0M880.5 545.5h0M880.5 543.5h0M880.5 552.5h0M881.5 511.5h0M881.5 532.5h0M881.5 515.5h0M881.5 522.5h0M882.5 482.5h0M882.5 531.5h0M882.5 515.5h0M883.5 541.5h0M883.5 504.5h0M883.5 532.5h0M883.5 527.5h0M884.5 556.5h0M884.5 515.5h0M884.5 492.5h0M884.5 498.5h0M885.5 549.5h0M885.5 507.5h0M885.5 540.5h0M885.5 560.5h0M886.5 551.5h0M886.5 498.5h0M886.5 531.5h0M886.5 549.5h0M887.5 516.5h0M887.5 517.5h0M887.5 530.5h0M887.5 513.5h0M888.5 530.5h0M888.5 496.5h0M888.5 506.5h0M888.5 523.5h0M889.5 514.5h0M889.5 502.5h0M889.5 523.5h0M890.5 510.5h0M890.5 523.5h0M890.5 528.5h0M890.5 561.5h0M891.5 547.5h0M891.5 542.5h0M891.5 520.5h0M891.5 466.5h0M892.5 541.5h0M892.5 530.5h0M892.5 548.5h0M892.5 529.5h0M893.5 526.5h0M893.5 507.5h0M893.5 551.5h0M894.5 511.5h0M894.5 516.5h0M894.5 528.5h0M894.5 548.5h0M894.5 544.5h0M895.5 526.5h0M895.5 510.5h0M895.5 524.5h0M896.5 538.5h0M896.5 516.5h0M896.5 544.5h0M896.5 506.5h0M897.5 461.5h0M897.5 535.5h0M897.5 501.5h0M897.5 543.5h0M898.5 521.5h0M898.5 512.5h0M898.5 498.5h0M899.5 523.5h0M899.5 495.5h0M899.5 551.5h0M899.5 529.5h0M899.5 524.5h0M900.5 523.5h0M900.5 527.5h0M900.5 485.5h0M901.5 533.5h0M901.5 503.5h0M901.5 516.5h0M901.5 482.5h0M902.5 530.5h0M902.5 510.5h0M902.5 513.5h0M902.5 593.5h0M903.5 517.5h0M903.5 504.5h0M903.5 493.5h0M903.5 548.5h0M904.5 530.5h0M904.5 500.5h0M904.5 550.5h0M904.5 544.5h0M905.5 514.5h0M905.5 513.5h0M905.5 499.5h0M906.5 504.5h0M906.5 523.5h0M906.5 550.5h0M906.5 542.5h0M907.5 529.5h0M907.5 521.5h0M907.5 528.5h0M907.5 513.5h0M908.5 546.5h0M908.5 539.5h0M908.5 558.5h0M908.5 488.5h0M909.5 534.5h0M909.5 510.5h0M909.5 505.5h0M910.5 524.5h0M910.5 536.5h0M910.5 543.5h0M910.5 538.5h0M911.5 569.5h0M911.5 544.5h0M911.5 517.5h0M911.5 527.5h0M912.5 516.5h0M912.5 517.5h0M912.5 519.5h0M912.5 532.5h0M913.5 530.5h0M913.5 515.5h0M913.5 543.5h0M913.5 564.5h0M914.5 518.5h0M914.5 535.5h0M914.5 513.5h0M914.5 550.5h0M915.5 571.5h0M915.5 540.5h0M915.5 550.5h0M916.5 557.5h0M916.5 504.5h0M916.5 531.5h0M916.5 562.5h0M917.5 571.5h0M917.5 539.5h0M917.5 524.5h0M917.5 531.5h0M918.5 512.5h0M918.5 530.5h0M918.5 527.5h0M918.5 577.5h0M919.5 509.5h0M919.5 548.5h0M919.5 517.5h0M919.5 569.5h0M920.5 555.5h0M920.5 511.5h0M920.5 562.5h0M920.5 532.5h0M921.5 544.5h0M921.5 498.5h0M921.5 527.5h0M922.5 507.5h0M922.5 535.5h0M922.5 570.5h0M922.5 491.5h0M923.5 546.5h0M923.5 532.5h0M923.5 534.5h0M923.5 566.5h0M924.5 518.5h0M924.5 541.5h0M924.5 569.5h0M924.5 563.5h0M925.5 580.5h0M925.5 548.5h0M925.5 536.5h0M925.5 552.5h0M926.5 532.5h0M926.5 538.5h0M926.5 520.5h0M927.5 530.5h0M927.5 534.5h0M927.5 547.5h0M927.5 555.5h0M928.5 549.5h0M928.5 521.5h0M928.5 539.5h0M928.5 498.5h0M929.5 511.5h0M929.5 557.5h0M929.5 518.5h0M929.5 501.5h0M930.5 541.5h0M930.5 501.5h0M930.5 542.5h0M930.5 493.5h0M931.5 515.5h0M931.5 531.5h0M931.5 561.5h0M931.5 528.5h0M941.5 539.5h0M941.5 506.5h0M941.5 526.5h0M942.5 529.5h0M942.5 506.5h0M942.5 519.5h0M942.5 528.5h0M943.5 467.5h0M943.5 523.5h0M943.5 560.5h0M943.5 525.5h0M944.5 526.5h0M944.5 496.5h0M944.5 525.5h0M945.5 546.5h0M945.5 525.5h0M945.5 559.5h0M945.5 541.5h0M946.5 525.5h0M946.5 551.5h0M946.5 576.5h0M946.5 555.5h0M947.5 551.5h0M947.5 522.5h0M947.5 544.5h0M947.5 535.5h0M948.5 554.5h0M948.5 533.5h0M948.5 548.5h0M948.5 522.5h0M949.5 529.5h0M949.5 504.5h0M949.5 522.5h0M950.5 541.5h0M950.5 553.5h0M950.5 530.5h0M950.5 519.5h0M951.5 502.5h0M951.5 546.5h0M951.5 563.5h0M951.5 573.5h0M952.5 556.5h0M952.5 539.5h0M952.5 541.5h0M952.5 542.5h0M953.5 536.5h0M953.5 528.5h0M953.5 570.5h0M953.5 534.5h0M954.5 539.5h0M954.5 539.5h0M954.5 544.5h0M955.5 575.5h0M955.5 525.5h0M955.5 545.5h0M955.5 537.5h0M956.5 528.5h0M956.5 534.5h0M956.5 525.5h0M956.5 525.5h0M957.5 553.5h0M957.5 558.5h0M957.5 516.5h0M957.5 550.5h0M958.5 488.5h0M958.5 557.5h0M958.5 530.5h0M958.5 535.5h0M959.5 528.5h0M959.5 553.5h0M959.5 526.5h0M959.5 491.5h0M960.5 545.5h0M960.5 579.5h0M960.5 519.5h0M961.5 524.5h0M961.5 519.5h0M961.5 550.5h0M961.5 524.5h0M962.5 514.5h0M962.5 543.5h0M962.5 532.5h0M962.5 522.5h0M963.5 517.5h0M963.5 538.5h0M963.5 529.5h0M963.5 492.5h0M964.5 491.5h0M964.5 556.5h0M964.5 488.5h0M964.5 542.5h0M965.5 511.5h0M965.5 560.5h0M965.5 538.5h0M966.5 547.5h0M966.5 517.5h0M966.5 529.5h0M966.5 525.5h0M967.5 525.5h0M967.5 530.5h0M967.5 515.5h0M967.5 531.5h0M968.5 536.5h0M968.5 547.5h0M968.5 553.5h0M968.5 545.5h0M969.5 526.5h0M969.5 513.5h0M969.5 537.5h0M970.5 493.5h0M970.5 508.5h0M970.5 534.5h0M970.5 527.5h0M971.5 535.5h0M971.5 573.5h0M971.5 518.5h0M971.5 530.5h0M972.5 570.5h0M972.5 516.5h0M972.5 547.5h0M972.5 540.5h0M973.5 571.5h0M973.5 536.5h0M973.5 526.5h0M973.5 544.5h0M974.5 536.5h0M974.5 575.5h0M974.5 525.5h0M974.5 537.5h0M975.5 537.5h0M975.5 522.5h0M975.5 514.5h0M976.5 537.5h0M976.5 517.5h0M976.5 497.5h0M976.5 559.5h0M977.5 534.5h0M977.5 570.5h0M977.5 529.5h0M977.5 507.5h0M978.5 539.5h0M978.5 560.5h0M978.5 547.5h0M978.5 527.5h0M979.5 567.5h0M979.5 565.5h0M979.5 526.5h0M980.5 564.5h0M980.5 534.5h0M980.5 557.5h0M980.5 569.5h0M981.5 518.5h0M981.5 511.5h0M989.5 520.5h0M989.5 523.5h0M989.5 513.5h0M990.5 510.5h0M990.5 550.5h0M990.5 521.5h0M990.5 475.5h0M991.5 507.5h0M991.5 500.5h0M991.5 524.5h0M991.5 478.5h0M992.5 511.5h0M992.5 530.5h0M992.5 539.5h0M992.5 513.5h0M993.5 486.5h0M993.5 537.5h0M993.5 544.5h0M994.5 572.5h0M994.5 509.5h0M994.5 547.5h0M994.5 540.5h0M995.5 547.5h0M995.5 543.5h0M995.5 508.5h0M995.5 541.5h0M996.5 521.5h0M996.5 540.5h0M996.5 533.5h0M996.5 511.5h0M997.5 511.5h0M997.5 550.5h0M997.5 525.5h0M997.5 545.5h0M998.5 510.5h0M998.5 538.5h0M998.5 545.5h0M999.5 508.5h0M999.5 537.5h0M999.5 523.5h0M999.5 510.5h0M999.5 536.5h0M1000.5 532.5h0M1000.5 513.5h0M1000.5 477.5h0M1001.5 513.5h0M1001.5 509.5h0M1001.5 524.5h0M1001.5 526.5h0M1002.5 493.5h0M1002.5 540.5h0M1002.5 539.5h0M1002.5 493.5h0M1003.5 541.5h0M1003.5 550.5h0M1003.5 514.5h0M1003.5 503.5h0M1004.5 487.5h0M1004.5 477.5h0M1004.5 571.5h0M1004.5 528.5h0M1005.5 530.5h0M1005.5 515.5h0M1005.5 541.5h0M1006.5 522.5h0M1006.5 517.5h0M1006.5 518.5h0M1006.5 540.5h0M1007.5 517.5h0M1007.5 540.5h0M1007.5 540.5h0M1007.5 527.5h0M1008.5 505.5h0M1008.5 564.5h0M1008.5 523.5h0M1008.5 492.5h0M1009.5 518.5h0M1009.5 532.5h0M1009.5 515.5h0M1010.5 487.5h0M1010.5 524.5h0M1010.5 535.5h0M1010.5 504.5h0M1011.5 526.5h0M1011.5 535.5h0M1011.5 502.5h0M1011.5 538.5h0M1012.5 526.5h0M1012.5 491.5h0M1012.5 516.5h0M1012.5 492.5h0M1013.5 557.5h0M1013.5 551.5h0M1013.5 536.5h0M1013.5 522.5h0M1014.5 559.5h0M1014.5 514.5h0M1014.5 530.5h0M1015.5 530.5h0M1015.5 518.5h0M1015.5 524.5h0M1015.5 544.5h0M1016.5 523.5h0M1016.5 544.5h0M1016.5 491.5h0M1016.5 528.5h0M1017.5 524.5h0M1017.5 532.5h0M1017.5 518.5h0M1017.5 513.5h0M1018.5 521.5h0M1018.5 540.5h0M1018.5 495.5h0M1018.5 519.5h0M1019.5 558.5h0M1019.5 566.5h0M1019.5 542.5h0M1020.5 543.5h0M1020.5 554.5h0M1020.5 539.5h0M1020.5 511.5h0M1020.5 492.5h0M1021.5 514.5h0M1021.5 511.5h0M1021.5 494.5h0M1022.5 472.5h0M1022.5 494.5h0M1022.5 506.5h0M1022.5 522.5h0M1023.5 540.5h0M1023.5 510.5h0M1023.5 494.5h0M1023.5 512.5h0M1024.5 531.5h0M1024.5 507.5h0M1024.5 521.5h0M1024.5 532.5h0M1025.5 561.5h0M1025.5 508.5h0M1025.5 534.5h0M1025.5 495.5h0M1026.5 533.5h0M1026.5 518.5h0M1026.5 532.5h0M1027.5 483.5h0M1027.5 492.5h0M1027.5 521.5h0M1027.5 490.5h0M1028.5 547.5h0M1028.5 507.5h0M1028.5 533.5h0M1028.5 524.5h0M1029.5 531.5h0M1029.5 509.5h0M1029.5 560.5h0M1029.5 532.5h0M1030.5 493.5h0M1030.5 570.5h0M1030.5 527.5h0M1031.5 551.5h0M1031.5 579.5h0M1031.5 514.5h0M1031.5 533.5h0M1032.5 496.5h0M1032.5 563.5h0M1032.5 515.5h0M1032.5 490.5h0M1033.5 563.5h0M1033.5 510.5h0M1033.5 509.5h0M1033.5 519.5h0M1034.5 494.5h0M1034.5 510.5h0M1034.5 539.5h0M1034.5 541.5h0M1035.5 527.5h0M1035.5 490.5h0M1035.5 527.5h0M1035.5 506.5h0M1036.5 528.5h0M1036.5 512.5h0M1036.5 514.5h0M1037.5 499.5h0M1037.5 486.5h0M1037.5 536.5h0M1037.5 550.5h0M1038.5 527.5h0M1038.5 526.5h0M1038.5 520.5h0M1038.5 504.5h0M1039.5 534.5h0M1039.5 525.5h0M1039.5 525.5h0M1039.5 502.5h0M1040.5 535.5h0M1040.5 500.5h0M1040.5 484.5h0M1040.5 530.5h0M1041.5 495.5h0M1041.5 514.5h0M1041.5 527.5h0M1042.5 482.5h0M1042.5 499.5h0M1042.5 532.5h0M1042.5 513.5h0M1043.5 540.5h0M1043.5 555.5h0M1043.5 503.5h0M1043.5 525.5h0M1044.5 490.5h0M1044.5 521.5h0M1044.5 519.5h0M1044.5 527.5h0M1045.5 521.5h0M1045.5 542.5h0M1045.5 530.5h0M1045.5 562.5h0M1046.5 563.5h0M1046.5 554.5h0M1046.5 538.5h0M1047.5 526.5h0M1047.5 528.5h0M1047.5 499.5h0M1047.5 472.5h0M1048.5 576.5h0M1048.5 493.5h0M1048.5 504.5h0M1048.5 536.5h0M1049.5 521.5h0M1049.5 566.5h0M1049.5 529.5h0M1049.5 490.5h0M1050.5 549.5h0M1050.5 536.5h0M1050.5 521.5h0M1050.5 509.5h0M1051.5 522.5h0M1051.5 535.5h0M1051.5 509.5h0M1051.5 535.5h0M1052.5 472.5h0M1052.5 496.5h0M1052.5 520.5h0M1052.5 540.5h0M1053.5 534.5h0M1053.5 538.5h0M1053.5 529.5h0M1054.5 513.5h0M1054.5 549.5h0M1054.5 518.5h0M1054.5 521.5h0M1055.5 542.5h0M1055.5 494.5h0M1055.5 511.5h0M1055.5 514.5h0M1056.5 533.5h0M1056.5 536.5h0M1056.5 520.5h0M1057.5 552.5h0M1057.5 513.5h0M1057.5 544.5h0M1057.5 521.5h0M1058.5 506.5h0M1058.5 526.5h0M1058.5 534.5h0M1058.5 536.5h0M1059.5 517.5h0M1059.5 543.5h0M1059.5 521.5h0M1059.5 499.5h0M1060.5 560.5h0M1060.5 536.5h0M1060.5 514.5h0M1060.5 543.5h0M1061.5 541.5h0M1061.5 545.5h0M1061.5 501.5h0M1061.5 565.5h0M1062.5 522.5h0M1062.5 524.5h0M1062.5 519.5h0M1062.5 536.5h0M1063.5 518.5h0M1063.5 530.5h0M1063.5 538.5h0M1063.5 465.5h0M1064.5 498.5h0M1064.5 542.5h0M1064.5 534.5h0M1065.5 510.5h0M1065.5 489.5h0M1065.5 524.5h0M1065.5 504.5h0M1066.5 515.5h0M1066.5 495.5h0M1066.5 531.5h0M1066.5 536.5h0M1067.5 514.5h0M1067.5 514.5h0M1067.5 519.5h0M1067.5 494.5h0M1068.5 505.5h0M1068.5 517.5h0M1068.5 544.5h0M1068.5 505.5h0M1069.5 501.5h0M1069.5 533.5h0M1069.5 522.5h0M1070.5 543.5h0M1070.5 518.5h0M1070.5 526.5h0M1070.5 559.5h0M1071.5 522.5h0M1071.5 530.5h0M1071.5 530.5h0M1071.5 502.5h0M1072.5 514.5h0M1072.5 506.5h0M1072.5 532.5h0M1072.5 497.5h0M1073.5 543.5h0M1073.5 512.5h0M1073.5 559.5h0M1073.5 524.5h0M1074.5 550.5h0M1074.5 560.5h0M1074.5 516.5h0M1075.5 527.5h0M1075.5 521.5h0M1075.5 531.5h0M1075.5 527.5h0M1076.5 534.5h0M1076.5 537.5h0M1076.5 532.5h0M1076.5 486.5h0M1077.5 557.5h0M1077.5 567.5h0M1077.5 556.5h0M1077.5 551.5h0M1078.5 526.5h0M1078.5 514.5h0M1078.5 513.5h0M1078.5 542.5h0M1079.5 523.5h0M1079.5 499.5h0M1079.5 524.5h0M1079.5 510.5h0M1080.5 558.5h0M1080.5 519.5h0M1080.5 521.5h0M1080.5 564.5h0M1081.5 538.5h0M1081.5 526.5h0M1081.5 558.5h0M1082.5 520.5h0M1082.5 519.5h0M1082.5 533.5h0M1082.5 542.5h0M1083.5 544.5h0M1083.5 532.5h0M1083.5 516.5h0M1083.5 569.5h0M1084.5 536.5h0M1084.5 535.5h0M1084.5 559.5h0M1084.5 568.5h0M1085.5 546.5h0M1085.5 577.5h0M1085.5 537.5h0M1086.5 548.5h0M1086.5 565.5h0M1086.5 542.5h0M1086.5 560.5h0M1087.5 557.5h0M1087.5 517.5h0M1087.5 559.5h0M1088.5 536.5h0M1088.5 565.5h0M1088.5 562.5h0M1088.5 510.5h0M1089.5 544.5h0M1089.5 525.5h0M1089.5 572.5h0M1089.5 565.5h0M1090.5 561.5h0M1090.5 528.5h0M1090.5 557.5h0M1090.5 584.5h0M1091.5 527.5h0M1091.5 554.5h0M1091.5 541.5h0M1092.5 527.5h0M1092.5 497.5h0M1092.5 544.5h0M1092.5 509.5h0M1093.5 572.5h0M1093.5 539.5h0M1093.5 536.5h0M1093.5 589.5h0M1094.5 563.5h0M1094.5 558.5h0M1094.5 532.5h0M1094.5 553.5h0M1095.5 551.5h0M1095.5 556.5h0M1095.5 532.5h0M1096.5 543.5h0M1111.5 559.5h0M1111.5 509.5h0M1111.5 531.5h0M1112.5 529.5h0M1112.5 523.5h0M1112.5 483.5h0M1113.5 498.5h0M1113.5 516.5h0M1113.5 547.5h0M1113.5 526.5h0M1114.5 522.5h0M1114.5 498.5h0M1114.5 504.5h0M1114.5 505.5h0M1115.5 536.5h0M1115.5 495.5h0M1115.5 545.5h0M1116.5 537.5h0M1116.5 513.5h0M1116.5 494.5h0M1116.5 509.5h0M1117.5 512.5h0M1117.5 482.5h0M1117.5 537.5h0M1118.5 558.5h0M1118.5 547.5h0M1118.5 497.5h0M1118.5 493.5h0M1119.5 522.5h0M1119.5 545.5h0M1119.5 533.5h0M1119.5 506.5h0M1120.5 493.5h0M1120.5 528.5h0M1120.5 532.5h0M1120.5 534.5h0M1121.5 528.5h0M1121.5 501.5h0M1121.5 512.5h0M1121.5 508.5h0M1122.5 514.5h0M1122.5 512.5h0M1122.5 545.5h0M1123.5 540.5h0M1123.5 510.5h0M1123.5 509.5h0M1123.5 495.5h0M1124.5 520.5h0M1124.5 537.5h0M1124.5 523.5h0M1124.5 524.5h0M1125.5 508.5h0M1125.5 523.5h0M1125.5 509.5h0M1125.5 508.5h0M1126.5 509.5h0M1126.5 508.5h0M1126.5 542.5h0M1127.5 496.5h0M1127.5 485.5h0M1127.5 503.5h0M1127.5 486.5h0M1128.5 511.5h0M1128.5 532.5h0M1128.5 508.5h0M1128.5 521.5h0M1129.5 523.5h0M1129.5 486.5h0M1129.5 539.5h0M1129.5 496.5h0M1130.5 532.5h0M1130.5 557.5h0M1130.5 504.5h0M1130.5 517.5h0M1131.5 515.5h0M1131.5 514.5h0M1131.5 496.5h0M1131.5 511.5h0M1132.5 524.5h0M1132.5 520.5h0M1132.5 508.5h0M1132.5 530.5h0M1133.5 510.5h0M1133.5 561.5h0M1133.5 520.5h0M1134.5 518.5h0M1134.5 503.5h0M1134.5 541.5h0M1134.5 522.5h0M1135.5 509.5h0M1135.5 515.5h0M1135.5 506.5h0M1136.5 530.5h0M1136.5 474.5h0M1136.5 524.5h0M1136.5 524.5h0M1137.5 517.5h0M1137.5 547.5h0M1137.5 541.5h0M1137.5 528.5h0M1138.5 538.5h0M1138.5 501.5h0M1138.5 532.5h0M1139.5 475.5h0M1139.5 516.5h0M1139.5 538.5h0M1139.5 519.5h0M1140.5 508.5h0M1140.5 523.5h0M1140.5 514.5h0M1140.5 528.5h0M1141.5 539.5h0M1141.5 525.5h0M1141.5 487.5h0M1141.5 532.5h0M1142.5 525.5h0M1142.5 555.5h0M1142.5 537.5h0M1142.5 516.5h0M1143.5 530.5h0M1143.5 499.5h0M1143.5 502.5h0M1144.5 532.5h0M1144.5 524.5h0M1144.5 508.5h0M1144.5 514.5h0M1145.5 528.5h0M1145.5 559.5h0M1145.5 492.5h0M1145.5 520.5h0M1146.5 516.5h0M1146.5 534.5h0M1146.5 488.5h0M1146.5 521.5h0M1147.5 515.5h0M1147.5 560.5h0M1147.5 528.5h0M1147.5 519.5h0M1148.5 509.5h0M1148.5 503.5h0M1148.5 521.5h0M1148.5 496.5h0M1149.5 520.5h0M1149.5 520.5h0M1149.5 517.5h0M1150.5 552.5h0M1150.5 563.5h0M1150.5 479.5h0M1150.5 553.5h0M1151.5 530.5h0M1151.5 505.5h0M1151.5 531.5h0M1151.5 494.5h0M1152.5 558.5h0M1152.5 515.5h0M1152.5 505.5h0M1152.5 472.5h0M1153.5 487.5h0M1153.5 533.5h0M1153.5 500.5h0M1153.5 512.5h0M1154.5 543.5h0M1154.5 529.5h0M1154.5 496.5h0M1155.5 524.5h0M1155.5 538.5h0M1155.5 531.5h0M1155.5 545.5h0M1156.5 551.5h0M1156.5 511.5h0M1156.5 509.5h0M1156.5 497.5h0M1157.5 550.5h0M1157.5 542.5h0M1157.5 510.5h0M1157.5 515.5h0M1158.5 522.5h0M1158.5 543.5h0M1158.5 524.5h0M1158.5 547.5h0M1159.5 486.5h0M1159.5 503.5h0M1159.5 538.5h0M1160.5 492.5h0M1160.5 539.5h0M1160.5 505.5h0M1160.5 514.5h0M1161.5 526.5h0M1161.5 489.5h0M1161.5 552.5h0M1161.5 524.5h0M1162.5 524.5h0M1162.5 555.5h0M1162.5 549.5h0M1162.5 515.5h0M1163.5 513.5h0M1163.5 539.5h0M1163.5 507.5h0M1163.5 509.5h0M1164.5 503.5h0M1164.5 524.5h0M1164.5 521.5h0M1164.5 507.5h0M1165.5 531.5h0M1165.5 537.5h0M1165.5 545.5h0M1165.5 510.5h0M1166.5 495.5h0M1166.5 559.5h0M1166.5 527.5h0M1167.5 507.5h0M1167.5 491.5h0M1167.5 516.5h0M1167.5 539.5h0M1168.5 508.5h0M1168.5 475.5h0M1168.5 514.5h0M1168.5 508.5h0M1169.5 487.5h0M1169.5 553.5h0M1169.5 506.5h0M1169.5 492.5h0M1170.5 502.5h0M1170.5 519.5h0M1170.5 530.5h0M1170.5 534.5h0M1171.5 549.5h0M1171.5 533.5h0M1171.5 547.5h0M1172.5 525.5h0M1172.5 527.5h0M1172.5 535.5h0M1172.5 531.5h0M1173.5 522.5h0M1173.5 548.5h0M1173.5 510.5h0M1173.5 519.5h0M1174.5 511.5h0M1174.5 529.5h0M1174.5 527.5h0M1174.5 519.5h0M1175.5 520.5h0M1175.5 530.5h0M1175.5 529.5h0M1176.5 533.5h0M1176.5 529.5h0M1176.5 537.5h0M1176.5 538.5h0M1176.5 542.5h0M1177.5 494.5h0M1177.5 536.5h0M1177.5 524.5h0M1178.5 542.5h0M1178.5 519.5h0M1178.5 497.5h0M1178.5 537.5h0M1179.5 519.5h0M1179.5 524.5h0M1179.5 505.5h0M1179.5 524.5h0M1180.5 525.5h0M1180.5 527.5h0M1180.5 562.5h0M1181.5 503.5h0M1181.5 490.5h0M1181.5 540.5h0M1181.5 506.5h0M1181.5 523.5h0M1182.5 494.5h0M1182.5 533.5h0M1182.5 514.5h0M1183.5 496.5h0M1183.5 511.5h0M1183.5 518.5h0M1183.5 523.5h0M1184.5 534.5h0M1184.5 519.5h0M1184.5 541.5h0M1184.5 488.5h0M1185.5 509.5h0M1185.5 523.5h0M1185.5 550.5h0M1185.5 498.5h0M1186.5 492.5h0M1186.5 510.5h0M1186.5 501.5h0M1186.5 500.5h0M1187.5 518.5h0M1187.5 522.5h0M1187.5 514.5h0M1188.5 491.5h0M1188.5 527.5h0M1188.5 547.5h0M1188.5 513.5h0M1189.5 512.5h0M1189.5 516.5h0M1189.5 511.5h0M1189.5 537.5h0M1190.5 531.5h0M1190.5 521.5h0M1190.5 515.5h0M1190.5 503.5h0M1191.5 498.5h0M1191.5 509.5h0M1191.5 516.5h0M1191.5 532.5h0M1192.5 522.5h0M1192.5 544.5h0M1192.5 527.5h0M1193.5 505.5h0M1193.5 502.5h0M1193.5 533.5h0M1193.5 490.5h0M1193.5 560.5h0M1194.5 503.5h0M1194.5 514.5h0M1194.5 517.5h0M1195.5 506.5h0M1195.5 523.5h0M1195.5 471.5h0M1195.5 525.5h0M1196.5 523.5h0M1196.5 510.5h0M1196.5 556.5h0M1196.5 520.5h0M1197.5 546.5h0M1197.5 492.5h0M1197.5 529.5h0M1198.5 522.5h0M1198.5 555.5h0M1198.5 484.5h0M1198.5 555.5h0M1199.5 550.5h0M1199.5 536.5h0M1199.5 567.5h0M1199.5 549.5h0M1200.5 531.5h0M1200.5 502.5h0M1200.5 501.5h0M1200.5 547.5h0M1201.5 535.5h0M1201.5 511.5h0M1201.5 501.5h0M1201.5 541.5h0M1202.5 530.5h0M1202.5 526.5h0M1202.5 523.5h0M1203.5 531.5h0M1203.5 490.5h0M1203.5 530.5h0M1203.5 502.5h0M1203.5 515.5h0M1204.5 496.5h0M1204.5 564.5h0M1205.5 513.5h0M1205.5 567.5h0M1205.5 499.5h0M1205.5 532.5h0M1206.5 569.5h0M1206.5 547.5h0M1206.5 534.5h0M1206.5 499.5h0M1207.5 526.5h0M1207.5 518.5h0M1207.5 542.5h0M1207.5 539.5h0M1208.5 559.5h0M1208.5 538.5h0M1208.5 536.5h0M1209.5 532.5h0M1209.5 548.5h0M1209.5 537.5h0M1209.5 542.5h0M1210.5 528.5h0M1210.5 547.5h0M1210.5 546.5h0M1210.5 553.5h0M1211.5 549.5h0M1211.5 541.5h0M1211.5 556.5h0M1211.5 511.5h0M1212.5 516.5h0M1212.5 529.5h0M1212.5 521.5h0M1212.5 561.5h0M1213.5 550.5h0M1213.5 546.5h0M1213.5 532.5h0M1213.5 521.5h0M1214.5 520.5h0M1214.5 566.5h0M1214.5 538.5h0M1215.5 514.5h0M1215.5 541.5h0M1215.5 527.5h0M1215.5 570.5h0M1216.5 535.5h0M1216.5 541.5h0M1216.5 576.5h0M1216.5 519.5h0M1217.5 507.5h0M1217.5 518.5h0M1217.5 541.5h0M1217.5 537.5h0M1218.5 547.5h0M1218.5 522.5h0M1218.5 524.5h0M1231.5 475.5h0M1231.5 504.5h0M1231.5 484.5h0M1232.5 571.5h0M1232.5 512.5h0M1232.5 532.5h0M1232.5 552.5h0M1232.5 527.5h0M1233.5 495.5h0M1233.5 504.5h0M1233.5 540.5h0M1234.5 505.5h0M1234.5 546.5h0M1234.5 547.5h0M1235.5 542.5h0M1235.5 531.5h0M1235.5 540.5h0M1236.5 543.5h0M1236.5 509.5h0M1236.5 543.5h0M1236.5 526.5h0M1236.5 542.5h0M1237.5 534.5h0M1237.5 504.5h0M1237.5 528.5h0M1238.5 512.5h0M1238.5 530.5h0M1238.5 505.5h0M1238.5 530.5h0M1239.5 505.5h0M1239.5 556.5h0M1239.5 506.5h0M1239.5 520.5h0M1240.5 549.5h0M1240.5 544.5h0M1240.5 572.5h0M1240.5 536.5h0M1241.5 526.5h0M1241.5 542.5h0M1241.5 509.5h0M1242.5 577.5h0M1242.5 536.5h0M1242.5 558.5h0M1242.5 543.5h0M1243.5 514.5h0M1243.5 532.5h0M1243.5 501.5h0M1243.5 540.5h0M1244.5 547.5h0M1244.5 539.5h0M1244.5 564.5h0M1244.5 552.5h0M1245.5 535.5h0M1245.5 514.5h0M1245.5 554.5h0M1245.5 552.5h0M1246.5 567.5h0M1246.5 563.5h0M1246.5 534.5h0M1246.5 532.5h0M1247.5 526.5h0M1247.5 538.5h0M1247.5 510.5h0M1248.5 569.5h0M1248.5 533.5h0M1248.5 519.5h0M1248.5 539.5h0M1249.5 523.5h0M1249.5 536.5h0M1249.5 539.5h0M1249.5 528.5h0M1250.5 544.5h0M1250.5 531.5h0M1250.5 517.5h0M1250.5 553.5h0M1251.5 515.5h0M1251.5 505.5h0M1251.5 494.5h0M1251.5 536.5h0M1252.5 505.5h0M1252.5 567.5h0M1252.5 557.5h0M1253.5 527.5h0M1253.5 551.5h0M1253.5 548.5h0M1253.5 549.5h0M1254.5 534.5h0M1254.5 541.5h0M1254.5 547.5h0M1254.5 528.5h0M1255.5 538.5h0M1255.5 527.5h0M1255.5 521.5h0M1256.5 516.5h0M1256.5 532.5h0M1256.5 536.5h0M1256.5 536.5h0M1256.5 550.5h0M1257.5 517.5h0M1257.5 528.5h0M1257.5 505.5h0M1258.5 521.5h0M1258.5 537.5h0M1258.5 509.5h0M1258.5 533.5h0M1259.5 528.5h0M1259.5 517.5h0M1259.5 522.5h0M1259.5 543.5h0M1260.5 512.5h0M1260.5 518.5h0M1260.5 527.5h0M1260.5 530.5h0M1261.5 521.5h0M1261.5 557.5h0M1261.5 499.5h0M1262.5 577.5h0M1262.5 547.5h0M1262.5 546.5h0M1262.5 518.5h0M1263.5 525.5h0M1263.5 518.5h0M1263.5 551.5h0M1263.5 501.5h0M1264.5 507.5h0M1264.5 569.5h0M1264.5 521.5h0M1264.5 565.5h0M1265.5 537.5h0M1265.5 514.5h0M1265.5 525.5h0M1265.5 552.5h0M1266.5 538.5h0M1266.5 503.5h0M1266.5 521.5h0M1267.5 510.5h0M1267.5 559.5h0M1267.5 513.5h0M1267.5 520.5h0M1268.5 543.5h0M1268.5 495.5h0M1268.5 524.5h0M1268.5 505.5h0M1269.5 534.5h0M1269.5 515.5h0M1269.5 512.5h0M1269.5 525.5h0M1270.5 520.5h0M1270.5 516.5h0M1270.5 524.5h0M1274.5 545.5h0M1274.5 564.5h0M1275.5 513.5h0M1275.5 514.5h0M1275.5 527.5h0M1276.5 543.5h0M1276.5 516.5h0M1276.5 523.5h0M1276.5 518.5h0M1277.5 516.5h0M1277.5 555.5h0M1277.5 516.5h0M1277.5 550.5h0M1278.5 515.5h0M1278.5 532.5h0M1278.5 535.5h0M1278.5 492.5h0M1279.5 520.5h0M1279.5 520.5h0M1279.5 509.5h0M1279.5 480.5h0M1280.5 581.5h0M1280.5 513.5h0M1280.5 523.5h0M1281.5 501.5h0M1281.5 523.5h0M1281.5 524.5h0M1281.5 511.5h0M1282.5 524.5h0M1282.5 541.5h0M1282.5 522.5h0M1282.5 485.5h0M1283.5 511.5h0M1283.5 569.5h0M1283.5 525.5h0M1283.5 542.5h0M1284.5 503.5h0M1284.5 545.5h0M1284.5 524.5h0M1284.5 512.5h0M1285.5 505.5h0M1285.5 535.5h0M1285.5 517.5h0M1286.5 476.5h0M1286.5 536.5h0M1286.5 521.5h0M1286.5 540.5h0M1287.5 526.5h0M1287.5 512.5h0M1287.5 521.5h0M1287.5 509.5h0M1288.5 548.5h0M1288.5 519.5h0M1288.5 529.5h0M1289.5 581.5h0M1289.5 500.5h0M1289.5 520.5h0M1289.5 535.5h0M1290.5 501.5h0M1290.5 512.5h0M1290.5 571.5h0M1290.5 513.5h0M1291.5 473.5h0M1291.5 516.5h0M1291.5 505.5h0M1291.5 557.5h0M1292.5 555.5h0M1292.5 552.5h0M1292.5 501.5h0M1292.5 504.5h0M1293.5 575.5h0M1293.5 505.5h0M1293.5 567.5h0M1294.5 553.5h0M1294.5 526.5h0M1294.5 538.5h0M1294.5 525.5h0M1295.5 520.5h0M1295.5 500.5h0M1295.5 534.5h0M1295.5 538.5h0M1296.5 539.5h0M1296.5 474.5h0M1296.5 500.5h0M1296.5 499.5h0M1297.5 512.5h0M1297.5 519.5h0M1297.5 494.5h0M1297.5 525.5h0M1298.5 555.5h0M1298.5 557.5h0M1298.5 471.5h0M1299.5 546.5h0M1299.5 538.5h0M1299.5 527.5h0M1299.5 502.5h0M1300.5 547.5h0M1300.5 529.5h0M1300.5 516.5h0M1300.5 551.5h0M1301.5 523.5h0M1301.5 501.5h0M1301.5 519.5h0M1301.5 522.5h0M1302.5 514.5h0M1302.5 525.5h0M1302.5 533.5h0M1303.5 535.5h0M240.5 459.5h0M229.5 480.5h0M249.5 471.5h0M252.5 464.5h0M292.5 461.5h0M294.5 462.5h0M294.5 459.5h0M365.5 456.5h0M359.5 455.5h0M365.5 466.5h0M406.5 456.5h0M413.5 451.5h0M396.5 477.5h0M397.5 466.5h0M532.5 460.5h0M540.5 462.5h0M579.5 454.5h0M654.5 444.5h0M643.5 468.5h0M639.5 478.5h0M703.5 453.5h0M689.5 465.5h0M690.5 475.5h0M768.5 457.5h0M827.5 445.5h0M819.5 459.5h0M807.5 480.5h0M944.5 449.5h0M940.5 449.5h0M947.5 472.5h0M988.5 444.5h0M990.5 450.5h0M995.5 466.5h0M995.5 474.5h0M992.5 481.5h0M1104.5 451.5h0M1108.5 458.5h0M1114.5 480.5h0M1227.5 462.5h0M1213.5 470.5h0M1216.5 478.5h0M1275.5 446.5h0M1277.5 460.5h0M1264.5 459.5h0M1281.5 463.5h0M246.5 449.5h0M290.5 447.5h0M412.5 443.5h0M412.5 446.5h0M413.5 451.5h0M532.5 446.5h0M577.5 468.5h0M577.5 468.5h0M579.5 450.5h0M650.5 446.5h0M702.5 442.5h0M767.5 469.5h0M768.5 447.5h0M865.5 463.5h0M864.5 467.5h0M940.5 445.5h0M981.5 443.5h0M1057.5 457.5h0M1055.5 470.5h0M1112.5 447.5h0M1223.5 448.5h0M1228.5 444.5h0M1228.5 453.5h0" stroke="#000" stroke-width="3.90" stroke-linecap="round" fill="none"/>
<path d="M234.5 383.5h0M237.5 402.5h0M234.5 394.5h0M234.5 397.5h0M237.5 400.5h0M236.5 387.5h0M235.5 391.5h0M235.5 405.5h0M236.5 386.5h0M237.5 384.5h0M237.5 399.5h0M236.5 406.5h0M241.5 384.5h0M239.5 399.5h0M236.5 412.5h0M239.5 411.5h0M239.5 388.5h0M240.5 383.5h0M237.5 407.5h0M236.5 415.5h0M241.5 428.5h0M240.5 384.5h0M243.5 423.5h0M242.5 388.5h0M240.5 401.5h0M242.5 433.5h0M239.5 419.5h0M240.5 383.5h0M242.5 400.5h0M242.5 404.5h0M244.5 401.5h0M243.5 399.5h0M244.5 399.5h0M240.5 400.5h0M244.5 382.5h0M242.5 410.5h0M242.5 383.5h0M244.5 411.5h0M245.5 394.5h0M245.5 423.5h0M246.5 401.5h0M242.5 382.5h0M242.5 386.5h0M245.5 410.5h0M245.5 393.5h0M243.5 395.5h0M246.5 401.5h0M244.5 401.5h0M246.5 415.5h0M247.5 390.5h0M246.5 407.5h0M247.5 399.5h0M246.5 400.5h0M248.5 410.5h0M285.5 389.5h0M285.5 391.5h0M287.5 385.5h0M284.5 393.5h0M285.5 388.5h0M287.5 390.5h0M289.5 408.5h0M288.5 394.5h0M288.5 395.5h0M288.5 402.5h0M289.5 411.5h0M289.5 387.5h0M288.5 408.5h0M290.5 429.5h0M291.5 390.5h0M290.5 427.5h0M290.5 389.5h0M291.5 403.5h0M290.5 408.5h0M292.5 385.5h0M292.5 413.5h0M292.5 420.5h0M291.5 412.5h0M292.5 390.5h0M356.5 381.5h0M357.5 400.5h0M358.5 418.5h0M357.5 406.5h0M358.5 396.5h0M358.5 414.5h0M359.5 404.5h0M360.5 401.5h0M360.5 409.5h0M360.5 396.5h0M361.5 394.5h0M360.5 422.5h0M360.5 394.5h0M360.5 397.5h0M361.5 390.5h0M361.5 416.5h0M362.5 401.5h0M362.5 432.5h0M361.5 423.5h0M363.5 415.5h0M361.5 420.5h0M361.5 391.5h0M363.5 410.5h0M363.5 406.5h0M364.5 395.5h0M364.5 413.5h0M401.5 387.5h0M400.5 404.5h0M400.5 385.5h0M402.5 409.5h0M401.5 405.5h0M404.5 402.5h0M402.5 388.5h0M405.5 403.5h0M403.5 404.5h0M403.5 419.5h0M410.5 420.5h0M405.5 387.5h0M406.5 389.5h0M406.5 409.5h0M410.5 401.5h0M407.5 387.5h0M407.5 393.5h0M409.5 380.5h0M407.5 398.5h0M407.5 414.5h0M410.5 416.5h0M409.5 405.5h0M409.5 408.5h0M408.5 433.5h0M406.5 387.5h0M406.5 384.5h0M409.5 387.5h0M410.5 407.5h0M412.5 415.5h0M407.5 404.5h0M408.5 397.5h0M410.5 412.5h0M410.5 384.5h0M408.5 416.5h0M413.5 392.5h0M411.5 388.5h0M416.5 408.5h0M413.5 386.5h0M410.5 383.5h0M410.5 398.5h0M416.5 427.5h0M412.5 393.5h0M412.5 401.5h0M414.5 390.5h0M413.5 411.5h0M412.5 417.5h0M413.5 401.5h0M416.5 399.5h0M412.5 426.5h0M411.5 408.5h0M416.5 412.5h0M415.5 385.5h0M415.5 406.5h0M521.5 396.5h0M521.5 392.5h0M523.5 409.5h0M523.5 397.5h0M522.5 410.5h0M525.5 390.5h0M523.5 415.5h0M523.5 391.5h0M523.5 381.5h0M525.5 401.5h0M524.5 392.5h0M524.5 391.5h0M521.5 405.5h0M527.5 421.5h0M525.5 395.5h0M522.5 402.5h0M521.5 411.5h0M525.5 406.5h0M526.5 410.5h0M525.5 416.5h0M525.5 400.5h0M523.5 409.5h0M526.5 410.5h0M526.5 415.5h0M527.5 405.5h0M526.5 399.5h0M530.5 415.5h0M525.5 388.5h0M532.5 411.5h0M530.5 412.5h0M527.5 388.5h0M532.5 414.5h0M531.5 390.5h0M532.5 382.5h0M530.5 387.5h0M527.5 410.5h0M532.5 381.5h0M531.5 412.5h0M530.5 432.5h0M536.5 406.5h0M529.5 422.5h0M534.5 430.5h0M531.5 389.5h0M534.5 396.5h0M533.5 413.5h0M535.5 394.5h0M536.5 394.5h0M529.5 397.5h0M536.5 389.5h0M534.5 421.5h0M533.5 392.5h0M534.5 421.5h0M537.5 407.5h0M579.5 438.5h0M577.5 433.5h0M576.5 427.5h0M576.5 424.5h0M575.5 420.5h0M575.5 413.5h0M575.5 409.5h0M576.5 404.5h0M578.5 400.5h0M576.5 396.5h0M574.5 392.5h0M577.5 386.5h0M644.5 390.5h0M643.5 405.5h0M644.5 387.5h0M643.5 381.5h0M643.5 392.5h0M644.5 384.5h0M644.5 395.5h0M643.5 391.5h0M645.5 416.5h0M648.5 409.5h0M645.5 404.5h0M645.5 410.5h0M648.5 402.5h0M645.5 406.5h0M644.5 433.5h0M647.5 392.5h0M649.5 404.5h0M648.5 400.5h0M645.5 381.5h0M648.5 385.5h0M648.5 395.5h0M650.5 385.5h0M648.5 386.5h0M648.5 406.5h0M650.5 416.5h0M649.5 420.5h0M651.5 402.5h0M651.5 435.5h0M649.5 398.5h0M651.5 418.5h0M652.5 392.5h0M650.5 437.5h0M650.5 399.5h0M653.5 414.5h0M654.5 429.5h0M654.5 386.5h0M654.5 389.5h0M654.5 425.5h0M653.5 414.5h0M693.5 414.5h0M691.5 401.5h0M691.5 389.5h0M692.5 382.5h0M692.5 408.5h0M692.5 403.5h0M695.5 405.5h0M694.5 388.5h0M692.5 382.5h0M697.5 416.5h0M695.5 412.5h0M695.5 388.5h0M694.5 411.5h0M696.5 404.5h0M695.5 386.5h0M695.5 401.5h0M695.5 383.5h0M698.5 400.5h0M697.5 405.5h0M697.5 416.5h0M698.5 410.5h0M699.5 436.5h0M698.5 389.5h0M698.5 390.5h0M697.5 396.5h0M700.5 385.5h0M698.5 436.5h0M699.5 408.5h0M702.5 391.5h0M700.5 409.5h0M700.5 407.5h0M699.5 386.5h0M699.5 396.5h0M701.5 430.5h0M701.5 421.5h0M702.5 402.5h0M700.5 397.5h0M701.5 437.5h0M703.5 396.5h0M701.5 401.5h0M703.5 395.5h0M768.5 425.5h0M767.5 414.5h0M767.5 398.5h0M807.5 392.5h0M807.5 388.5h0M810.5 393.5h0M810.5 386.5h0M807.5 402.5h0M807.5 397.5h0M807.5 391.5h0M807.5 387.5h0M811.5 389.5h0M808.5 414.5h0M813.5 416.5h0M815.5 394.5h0M814.5 422.5h0M812.5 408.5h0M811.5 404.5h0M813.5 384.5h0M815.5 389.5h0M814.5 385.5h0M813.5 396.5h0M816.5 419.5h0M812.5 399.5h0M816.5 408.5h0M810.5 427.5h0M819.5 403.5h0M819.5 380.5h0M821.5 414.5h0M813.5 411.5h0M815.5 411.5h0M814.5 385.5h0M813.5 435.5h0M811.5 390.5h0M818.5 397.5h0M816.5 401.5h0M816.5 416.5h0M813.5 404.5h0M822.5 396.5h0M819.5 407.5h0M820.5 386.5h0M816.5 423.5h0M822.5 381.5h0M820.5 404.5h0M820.5 392.5h0M823.5 395.5h0M821.5 410.5h0M820.5 392.5h0M819.5 390.5h0M819.5 428.5h0M824.5 430.5h0M825.5 394.5h0M823.5 414.5h0M823.5 402.5h0M822.5 403.5h0M824.5 402.5h0M826.5 409.5h0M825.5 394.5h0M826.5 413.5h0M821.5 404.5h0M825.5 405.5h0M826.5 434.5h0M826.5 435.5h0M826.5 409.5h0M826.5 399.5h0M824.5 394.5h0M824.5 419.5h0M865.5 428.5h0M864.5 415.5h0M865.5 403.5h0M864.5 393.5h0M865.5 385.5h0M929.5 381.5h0M929.5 408.5h0M930.5 389.5h0M932.5 398.5h0M935.5 400.5h0M933.5 412.5h0M934.5 403.5h0M930.5 434.5h0M933.5 396.5h0M932.5 390.5h0M936.5 393.5h0M934.5 395.5h0M934.5 395.5h0M934.5 416.5h0M933.5 431.5h0M938.5 389.5h0M936.5 437.5h0M936.5 406.5h0M936.5 382.5h0M936.5 401.5h0M935.5 411.5h0M938.5 385.5h0M937.5 406.5h0M941.5 391.5h0M937.5 403.5h0M940.5 403.5h0M939.5 408.5h0M943.5 395.5h0M942.5 385.5h0M940.5 398.5h0M943.5 402.5h0M939.5 417.5h0M937.5 439.5h0M941.5 422.5h0M941.5 408.5h0M942.5 403.5h0M940.5 400.5h0M942.5 412.5h0M940.5 383.5h0M944.5 439.5h0M944.5 423.5h0M944.5 431.5h0M944.5 381.5h0M944.5 415.5h0M979.5 382.5h0M980.5 415.5h0M982.5 385.5h0M979.5 394.5h0M981.5 383.5h0M982.5 388.5h0M979.5 385.5h0M982.5 391.5h0M983.5 407.5h0M981.5 399.5h0M983.5 400.5h0M981.5 422.5h0M981.5 395.5h0M982.5 414.5h0M984.5 385.5h0M986.5 406.5h0M982.5 407.5h0M986.5 388.5h0M987.5 416.5h0M984.5 388.5h0M985.5 410.5h0M986.5 394.5h0M986.5 408.5h0M988.5 382.5h0M987.5 388.5h0M988.5 426.5h0M989.5 382.5h0M988.5 412.5h0M989.5 429.5h0M989.5 400.5h0M990.5 386.5h0M1055.5 441.5h0M1057.5 432.5h0M1057.5 419.5h0M1055.5 415.5h0M1056.5 402.5h0M1057.5 394.5h0M1055.5 385.5h0M1095.5 404.5h0M1094.5 410.5h0M1097.5 398.5h0M1094.5 399.5h0M1095.5 392.5h0M1096.5 397.5h0M1094.5 413.5h0M1096.5 403.5h0M1096.5 402.5h0M1096.5 383.5h0M1096.5 398.5h0M1101.5 394.5h0M1101.5 402.5h0M1096.5 401.5h0M1100.5 415.5h0M1102.5 412.5h0M1099.5 408.5h0M1099.5 416.5h0M1100.5 392.5h0M1098.5 411.5h0M1100.5 413.5h0M1098.5 382.5h0M1103.5 394.5h0M1102.5 418.5h0M1099.5 391.5h0M1103.5 411.5h0M1101.5 395.5h0M1099.5 395.5h0M1102.5 421.5h0M1105.5 386.5h0M1103.5 401.5h0M1103.5 403.5h0M1102.5 421.5h0M1104.5 386.5h0M1105.5 414.5h0M1105.5 401.5h0M1107.5 420.5h0M1107.5 425.5h0M1107.5 425.5h0M1105.5 432.5h0M1106.5 410.5h0M1106.5 381.5h0M1107.5 385.5h0M1107.5 419.5h0M1112.5 418.5h0M1107.5 391.5h0M1106.5 404.5h0M1108.5 411.5h0M1109.5 412.5h0M1108.5 417.5h0M1110.5 412.5h0M1105.5 393.5h0M1113.5 397.5h0M1108.5 417.5h0M1113.5 424.5h0M1113.5 419.5h0M1113.5 406.5h0M1112.5 386.5h0M1110.5 405.5h0M1110.5 409.5h0M1113.5 413.5h0M1111.5 387.5h0M1113.5 381.5h0M1112.5 405.5h0M1217.5 383.5h0M1219.5 391.5h0M1217.5 417.5h0M1216.5 395.5h0M1217.5 388.5h0M1220.5 425.5h0M1219.5 390.5h0M1218.5 430.5h0M1219.5 387.5h0M1217.5 408.5h0M1220.5 400.5h0M1225.5 390.5h0M1218.5 413.5h0M1225.5 410.5h0M1221.5 405.5h0M1221.5 386.5h0M1220.5 413.5h0M1224.5 416.5h0M1222.5 399.5h0M1222.5 421.5h0M1223.5 424.5h0M1227.5 392.5h0M1223.5 410.5h0M1227.5 417.5h0M1226.5 381.5h0M1230.5 407.5h0M1225.5 398.5h0M1227.5 398.5h0M1225.5 402.5h0M1229.5 417.5h0M1225.5 391.5h0M1229.5 403.5h0M1228.5 400.5h0M1228.5 430.5h0M1228.5 393.5h0M1228.5 413.5h0M1228.5 401.5h0M1227.5 388.5h0M1224.5 419.5h0M1227.5 399.5h0M1230.5 401.5h0M1231.5 410.5h0M1227.5 417.5h0M1229.5 422.5h0M1229.5 404.5h0M1231.5 396.5h0M1231.5 414.5h0M1232.5 384.5h0M1230.5 410.5h0M1230.5 395.5h0M1233.5 409.5h0M1229.5 406.5h0M1233.5 389.5h0M1233.5 394.5h0M1233.5 385.5h0M1232.5 386.5h0M1232.5 405.5h0M1233.5 393.5h0M1232.5 397.5h0M1232.5 397.5h0M1232.5 392.5h0M1233.5 404.5h0M1233.5 404.5h0M1233.5 397.5h0M1269.5 411.5h0M1268.5 392.5h0M1271.5 400.5h0M1271.5 395.5h0M1272.5 390.5h0M1271.5 395.5h0M1272.5 426.5h0M1270.5 411.5h0M1271.5 426.5h0M1274.5 395.5h0M1272.5 388.5h0M1273.5 406.5h0M1273.5 434.5h0M1273.5 400.5h0M1273.5 412.5h0M1275.5 412.5h0M1275.5 401.5h0M1275.5 411.5h0M1276.5 418.5h0M309.5 605.5h0M931.5 599.5h0M1006.5 598.5h0M1009.5 598.5h0M1248.5 603.5h0M447.5 438.5h0" stroke="#ffa500" stroke-width="3.90" stroke-linecap="round" fill="none"/>
<path d="M672.5 657.5h0" stroke="#ffa500" stroke-width="3.90" stroke-linecap="round" fill="none"/>
<path d="M236.2 381.0l3.1 5.7h-6.2zM236.5 381.0l3.1 5.7h-6.2zM237.0 381.0l3.1 5.7h-6.2zM237.0 381.0l3.1 5.7h-6.2zM236.9 381.0l3.1 5.7h-6.2zM239.5 381.0l3.1 5.7h-6.2zM245.7 381.0l3.1 5.7h-6.2zM245.3 381.0l3.1 5.7h-6.2zM284.8 381.0l3.1 5.7h-6.2zM284.8 381.0l3.1 5.7h-6.2zM285.5 381.0l3.1 5.7h-6.2zM285.2 381.0l3.1 5.7h-6.2zM288.2 381.0l3.1 5.7h-6.2zM290.5 381.0l3.1 5.7h-6.2zM359.2 381.0l3.1 5.7h-6.2zM358.3 381.0l3.1 5.7h-6.2zM360.7 381.0l3.1 5.7h-6.2zM364.0 381.0l3.1 5.7h-6.2zM364.0 381.0l3.1 5.7h-6.2zM402.9 381.0l3.1 5.7h-6.2zM400.5 381.0l3.1 5.7h-6.2zM407.1 381.0l3.1 5.7h-6.2zM408.5 381.0l3.1 5.7h-6.2zM408.5 381.0l3.1 5.7h-6.2zM407.5 381.0l3.1 5.7h-6.2zM416.1 381.0l3.1 5.7h-6.2zM521.9 381.0l3.1 5.7h-6.2zM522.2 381.0l3.1 5.7h-6.2zM526.1 381.0l3.1 5.7h-6.2zM524.3 381.0l3.1 5.7h-6.2zM529.4 381.0l3.1 5.7h-6.2zM533.2 381.0l3.1 5.7h-6.2zM532.7 381.0l3.1 5.7h-6.2zM535.0 381.0l3.1 5.7h-6.2zM537.3 381.0l3.1 5.7h-6.2zM643.8 381.0l3.1 5.7h-6.2zM647.6 381.0l3.1 5.7h-6.2zM690.7 381.0l3.1 5.7h-6.2zM691.4 381.0l3.1 5.7h-6.2zM700.2 381.0l3.1 5.7h-6.2zM701.8 381.0l3.1 5.7h-6.2zM703.0 381.0l3.1 5.7h-6.2zM810.3 381.0l3.1 5.7h-6.2zM809.1 381.0l3.1 5.7h-6.2zM813.7 381.0l3.1 5.7h-6.2zM815.7 381.0l3.1 5.7h-6.2zM818.0 381.0l3.1 5.7h-6.2zM820.8 381.0l3.1 5.7h-6.2zM821.5 381.0l3.1 5.7h-6.2zM823.6 381.0l3.1 5.7h-6.2zM826.7 381.0l3.1 5.7h-6.2zM932.3 381.0l3.1 5.7h-6.2zM932.6 381.0l3.1 5.7h-6.2zM932.8 381.0l3.1 5.7h-6.2zM936.3 381.0l3.1 5.7h-6.2zM940.8 381.0l3.1 5.7h-6.2zM939.2 381.0l3.1 5.7h-6.2zM942.7 381.0l3.1 5.7h-6.2zM983.2 381.0l3.1 5.7h-6.2zM983.3 381.0l3.1 5.7h-6.2zM984.6 381.0l3.1 5.7h-6.2zM990.6 381.0l3.1 5.7h-6.2zM1055.4 381.0l3.1 5.7h-6.2zM1057.7 381.0l3.1 5.7h-6.2zM1094.7 381.0l3.1 5.7h-6.2zM1098.6 381.0l3.1 5.7h-6.2zM1099.1 381.0l3.1 5.7h-6.2zM1098.6 381.0l3.1 5.7h-6.2zM1101.8 381.0l3.1 5.7h-6.2zM1104.6 381.0l3.1 5.7h-6.2zM1107.5 381.0l3.1 5.7h-6.2zM1110.3 381.0l3.1 5.7h-6.2zM1217.1 381.0l3.1 5.7h-6.2zM1217.1 381.0l3.1 5.7h-6.2zM1221.2 381.0l3.1 5.7h-6.2zM1224.6 381.0l3.1 5.7h-6.2zM1222.9 381.0l3.1 5.7h-6.2zM1227.7 381.0l3.1 5.7h-6.2zM1270.2 381.0l3.1 5.7h-6.2zM1269.9 381.0l3.1 5.7h-6.2zM1270.8 381.0l3.1 5.7h-6.2zM1271.6 381.0l3.1 5.7h-6.2zM1271.1 381.0l3.1 5.7h-6.2zM1272.7 381.0l3.1 5.7h-6.2zM1274.1 381.0l3.1 5.7h-6.2zM191.5 666.0l3.1 -5.7h-6.2zM471.5 666.0l3.1 -5.7h-6.2zM498.0 666.0l3.1 -5.7h-6.2zM841.5 666.0l3.1 -5.7h-6.2zM959.6 666.0l3.1 -5.7h-6.2zM984.3 666.0l3.1 -5.7h-6.2zM1163.5 666.0l3.1 -5.7h-6.2zM1249.4 666.0l3.1 -5.7h-6.2zM1278.3 666.0l3.1 -5.7h-6.2z" fill="#ffa500"/>
<rect x="162.4" y="469.76" width="1138.5" height="83.32" fill="#ffa500" fill-opacity="0.1"/>
<rect x="105.5" y="498.93" width="1255.3" height="48.61" fill="#f00" fill-opacity="0.1"/>
<path d="M162.4 511.50H1302.9" stroke="#ffa500" stroke-width="2.78" stroke-linecap="square"/>
<path d="M105.5 523.00H1360.8" stroke="#f00" stroke-width="2.08"/>
<path d="M162.00 666.5V380.5" stroke="#800080" stroke-width="2.08" stroke-dasharray="2.08 3.44" stroke-dashoffset="-0.5" fill="none"/><path d="M1303.00 666.5V380.5" stroke="#800080" stroke-width="2.08" stroke-dasharray="2.08 3.44" stroke-dashoffset="-0.5" fill="none"/>
</g>
<rect x="105.5" y="380.5" width="1380.0" height="286.0" fill="none" stroke="#000" stroke-width="1.11"/>
<path d="M162.5 666.5v4.86" stroke="#000" stroke-width="1.11"/><text x="163.4" y="686.9" text-anchor="middle">0</text><path d="M400.5 666.5v4.86" stroke="#000" stroke-width="1.11"/><text x="399.5" y="686.9" text-anchor="middle">1000</text><path d="M637.5 666.5v4.86" stroke="#000" stroke-width="1.11"/><text x="637.0" y="686.9" text-anchor="middle">2000</text><path d="M874.5 666.5v4.86" stroke="#000" stroke-width="1.11"/><text x="874.5" y="686.9" text-anchor="middle">3000</text><path d="M1112.5 666.5v4.86" stroke="#000" stroke-width="1.11"/><text x="1111.8" y="686.9" text-anchor="middle">4000</text><path d="M1349.5 666.5v4.86" stroke="#000" stroke-width="1.11"/><text x="1349.0" y="686.9" text-anchor="middle">5000</text>
<path d="M105.5 423.5h-4.86" stroke="#000" stroke-width="1.11"/><text x="95.4" y="428.0" text-anchor="end">9.08</text>
<path d="M105.5 478.5h-4.86" stroke="#000" stroke-width="1.11"/><text x="95.4" y="483.0" text-anchor="end">9.06</text>
<path d="M105.5 534.5h-4.86" stroke="#000" stroke-width="1.11"/><text x="95.4" y="539.0" text-anchor="end">9.04</text>
<path d="M105.5 589.5h-4.86" stroke="#000" stroke-width="1.11"/><text x="95.4" y="594.0" text-anchor="end">9.02</text>
<path d="M105.5 645.5h-4.86" stroke="#000" stroke-width="1.11"/><text x="95.4" y="650.0" text-anchor="end">9.00</text>
<text x="795.5" y="371.7" text-anchor="middle" style="font-size:16.67px">Magnitude Estimates</text>
<text x="732" y="656.6" text-anchor="middle">60093</text>
<rect x="1365.4" y="387.5" width="113.3" height="48.1" rx="2.8" fill="#fff" fill-opacity="0.8" stroke="#ccc" stroke-opacity="0.8" stroke-width="1.2"/>
<path d="M1369 399.5H1400" stroke="#ffa500" stroke-width="2.78"/>
<path d="M1369 421.9H1399" stroke="#f00" stroke-width="2.08"/>
<text x="1410.2" y="403.8">mag<tspan style="font-size:9.72px;font-style:italic" dx="-0.3" dy="1.9">OBSID</tspan></text>
<text x="1409.0" y="426.7">mag</text>
<rect x="1348.3" y="613.3" width="130.4" height="45.9" rx="2.8" fill="#fff" fill-opacity="0.8" stroke="#ccc" stroke-opacity="0.8" stroke-width="1.2"/>
<circle cx="1367.5" cy="626.3" r="1.8" fill="#ffa500"/>
<text x="1393.0" y="629.9">Highlighted</text>
<circle cx="1367.5" cy="647.5" r="1.8" fill="#000"/>
<text x="1393.0" y="650.9">OK</text>
<g clip-path="url(#c3)">
<path d="M105.5 758.50H1485.5" stroke="#b0b0b0" stroke-width="1.11" stroke-dasharray="1.11 1.83" fill="none"/>
<path d="M105.5 791.50H1485.5" stroke="#b0b0b0" stroke-width="1.11" stroke-dasharray="1.11 1.83" fill="none"/>
<path d="M105.5 823.50H1485.5" stroke="#b0b0b0" stroke-width="1.11" stroke-dasharray="1.11 1.83" fill="none"/>
<path d="M105.5 856.50H1485.5" stroke="#b0b0b0" stroke-width="1.11" stroke-dasharray="1.11 1.83" fill="none"/>
<path d="M105.5 889.50H1485.5" stroke="#b0b0b0" stroke-width="1.11" stroke-dasharray="1.11 1.83" fill="none"/>
<path d="M105.5 921.50H1485.5" stroke="#b0b0b0" stroke-width="1.11" stroke-dasharray="1.11 1.83" fill="none"/>
<path d="M105.5 957.50H1485.5" stroke="#b0b0b0" stroke-width="1.11" stroke-dasharray="1.11 1.83" fill="none"/>
<path d="M105.5 983.50H1485.5" stroke="#b0b0b0" stroke-width="1.11" stroke-dasharray="1.11 1.83" fill="none"/>
<path d="M105.5 1009.50H1485.5" stroke="#b0b0b0" stroke-width="1.11" stroke-dasharray="1.11 1.83" fill="none"/>
<path d="M162.5 1002.5h0M162.5 1003.5h0M163.5 1003.5h0M163.5 1004.5h0M164.5 1004.5h0M164.5 1004.5h0M165.5 1005.5h0M165.5 1005.5h0M166.5 1006.5h0M166.5 1006.5h0M167.5 1006.5h0M167.5 1006.5h0M168.5 1006.5h0M168.5 1006.5h0M169.5 1006.5h0M169.5 1006.5h0M170.5 1007.5h0M170.5 1006.5h0M170.5 1007.5h0M171.5 1006.5h0M171.5 1006.5h0M172.5 1007.5h0M172.5 1007.5h0M173.5 1006.5h0M173.5 1006.5h0M174.5 1007.5h0M174.5 1006.5h0M175.5 1007.5h0M175.5 1007.5h0M176.5 1007.5h0M176.5 1006.5h0M177.5 1007.5h0M177.5 1006.5h0M178.5 1006.5h0M178.5 1007.5h0M179.5 1008.5h0M179.5 1007.5h0M179.5 1007.5h0M180.5 1007.5h0M180.5 1008.5h0M181.5 1008.5h0M181.5 1007.5h0M182.5 1008.5h0M182.5 1008.5h0M183.5 1008.5h0M183.5 1008.5h0M184.5 1008.5h0M184.5 1007.5h0M185.5 1008.5h0M185.5 1008.5h0M186.5 1008.5h0M186.5 1008.5h0M187.5 1007.5h0M187.5 1008.5h0M188.5 1008.5h0M188.5 1008.5h0M189.5 1008.5h0M189.5 1008.5h0M189.5 1007.5h0M190.5 1008.5h0M190.5 1007.5h0M191.5 1007.5h0M191.5 1007.5h0M192.5 1008.5h0M192.5 1008.5h0M193.5 1007.5h0M193.5 1008.5h0M194.5 1008.5h0M194.5 1008.5h0M195.5 1007.5h0M195.5 1008.5h0M196.5 1007.5h0M196.5 1007.5h0M197.5 1007.5h0M197.5 1008.5h0M198.5 1007.5h0M198.5 1007.5h0M199.5 1008.5h0M199.5 1008.5h0M199.5 1007.5h0M200.5 1007.5h0M200.5 1007.5h0M201.5 1007.5h0M201.5 1007.5h0M202.5 1008.5h0M202.5 1007.5h0M203.5 1007.5h0M203.5 1007.5h0M204.5 1007.5h0M204.5 1007.5h0M205.5 1007.5h0M205.5 1007.5h0M206.5 1007.5h0M206.5 1007.5h0M207.5 1007.5h0M207.5 1007.5h0M208.5 1007.5h0M208.5 1008.5h0M208.5 1007.5h0M209.5 1007.5h0M209.5 1008.5h0M210.5 1008.5h0M210.5 1008.5h0M211.5 1008.5h0M211.5 1008.5h0M212.5 1008.5h0M212.5 1008.5h0M213.5 1008.5h0M213.5 1008.5h0M214.5 1008.5h0M214.5 1008.5h0M215.5 1008.5h0M215.5 1007.5h0M216.5 1008.5h0M216.5 1008.5h0M217.5 1008.5h0M217.5 1008.5h0M218.5 1007.5h0M218.5 1008.5h0M218.5 1008.5h0M219.5 1008.5h0M219.5 1008.5h0M220.5 1008.5h0M220.5 1008.5h0M221.5 1008.5h0M221.5 1008.5h0M222.5 1008.5h0M222.5 1008.5h0M223.5 1008.5h0M223.5 1008.5h0M224.5 1008.5h0M224.5 1008.5h0M225.5 1009.5h0M225.5 1008.5h0M226.5 1008.5h0M226.5 1008.5h0M227.5 1008.5h0M227.5 1008.5h0M228.5 1008.5h0M228.5 1008.5h0M228.5 1008.5h0M229.5 1008.5h0M229.5 1008.5h0M230.5 1008.5h0M230.5 1008.5h0M231.5 1007.5h0M231.5 1007.5h0M232.5 1007.5h0M232.5 1007.5h0M233.5 1007.5h0M233.5 1007.5h0M234.5 1007.5h0M234.5 1007.5h0M235.5 1007.5h0M235.5 1007.5h0M236.5 1007.5h0M236.5 1007.5h0M237.5 1007.5h0M237.5 1007.5h0M237.5 1007.5h0M238.5 1007.5h0M238.5 1008.5h0M239.5 1007.5h0M239.5 1007.5h0M240.5 1007.5h0M240.5 1007.5h0M241.5 1007.5h0M241.5 1007.5h0M242.5 1007.5h0M242.5 1007.5h0M243.5 1008.5h0M243.5 1006.5h0M244.5 1006.5h0M244.5 1007.5h0M245.5 1007.5h0M245.5 1007.5h0M246.5 1007.5h0M246.5 1007.5h0M247.5 1007.5h0M247.5 1007.5h0M247.5 1007.5h0M248.5 1007.5h0M248.5 1007.5h0M249.5 1008.5h0M249.5 1007.5h0M250.5 1007.5h0M250.5 1007.5h0M251.5 1007.5h0M251.5 1008.5h0M252.5 1007.5h0M252.5 1008.5h0M253.5 1007.5h0M253.5 1008.5h0M254.5 1008.5h0M254.5 1008.5h0M255.5 1007.5h0M255.5 1008.5h0M256.5 1008.5h0M256.5 1008.5h0M257.5 1007.5h0M257.5 1008.5h0M257.5 1007.5h0M258.5 1008.5h0M258.5 1007.5h0M259.5 1008.5h0M259.5 1008.5h0M260.5 1007.5h0M260.5 1007.5h0M261.5 1007.5h0M261.5 1007.5h0M262.5 1007.5h0M262.5 1008.5h0M263.5 1007.5h0M263.5 1007.5h0M264.5 1007.5h0M264.5 1007.5h0M265.5 1007.5h0M265.5 1007.5h0M266.5 1007.5h0M266.5 1007.5h0M266.5 1006.5h0M267.5 1007.5h0M267.5 1007.5h0M268.5 1007.5h0M268.5 1007.5h0M269.5 1007.5h0M269.5 1008.5h0M270.5 1007.5h0M270.5 1007.5h0M271.5 1008.5h0M271.5 1007.5h0M272.5 1007.5h0M272.5 1007.5h0M273.5 1007.5h0M273.5 1007.5h0M274.5 1007.5h0M274.5 1007.5h0M275.5 1007.5h0M275.5 1007.5h0M276.5 1007.5h0M276.5 1007.5h0M276.5 1007.5h0M277.5 1006.5h0M277.5 1007.5h0M278.5 1007.5h0M278.5 1007.5h0M279.5 1007.5h0M279.5 1007.5h0M280.5 1007.5h0M280.5 1007.5h0M281.5 1007.5h0M281.5 1007.5h0M282.5 1007.5h0M282.5 1008.5h0M283.5 1007.5h0M283.5 1008.5h0M284.5 1008.5h0M284.5 1008.5h0M285.5 1008.5h0M285.5 1008.5h0M286.5 1008.5h0M286.5 1008.5h0M286.5 1008.5h0M287.5 1008.5h0M287.5 1008.5h0M288.5 1008.5h0M288.5 1008.5h0M289.5 1008.5h0M289.5 1008.5h0M290.5 1008.5h0M290.5 1008.5h0M291.5 1008.5h0M291.5 1007.5h0M292.5 1007.5h0M292.5 1007.5h0M293.5 1008.5h0M293.5 1008.5h0M294.5 1008.5h0M294.5 1008.5h0M295.5 1008.5h0M295.5 1008.5h0M295.5 1008.5h0M296.5 1008.5h0M296.5 1008.5h0M297.5 1008.5h0M297.5 1008.5h0M298.5 1008.5h0M298.5 1008.5h0M299.5 1008.5h0M299.5 1008.5h0M300.5 1008.5h0M300.5 1008.5h0M301.5 1008.5h0M301.5 1008.5h0M302.5 1008.5h0M302.5 1008.5h0M303.5 1007.5h0M303.5 1007.5h0M304.5 1007.5h0M304.5 1007.5h0M305.5 1007.5h0M305.5 1007.5h0M305.5 1007.5h0M306.5 1007.5h0M306.5 1007.5h0M307.5 1007.5h0M307.5 1007.5h0M308.5 1007.5h0M308.5 1007.5h0M309.5 1007.5h0M309.5 1008.5h0M310.5 1007.5h0M310.5 1007.5h0M311.5 1007.5h0M311.5 1007.5h0M312.5 1008.5h0M312.5 1008.5h0M313.5 1008.5h0M313.5 1008.5h0M314.5 1008.5h0M314.5 1008.5h0M315.5 1008.5h0M315.5 1008.5h0M315.5 1008.5h0M316.5 1008.5h0M316.5 1008.5h0M317.5 1007.5h0M317.5 1007.5h0M318.5 1007.5h0M318.5 1008.5h0M319.5 1008.5h0M319.5 1008.5h0M320.5 1008.5h0M320.5 1007.5h0M321.5 1007.5h0M321.5 1008.5h0M322.5 1008.5h0M322.5 1007.5h0M323.5 1008.5h0M323.5 1008.5h0M324.5 1008.5h0M324.5 1008.5h0M324.5 1008.5h0M325.5 1008.5h0M325.5 1008.5h0M326.5 1008.5h0M326.5 1008.5h0M327.5 1008.5h0M327.5 1008.5h0M328.5 1008.5h0M328.5 1008.5h0M329.5 1008.5h0M329.5 1008.5h0M330.5 1008.5h0M330.5 1007.5h0M331.5 1007.5h0M331.5 1008.5h0M332.5 1007.5h0M332.5 1008.5h0M333.5 1007.5h0M333.5 1007.5h0M334.5 1007.5h0M334.5 1007.5h0M334.5 1007.5h0M335.5 1007.5h0M335.5 1007.5h0M336.5 1007.5h0M336.5 1007.5h0M337.5 1007.5h0M337.5 1007.5h0M338.5 1007.5h0M338.5 1007.5h0M339.5 1006.5h0M339.5 1007.5h0M340.5 1007.5h0M340.5 1007.5h0M341.5 1007.5h0M341.5 1007.5h0M342.5 1007.5h0M342.5 1007.5h0M343.5 1007.5h0M343.5 1007.5h0M344.5 1007.5h0M344.5 1006.5h0M344.5 1007.5h0M345.5 1007.5h0M345.5 1007.5h0M346.5 1006.5h0M346.5 1007.5h0M347.5 1007.5h0M347.5 1006.5h0M348.5 1007.5h0M348.5 1007.5h0M349.5 1007.5h0M349.5 1007.5h0M350.5 1007.5h0M350.5 1007.5h0M351.5 1006.5h0M351.5 1007.5h0M352.5 1007.5h0M352.5 1007.5h0M353.5 1007.5h0M353.5 1007.5h0M353.5 1007.5h0M354.5 1007.5h0M354.5 1008.5h0M355.5 1008.5h0M355.5 1007.5h0M356.5 1008.5h0M356.5 1008.5h0M357.5 1008.5h0M357.5 1008.5h0M358.5 1008.5h0M358.5 1007.5h0M359.5 1008.5h0M359.5 1007.5h0M360.5 1007.5h0M360.5 1007.5h0M361.5 1008.5h0M361.5 1008.5h0M362.5 1007.5h0M362.5 1007.5h0M363.5 1007.5h0M363.5 1007.5h0M363.5 1007.5h0M364.5 1007.5h0M364.5 1007.5h0M365.5 1007.5h0M365.5 1007.5h0M366.5 1007.5h0M366.5 1007.5h0M367.5 1007.5h0M367.5 1007.5h0M368.5 1008.5h0M368.5 1007.5h0M369.5 1007.5h0M369.5 1008.5h0M370.5 1007.5h0M370.5 1007.5h0M371.5 1007.5h0M371.5 1007.5h0M372.5 1007.5h0M372.5 1008.5h0M373.5 1007.5h0M373.5 1007.5h0M373.5 1007.5h0M374.5 1007.5h0M374.5 1007.5h0M375.5 1007.5h0M375.5 1007.5h0M376.5 1007.5h0M376.5 1007.5h0M377.5 1007.5h0M377.5 1007.5h0M378.5 1007.5h0M378.5 1007.5h0M379.5 1006.5h0M379.5 1007.5h0M380.5 1007.5h0M380.5 1007.5h0M381.5 1007.5h0M381.5 1007.5h0M382.5 1007.5h0M382.5 1007.5h0M382.5 1008.5h0M383.5 1007.5h0M383.5 1008.5h0M384.5 1007.5h0M384.5 1008.5h0M385.5 1008.5h0M385.5 1008.5h0M386.5 1008.5h0M386.5 1008.5h0M387.5 1008.5h0M387.5 1008.5h0M388.5 1008.5h0M388.5 1008.5h0M389.5 1008.5h0M389.5 1008.5h0M390.5 1008.5h0M390.5 1008.5h0M391.5 1008.5h0M391.5 1008.5h0M392.5 1008.5h0M392.5 1008.5h0M392.5 1008.5h0M393.5 1007.5h0M393.5 1007.5h0M394.5 1008.5h0M394.5 1008.5h0M395.5 1008.5h0M395.5 1008.5h0M396.5 1008.5h0M396.5 1008.5h0M397.5 1008.5h0M397.5 1008.5h0M398.5 1008.5h0M398.5 1008.5h0M399.5 1008.5h0M399.5 1008.5h0M400.5 1008.5h0M400.5 1008.5h0M401.5 1008.5h0M401.5 1008.5h0M402.5 1008.5h0M402.5 1008.5h0M402.5 1008.5h0M403.5 1007.5h0M403.5 1008.5h0M404.5 1008.5h0M404.5 1007.5h0M405.5 1007.5h0M405.5 1007.5h0M406.5 1007.5h0M406.5 1007.5h0M407.5 1007.5h0M407.5 1007.5h0M408.5 1007.5h0M408.5 1007.5h0M409.5 1007.5h0M409.5 1007.5h0M410.5 1007.5h0M410.5 1007.5h0M411.5 1007.5h0M411.5 1007.5h0M411.5 1008.5h0M412.5 1008.5h0M412.5 1008.5h0M413.5 1007.5h0M413.5 1008.5h0M414.5 1008.5h0M414.5 1007.5h0M415.5 1008.5h0M415.5 1007.5h0M416.5 1007.5h0M416.5 1007.5h0M417.5 1008.5h0M417.5 1007.5h0M418.5 1008.5h0M418.5 1008.5h0M419.5 1007.5h0M419.5 1007.5h0M420.5 1007.5h0M420.5 1008.5h0M421.5 1007.5h0M421.5 1007.5h0M421.5 1007.5h0M422.5 1007.5h0M422.5 1007.5h0M423.5 1008.5h0M423.5 1007.5h0M424.5 1008.5h0M424.5 1008.5h0M425.5 1007.5h0M425.5 1008.5h0M426.5 1008.5h0M426.5 1008.5h0M427.5 1008.5h0M427.5 1008.5h0M428.5 1008.5h0M428.5 1008.5h0M429.5 1008.5h0M429.5 1008.5h0M430.5 1007.5h0M430.5 1008.5h0M431.5 1008.5h0M431.5 1007.5h0M431.5 1008.5h0M432.5 1007.5h0M432.5 1007.5h0M433.5 1007.5h0M433.5 1007.5h0M434.5 1007.5h0M434.5 1007.5h0M435.5 1007.5h0M435.5 1007.5h0M436.5 1007.5h0M436.5 1007.5h0M437.5 1007.5h0M437.5 1007.5h0M438.5 1007.5h0M438.5 1007.5h0M439.5 1007.5h0M439.5 1007.5h0M440.5 1008.5h0M440.5 1007.5h0M440.5 1007.5h0M441.5 1007.5h0M441.5 1007.5h0M442.5 1007.5h0M442.5 1007.5h0M443.5 1007.5h0M443.5 1007.5h0M444.5 1007.5h0M444.5 1007.5h0M445.5 1007.5h0M445.5 1007.5h0M446.5 1007.5h0M446.5 1007.5h0M447.5 1007.5h0M447.5 1006.5h0M448.5 1007.5h0M448.5 1007.5h0M449.5 1006.5h0M449.5 1007.5h0M450.5 1007.5h0M450.5 1007.5h0M450.5 1007.5h0M451.5 1007.5h0M451.5 1007.5h0M452.5 1007.5h0M452.5 1007.5h0M453.5 1007.5h0M453.5 1007.5h0M454.5 1007.5h0M454.5 1007.5h0M455.5 1008.5h0M455.5 1008.5h0M456.5 1008.5h0M456.5 1007.5h0M457.5 1008.5h0M457.5 1008.5h0M458.5 1008.5h0M458.5 1007.5h0M459.5 1008.5h0M459.5 1008.5h0M460.5 1008.5h0M460.5 1008.5h0M460.5 1008.5h0M461.5 1007.5h0M461.5 1007.5h0M462.5 1007.5h0M462.5 1008.5h0M463.5 1007.5h0M463.5 1008.5h0M464.5 1008.5h0M464.5 1007.5h0M465.5 1007.5h0M465.5 1008.5h0M466.5 1007.5h0M466.5 1007.5h0M467.5 1008.5h0M467.5 1008.5h0M468.5 1007.5h0M468.5 1008.5h0M469.5 1008.5h0M469.5 1008.5h0M469.5 1008.5h0M470.5 1008.5h0M470.5 1008.5h0M471.5 1008.5h0M471.5 1008.5h0M472.5 1007.5h0M472.5 1007.5h0M473.5 1008.5h0M473.5 1008.5h0M474.5 1007.5h0M474.5 1007.5h0M475.5 1007.5h0M475.5 1007.5h0M476.5 1007.5h0M476.5 1007.5h0M477.5 1007.5h0M477.5 1007.5h0M478.5 1007.5h0M478.5 1007.5h0M479.5 1007.5h0M479.5 1007.5h0M479.5 1007.5h0M480.5 1007.5h0M480.5 1007.5h0M481.5 1007.5h0M481.5 1007.5h0M482.5 1007.5h0M482.5 1007.5h0M483.5 1008.5h0M483.5 1008.5h0M484.5 1007.5h0M484.5 1007.5h0M485.5 1008.5h0M485.5 1007.5h0M486.5 1008.5h0M486.5 1008.5h0M487.5 1008.5h0M487.5 1008.5h0M488.5 1008.5h0M488.5 1008.5h0M489.5 1008.5h0M489.5 1008.5h0M489.5 1008.5h0M490.5 1008.5h0M490.5 1008.5h0M491.5 1008.5h0M491.5 1007.5h0M492.5 1008.5h0M492.5 1008.5h0M493.5 1008.5h0M493.5 1008.5h0M494.5 1008.5h0M494.5 1008.5h0M495.5 1008.5h0M495.5 1008.5h0M496.5 1008.5h0M496.5 1008.5h0M497.5 1008.5h0M497.5 1008.5h0M498.5 1008.5h0M498.5 1008.5h0M498.5 1008.5h0M499.5 1008.5h0M499.5 1008.5h0M500.5 1008.5h0M500.5 1008.5h0M501.5 1008.5h0M501.5 1008.5h0M502.5 1008.5h0M502.5 1008.5h0M503.5 1008.5h0M503.5 1008.5h0M504.5 1008.5h0M504.5 1008.5h0M505.5 1007.5h0M505.5 1008.5h0M506.5 1007.5h0M506.5 1007.5h0M507.5 1007.5h0M507.5 1006.5h0M508.5 1007.5h0M508.5 1007.5h0M508.5 1007.5h0M509.5 1007.5h0M509.5 1007.5h0M510.5 1007.5h0M510.5 1007.5h0M511.5 1007.5h0M511.5 1007.5h0M512.5 1007.5h0M512.5 1007.5h0M513.5 1007.5h0M513.5 1007.5h0M514.5 1007.5h0M514.5 1008.5h0M515.5 1007.5h0M515.5 1007.5h0M516.5 1007.5h0M516.5 1007.5h0M517.5 1007.5h0M517.5 1007.5h0M518.5 1007.5h0M518.5 1007.5h0M518.5 1007.5h0M519.5 1007.5h0M519.5 1007.5h0M520.5 1007.5h0M520.5 1007.5h0M521.5 1007.5h0M521.5 1007.5h0M522.5 1007.5h0M522.5 1007.5h0M523.5 1007.5h0M523.5 1007.5h0M524.5 1007.5h0M524.5 1007.5h0M525.5 1007.5h0M525.5 1007.5h0M526.5 1007.5h0M526.5 1007.5h0M527.5 1007.5h0M527.5 1007.5h0M527.5 1008.5h0M528.5 1008.5h0M528.5 1008.5h0M529.5 1008.5h0M529.5 1008.5h0M530.5 1007.5h0M530.5 1008.5h0M531.5 1008.5h0M531.5 1008.5h0M532.5 1007.5h0M532.5 1008.5h0M533.5 1007.5h0M533.5 1007.5h0M534.5 1007.5h0M534.5 1007.5h0M535.5 1008.5h0M535.5 1007.5h0M536.5 1008.5h0M536.5 1007.5h0M537.5 1007.5h0M537.5 1007.5h0M537.5 1007.5h0M538.5 1007.5h0M538.5 1007.5h0M539.5 1007.5h0M539.5 1007.5h0M540.5 1007.5h0M540.5 1007.5h0M541.5 1007.5h0M541.5 1007.5h0M542.5 1007.5h0M542.5 1007.5h0M543.5 1007.5h0M543.5 1007.5h0M544.5 1007.5h0M544.5 1007.5h0M545.5 1007.5h0M545.5 1007.5h0M546.5 1007.5h0M546.5 1007.5h0M547.5 1007.5h0M547.5 1007.5h0M547.5 1007.5h0M548.5 1007.5h0M548.5 1007.5h0M549.5 1007.5h0M549.5 1007.5h0M550.5 1007.5h0M550.5 1007.5h0M551.5 1007.5h0M551.5 1006.5h0M552.5 1007.5h0M552.5 1007.5h0M553.5 1007.5h0M553.5 1007.5h0M554.5 1007.5h0M554.5 1007.5h0M555.5 1007.5h0M555.5 1007.5h0M556.5 1007.5h0M556.5 1007.5h0M556.5 1008.5h0M557.5 1008.5h0M557.5 1007.5h0M558.5 1008.5h0M558.5 1008.5h0M559.5 1008.5h0M559.5 1008.5h0M560.5 1008.5h0M560.5 1008.5h0M561.5 1008.5h0M561.5 1008.5h0M562.5 1008.5h0M562.5 1008.5h0M563.5 1007.5h0M563.5 1008.5h0M564.5 1007.5h0M564.5 1008.5h0M565.5 1008.5h0M565.5 1008.5h0M566.5 1008.5h0M566.5 1008.5h0M566.5 1008.5h0M567.5 1007.5h0M567.5 1007.5h0M568.5 1007.5h0M568.5 1008.5h0M569.5 1008.5h0M569.5 1008.5h0M570.5 1008.5h0M570.5 1008.5h0M571.5 1008.5h0M571.5 1008.5h0M572.5 1008.5h0M572.5 1008.5h0M573.5 1009.5h0M573.5 1008.5h0M574.5 1008.5h0M574.5 1008.5h0M575.5 1008.5h0M575.5 1008.5h0M576.5 1008.5h0M576.5 1008.5h0M576.5 1008.5h0M577.5 1007.5h0M577.5 1007.5h0M578.5 1007.5h0M578.5 1007.5h0M579.5 1007.5h0M579.5 1007.5h0M580.5 1008.5h0M580.5 1007.5h0M581.5 1007.5h0M581.5 1007.5h0M582.5 1007.5h0M582.5 1008.5h0M583.5 1008.5h0M583.5 1007.5h0M584.5 1007.5h0M584.5 1007.5h0M585.5 1008.5h0M585.5 1007.5h0M585.5 1008.5h0M586.5 1008.5h0M586.5 1008.5h0M587.5 1008.5h0M587.5 1008.5h0M588.5 1007.5h0M588.5 1008.5h0M589.5 1008.5h0M589.5 1007.5h0M590.5 1008.5h0M590.5 1008.5h0M591.5 1008.5h0M591.5 1008.5h0M592.5 1008.5h0M592.5 1008.5h0M593.5 1008.5h0M593.5 1008.5h0M594.5 1007.5h0M594.5 1007.5h0M595.5 1007.5h0M595.5 1007.5h0M595.5 1008.5h0M596.5 1007.5h0M596.5 1008.5h0M597.5 1008.5h0M597.5 1008.5h0M598.5 1008.5h0M598.5 1008.5h0M599.5 1008.5h0M599.5 1008.5h0M600.5 1008.5h0M600.5 1008.5h0M601.5 1008.5h0M601.5 1008.5h0M602.5 1008.5h0M602.5 1008.5h0M603.5 1008.5h0M603.5 1007.5h0M604.5 1008.5h0M604.5 1008.5h0M605.5 1008.5h0M605.5 1007.5h0M605.5 1007.5h0M606.5 1007.5h0M606.5 1007.5h0M607.5 1007.5h0M607.5 1007.5h0M608.5 1007.5h0M608.5 1007.5h0M609.5 1008.5h0M609.5 1007.5h0M610.5 1007.5h0M610.5 1007.5h0M611.5 1007.5h0M611.5 1007.5h0M612.5 1007.5h0M612.5 1007.5h0M613.5 1006.5h0M613.5 1006.5h0M614.5 1007.5h0M614.5 1007.5h0M614.5 1007.5h0M615.5 1007.5h0M615.5 1007.5h0M616.5 1007.5h0M616.5 1007.5h0M617.5 1007.5h0M617.5 1007.5h0M618.5 1007.5h0M618.5 1007.5h0M619.5 1007.5h0M619.5 1007.5h0M620.5 1007.5h0M620.5 1007.5h0M621.5 1007.5h0M621.5 1007.5h0M622.5 1007.5h0M622.5 1007.5h0M623.5 1007.5h0M623.5 1007.5h0M624.5 1007.5h0M624.5 1006.5h0M624.5 1007.5h0M625.5 1007.5h0M625.5 1007.5h0M626.5 1007.5h0M626.5 1007.5h0M627.5 1007.5h0M627.5 1007.5h0M628.5 1007.5h0M628.5 1007.5h0M629.5 1007.5h0M629.5 1008.5h0M630.5 1008.5h0M630.5 1008.5h0M631.5 1007.5h0M631.5 1007.5h0M632.5 1007.5h0M632.5 1008.5h0M633.5 1007.5h0M633.5 1007.5h0M634.5 1007.5h0M634.5 1008.5h0M634.5 1008.5h0M635.5 1007.5h0M635.5 1007.5h0M636.5 1008.5h0M636.5 1007.5h0M637.5 1007.5h0M637.5 1007.5h0M638.5 1007.5h0M638.5 1007.5h0M639.5 1007.5h0M639.5 1007.5h0M640.5 1007.5h0M640.5 1007.5h0M641.5 1007.5h0M641.5 1007.5h0M642.5 1008.5h0M642.5 1007.5h0M643.5 1007.5h0M643.5 1007.5h0M643.5 1007.5h0M644.5 1007.5h0M644.5 1007.5h0M645.5 1007.5h0M645.5 1007.5h0M646.5 1007.5h0M646.5 1008.5h0M647.5 1007.5h0M647.5 1008.5h0M648.5 1007.5h0M648.5 1007.5h0M649.5 1007.5h0M649.5 1007.5h0M650.5 1007.5h0M650.5 1007.5h0M651.5 1007.5h0M651.5 1007.5h0M652.5 1007.5h0M652.5 1007.5h0M653.5 1007.5h0M653.5 1007.5h0M653.5 1007.5h0M654.5 1007.5h0M654.5 1007.5h0M655.5 1007.5h0M655.5 1007.5h0M656.5 1008.5h0M656.5 1008.5h0M657.5 1007.5h0M657.5 1008.5h0M658.5 1008.5h0M658.5 1008.5h0M659.5 1007.5h0M659.5 1008.5h0M660.5 1008.5h0M660.5 1008.5h0M661.5 1008.5h0M661.5 1008.5h0M662.5 1008.5h0M662.5 1008.5h0M663.5 1008.5h0M663.5 1008.5h0M663.5 1008.5h0M664.5 1007.5h0M664.5 1008.5h0M665.5 1008.5h0M665.5 1008.5h0M666.5 1008.5h0M666.5 1007.5h0M667.5 1008.5h0M667.5 1008.5h0M668.5 1008.5h0M668.5 1008.5h0M669.5 1007.5h0M669.5 1008.5h0M670.5 1008.5h0M670.5 1007.5h0M671.5 1008.5h0M671.5 1008.5h0M672.5 1008.5h0M672.5 1008.5h0M672.5 1008.5h0M673.5 1008.5h0M673.5 1008.5h0M674.5 1009.5h0M674.5 1008.5h0M675.5 1008.5h0M675.5 1008.5h0M676.5 1008.5h0M676.5 1007.5h0M677.5 1008.5h0M677.5 1008.5h0M678.5 1008.5h0M678.5 1007.5h0M679.5 1008.5h0M679.5 1007.5h0M680.5 1007.5h0M680.5 1007.5h0M681.5 1007.5h0M681.5 1007.5h0M682.5 1007.5h0M682.5 1007.5h0M682.5 1007.5h0M683.5 1007.5h0M683.5 1007.5h0M684.5 1008.5h0M684.5 1007.5h0M685.5 1007.5h0M685.5 1007.5h0M686.5 1007.5h0M686.5 1007.5h0M687.5 1008.5h0M687.5 1007.5h0M688.5 1007.5h0M688.5 1008.5h0M689.5 1007.5h0M689.5 1007.5h0M690.5 1007.5h0M690.5 1008.5h0M691.5 1007.5h0M691.5 1007.5h0M692.5 1007.5h0M692.5 1007.5h0M692.5 1007.5h0M693.5 1007.5h0M693.5 1007.5h0M694.5 1008.5h0M694.5 1007.5h0M695.5 1006.5h0M695.5 1007.5h0M696.5 1007.5h0M696.5 1007.5h0M697.5 1007.5h0M697.5 1007.5h0M698.5 1007.5h0M698.5 1007.5h0M699.5 1007.5h0M699.5 1007.5h0M700.5 1007.5h0M700.5 1008.5h0M701.5 1008.5h0M701.5 1007.5h0M701.5 1008.5h0M702.5 1007.5h0M702.5 1008.5h0M703.5 1008.5h0M703.5 1008.5h0M704.5 1008.5h0M704.5 1007.5h0M705.5 1008.5h0M705.5 1008.5h0M706.5 1008.5h0M706.5 1007.5h0M707.5 1007.5h0M707.5 1008.5h0M708.5 1007.5h0M708.5 1007.5h0M709.5 1007.5h0M709.5 1007.5h0M710.5 1007.5h0M710.5 1007.5h0M711.5 1007.5h0M711.5 1007.5h0M711.5 1007.5h0M712.5 1007.5h0M712.5 1006.5h0M713.5 1007.5h0M713.5 1007.5h0M714.5 1007.5h0M714.5 1007.5h0M715.5 1007.5h0M715.5 1007.5h0M716.5 1007.5h0M716.5 1007.5h0M717.5 1007.5h0M717.5 1007.5h0M718.5 1007.5h0M718.5 1007.5h0M719.5 1007.5h0M719.5 1007.5h0M720.5 1007.5h0M720.5 1007.5h0M721.5 1006.5h0M721.5 1006.5h0M721.5 1007.5h0M722.5 1006.5h0M722.5 1007.5h0M723.5 1007.5h0M723.5 1006.5h0M724.5 1007.5h0M724.5 1007.5h0M725.5 1007.5h0M725.5 1007.5h0M726.5 1006.5h0M726.5 1007.5h0M727.5 1007.5h0M727.5 1007.5h0M728.5 1007.5h0M728.5 1007.5h0M729.5 1007.5h0M729.5 1007.5h0M730.5 1007.5h0M730.5 1007.5h0M730.5 1008.5h0M731.5 1007.5h0M731.5 1008.5h0M732.5 1008.5h0M732.5 1008.5h0M733.5 1008.5h0M733.5 1008.5h0M734.5 1007.5h0M734.5 1008.5h0M735.5 1008.5h0M735.5 1008.5h0M736.5 1008.5h0M736.5 1008.5h0M737.5 1007.5h0M737.5 1008.5h0M738.5 1008.5h0M738.5 1007.5h0M739.5 1007.5h0M739.5 1008.5h0M740.5 1008.5h0M740.5 1008.5h0M740.5 1007.5h0M741.5 1008.5h0M741.5 1007.5h0M742.5 1008.5h0M742.5 1007.5h0M743.5 1008.5h0M743.5 1008.5h0M744.5 1007.5h0M744.5 1008.5h0M745.5 1007.5h0M745.5 1007.5h0M746.5 1008.5h0M746.5 1008.5h0M747.5 1008.5h0M747.5 1008.5h0M748.5 1008.5h0M748.5 1008.5h0M749.5 1008.5h0M749.5 1007.5h0M750.5 1008.5h0M750.5 1007.5h0M750.5 1007.5h0M751.5 1007.5h0M751.5 1008.5h0M752.5 1007.5h0M752.5 1007.5h0M753.5 1007.5h0M753.5 1007.5h0M754.5 1007.5h0M754.5 1007.5h0M755.5 1007.5h0M755.5 1008.5h0M756.5 1007.5h0M756.5 1007.5h0M757.5 1007.5h0M757.5 1008.5h0M758.5 1007.5h0M758.5 1008.5h0M759.5 1007.5h0M759.5 1008.5h0M759.5 1008.5h0M760.5 1008.5h0M760.5 1007.5h0M761.5 1008.5h0M761.5 1008.5h0M762.5 1008.5h0M762.5 1008.5h0M763.5 1008.5h0M763.5 1008.5h0M764.5 1008.5h0M764.5 1008.5h0M765.5 1007.5h0M765.5 1008.5h0M766.5 1008.5h0M766.5 1008.5h0M767.5 1008.5h0M767.5 1008.5h0M768.5 1008.5h0M768.5 1008.5h0M769.5 1008.5h0M769.5 1007.5h0M769.5 1008.5h0M770.5 1008.5h0M770.5 1008.5h0M771.5 1008.5h0M771.5 1008.5h0M772.5 1008.5h0M772.5 1008.5h0M773.5 1008.5h0M773.5 1008.5h0M774.5 1008.5h0M774.5 1008.5h0M775.5 1008.5h0M775.5 1008.5h0M776.5 1008.5h0M776.5 1008.5h0M777.5 1008.5h0M777.5 1008.5h0M778.5 1008.5h0M778.5 1008.5h0M779.5 1008.5h0M779.5 1008.5h0M779.5 1008.5h0M780.5 1008.5h0M780.5 1007.5h0M781.5 1007.5h0M781.5 1007.5h0M782.5 1007.5h0M782.5 1007.5h0M783.5 1007.5h0M783.5 1006.5h0M784.5 1007.5h0M784.5 1007.5h0M785.5 1007.5h0M785.5 1007.5h0M786.5 1007.5h0M786.5 1007.5h0M787.5 1007.5h0M787.5 1007.5h0M788.5 1007.5h0M788.5 1007.5h0M788.5 1007.5h0M789.5 1007.5h0M789.5 1007.5h0M790.5 1007.5h0M790.5 1007.5h0M791.5 1007.5h0M791.5 1007.5h0M792.5 1007.5h0M792.5 1007.5h0M793.5 1007.5h0M793.5 1007.5h0M794.5 1007.5h0M794.5 1007.5h0M795.5 1007.5h0M795.5 1007.5h0M796.5 1007.5h0M796.5 1007.5h0M797.5 1007.5h0M797.5 1007.5h0M798.5 1007.5h0M798.5 1007.5h0M798.5 1007.5h0M799.5 1007.5h0M799.5 1007.5h0M800.5 1008.5h0M800.5 1008.5h0M801.5 1008.5h0M801.5 1007.5h0M802.5 1008.5h0M802.5 1008.5h0M803.5 1008.5h0M803.5 1007.5h0M804.5 1008.5h0M804.5 1008.5h0M805.5 1008.5h0M805.5 1008.5h0M806.5 1008.5h0M806.5 1008.5h0M807.5 1007.5h0M807.5 1007.5h0M808.5 1007.5h0M808.5 1008.5h0M808.5 1007.5h0M809.5 1007.5h0M809.5 1007.5h0M810.5 1007.5h0M810.5 1008.5h0M811.5 1007.5h0M811.5 1007.5h0M812.5 1007.5h0M812.5 1007.5h0M813.5 1007.5h0M813.5 1007.5h0M814.5 1007.5h0M814.5 1007.5h0M815.5 1006.5h0M815.5 1007.5h0M816.5 1007.5h0M816.5 1007.5h0M817.5 1007.5h0M817.5 1007.5h0M817.5 1007.5h0M818.5 1007.5h0M818.5 1007.5h0M819.5 1007.5h0M819.5 1007.5h0M820.5 1007.5h0M820.5 1007.5h0M821.5 1007.5h0M821.5 1007.5h0M822.5 1007.5h0M822.5 1007.5h0M823.5 1007.5h0M823.5 1006.5h0M824.5 1006.5h0M824.5 1006.5h0M825.5 1007.5h0M825.5 1007.5h0M826.5 1007.5h0M826.5 1007.5h0M827.5 1007.5h0M827.5 1007.5h0M827.5 1007.5h0M828.5 1007.5h0M828.5 1007.5h0M829.5 1007.5h0M829.5 1007.5h0M830.5 1007.5h0M830.5 1007.5h0M831.5 1007.5h0M831.5 1007.5h0M832.5 1008.5h0M832.5 1008.5h0M833.5 1008.5h0M833.5 1008.5h0M834.5 1008.5h0M834.5 1009.5h0M835.5 1008.5h0M835.5 1008.5h0M836.5 1008.5h0M836.5 1008.5h0M837.5 1008.5h0M837.5 1008.5h0M837.5 1008.5h0M838.5 1008.5h0M838.5 1008.5h0M839.5 1008.5h0M839.5 1008.5h0M840.5 1008.5h0M840.5 1008.5h0M841.5 1008.5h0M841.5 1007.5h0M842.5 1008.5h0M842.5 1008.5h0M843.5 1008.5h0M843.5 1008.5h0M844.5 1008.5h0M844.5 1007.5h0M845.5 1008.5h0M845.5 1008.5h0M846.5 1008.5h0M846.5 1008.5h0M846.5 1008.5h0M847.5 1008.5h0M847.5 1008.5h0M848.5 1008.5h0M848.5 1008.5h0M849.5 1007.5h0M849.5 1008.5h0M850.5 1008.5h0M850.5 1008.5h0M851.5 1007.5h0M851.5 1007.5h0M852.5 1007.5h0M852.5 1007.5h0M853.5 1007.5h0M853.5 1007.5h0M854.5 1007.5h0M854.5 1007.5h0M855.5 1007.5h0M855.5 1007.5h0M856.5 1007.5h0M856.5 1007.5h0M856.5 1007.5h0M857.5 1007.5h0M857.5 1007.5h0M858.5 1007.5h0M858.5 1007.5h0M859.5 1007.5h0M859.5 1007.5h0M860.5 1008.5h0M860.5 1007.5h0M861.5 1007.5h0M861.5 1007.5h0M862.5 1008.5h0M862.5 1007.5h0M863.5 1008.5h0M863.5 1008.5h0M864.5 1008.5h0M864.5 1008.5h0M865.5 1008.5h0M865.5 1008.5h0M866.5 1008.5h0M866.5 1007.5h0M866.5 1007.5h0M867.5 1007.5h0M867.5 1007.5h0M868.5 1007.5h0M868.5 1008.5h0M869.5 1007.5h0M869.5 1007.5h0M870.5 1007.5h0M870.5 1007.5h0M871.5 1007.5h0M871.5 1008.5h0M872.5 1008.5h0M872.5 1008.5h0M873.5 1007.5h0M873.5 1008.5h0M874.5 1008.5h0M874.5 1008.5h0M875.5 1007.5h0M875.5 1008.5h0M875.5 1008.5h0M876.5 1008.5h0M876.5 1008.5h0M877.5 1008.5h0M877.5 1007.5h0M878.5 1007.5h0M878.5 1008.5h0M879.5 1008.5h0M879.5 1007.5h0M880.5 1008.5h0M880.5 1007.5h0M881.5 1007.5h0M881.5 1007.5h0M882.5 1007.5h0M882.5 1007.5h0M883.5 1007.5h0M883.5 1007.5h0M884.5 1007.5h0M884.5 1007.5h0M885.5 1007.5h0M885.5 1007.5h0M885.5 1007.5h0M886.5 1007.5h0M886.5 1007.5h0M887.5 1007.5h0M887.5 1007.5h0M888.5 1006.5h0M888.5 1007.5h0M889.5 1007.5h0M889.5 1007.5h0M890.5 1007.5h0M890.5 1007.5h0M891.5 1007.5h0M891.5 1007.5h0M892.5 1006.5h0M892.5 1008.5h0M893.5 1007.5h0M893.5 1007.5h0M894.5 1007.5h0M894.5 1007.5h0M895.5 1007.5h0M895.5 1007.5h0M895.5 1007.5h0M896.5 1007.5h0M896.5 1007.5h0M897.5 1006.5h0M897.5 1007.5h0M898.5 1007.5h0M898.5 1007.5h0M899.5 1007.5h0M899.5 1007.5h0M900.5 1007.5h0M900.5 1007.5h0M901.5 1007.5h0M901.5 1007.5h0M902.5 1007.5h0M902.5 1008.5h0M903.5 1007.5h0M903.5 1007.5h0M904.5 1008.5h0M904.5 1007.5h0M904.5 1008.5h0M905.5 1007.5h0M905.5 1007.5h0M906.5 1007.5h0M906.5 1008.5h0M907.5 1008.5h0M907.5 1008.5h0M908.5 1008.5h0M908.5 1008.5h0M909.5 1008.5h0M909.5 1008.5h0M910.5 1007.5h0M910.5 1007.5h0M911.5 1008.5h0M911.5 1007.5h0M912.5 1007.5h0M912.5 1007.5h0M913.5 1008.5h0M913.5 1007.5h0M914.5 1007.5h0M914.5 1007.5h0M914.5 1007.5h0M915.5 1007.5h0M915.5 1007.5h0M916.5 1007.5h0M916.5 1007.5h0M917.5 1008.5h0M917.5 1007.5h0M918.5 1008.5h0M918.5 1007.5h0M919.5 1007.5h0M919.5 1007.5h0M920.5 1007.5h0M920.5 1007.5h0M921.5 1007.5h0M921.5 1007.5h0M922.5 1007.5h0M922.5 1007.5h0M923.5 1007.5h0M923.5 1007.5h0M924.5 1007.5h0M924.5 1007.5h0M924.5 1007.5h0M925.5 1007.5h0M925.5 1007.5h0M926.5 1007.5h0M926.5 1007.5h0M927.5 1007.5h0M927.5 1007.5h0M928.5 1007.5h0M928.5 1007.5h0M929.5 1007.5h0M929.5 1007.5h0M930.5 1008.5h0M930.5 1007.5h0M931.5 1007.5h0M931.5 1008.5h0M932.5 1008.5h0M932.5 1007.5h0M933.5 1008.5h0M933.5 1008.5h0M933.5 1008.5h0M934.5 1008.5h0M934.5 1008.5h0M935.5 1008.5h0M935.5 1008.5h0M936.5 1008.5h0M936.5 1008.5h0M937.5 1008.5h0M937.5 1008.5h0M938.5 1008.5h0M938.5 1007.5h0M939.5 1007.5h0M939.5 1008.5h0M940.5 1008.5h0M940.5 1008.5h0M941.5 1008.5h0M941.5 1008.5h0M942.5 1008.5h0M942.5 1008.5h0M943.5 1008.5h0M943.5 1008.5h0M943.5 1007.5h0M944.5 1008.5h0M944.5 1007.5h0M945.5 1007.5h0M945.5 1008.5h0M946.5 1008.5h0M946.5 1008.5h0M947.5 1008.5h0M947.5 1009.5h0M948.5 1008.5h0M948.5 1008.5h0M949.5 1007.5h0M949.5 1008.5h0M950.5 1008.5h0M950.5 1008.5h0M951.5 1008.5h0M951.5 1008.5h0M952.5 1008.5h0M952.5 1008.5h0M953.5 1008.5h0M953.5 1007.5h0M953.5 1007.5h0M954.5 1008.5h0M954.5 1007.5h0M955.5 1007.5h0M955.5 1008.5h0M956.5 1007.5h0M956.5 1008.5h0M957.5 1007.5h0M957.5 1007.5h0M958.5 1007.5h0M958.5 1007.5h0M959.5 1007.5h0M959.5 1007.5h0M960.5 1007.5h0M960.5 1007.5h0M961.5 1007.5h0M961.5 1008.5h0M962.5 1007.5h0M962.5 1007.5h0M962.5 1007.5h0M963.5 1008.5h0M963.5 1008.5h0M964.5 1007.5h0M964.5 1007.5h0M965.5 1007.5h0M965.5 1007.5h0M966.5 1007.5h0M966.5 1007.5h0M967.5 1007.5h0M967.5 1008.5h0M968.5 1007.5h0M968.5 1007.5h0M969.5 1007.5h0M969.5 1008.5h0M970.5 1007.5h0M970.5 1007.5h0M971.5 1007.5h0M971.5 1007.5h0M972.5 1007.5h0M972.5 1007.5h0M972.5 1008.5h0M973.5 1007.5h0M973.5 1008.5h0M974.5 1007.5h0M974.5 1007.5h0M975.5 1008.5h0M975.5 1007.5h0M976.5 1008.5h0M976.5 1008.5h0M977.5 1007.5h0M977.5 1008.5h0M978.5 1008.5h0M978.5 1008.5h0M979.5 1008.5h0M979.5 1007.5h0M980.5 1008.5h0M980.5 1007.5h0M981.5 1008.5h0M981.5 1007.5h0M982.5 1008.5h0M982.5 1007.5h0M982.5 1007.5h0M983.5 1007.5h0M983.5 1007.5h0M984.5 1007.5h0M984.5 1007.5h0M985.5 1006.5h0M985.5 1007.5h0M986.5 1007.5h0M986.5 1007.5h0M987.5 1007.5h0M987.5 1007.5h0M988.5 1007.5h0M988.5 1007.5h0M989.5 1007.5h0M989.5 1007.5h0M990.5 1007.5h0M990.5 1007.5h0M991.5 1007.5h0M991.5 1007.5h0M991.5 1007.5h0M992.5 1007.5h0M992.5 1007.5h0M993.5 1007.5h0M993.5 1007.5h0M994.5 1007.5h0M994.5 1007.5h0M995.5 1006.5h0M995.5 1007.5h0M996.5 1007.5h0M996.5 1007.5h0M997.5 1007.5h0M997.5 1007.5h0M998.5 1006.5h0M998.5 1007.5h0M999.5 1007.5h0M999.5 1007.5h0M1000.5 1007.5h0M1000.5 1007.5h0M1001.5 1007.5h0M1001.5 1007.5h0M1001.5 1007.5h0M1002.5 1007.5h0M1002.5 1007.5h0M1003.5 1006.5h0M1003.5 1007.5h0M1004.5 1007.5h0M1004.5 1007.5h0M1005.5 1008.5h0M1005.5 1007.5h0M1006.5 1008.5h0M1006.5 1008.5h0M1007.5 1008.5h0M1007.5 1008.5h0M1008.5 1008.5h0M1008.5 1008.5h0M1009.5 1008.5h0M1009.5 1008.5h0M1010.5 1008.5h0M1010.5 1008.5h0M1011.5 1008.5h0M1011.5 1008.5h0M1011.5 1008.5h0M1012.5 1007.5h0M1012.5 1007.5h0M1013.5 1008.5h0M1013.5 1007.5h0M1014.5 1008.5h0M1014.5 1008.5h0M1015.5 1008.5h0M1015.5 1008.5h0M1016.5 1007.5h0M1016.5 1008.5h0M1017.5 1007.5h0M1017.5 1008.5h0M1018.5 1007.5h0M1018.5 1008.5h0M1019.5 1008.5h0M1019.5 1008.5h0M1020.5 1008.5h0M1020.5 1008.5h0M1020.5 1008.5h0M1021.5 1008.5h0M1021.5 1008.5h0M1022.5 1008.5h0M1022.5 1008.5h0M1023.5 1008.5h0M1023.5 1008.5h0M1024.5 1008.5h0M1024.5 1007.5h0M1025.5 1008.5h0M1025.5 1008.5h0M1026.5 1007.5h0M1026.5 1007.5h0M1027.5 1007.5h0M1027.5 1007.5h0M1028.5 1007.5h0M1028.5 1007.5h0M1029.5 1007.5h0M1029.5 1007.5h0M1030.5 1007.5h0M1030.5 1007.5h0M1030.5 1007.5h0M1031.5 1007.5h0M1031.5 1007.5h0M1032.5 1007.5h0M1032.5 1007.5h0M1033.5 1008.5h0M1033.5 1008.5h0M1034.5 1008.5h0M1034.5 1009.5h0M1035.5 1008.5h0M1035.5 1007.5h0M1036.5 1008.5h0M1036.5 1008.5h0M1037.5 1008.5h0M1037.5 1008.5h0M1038.5 1008.5h0M1038.5 1008.5h0M1039.5 1008.5h0M1039.5 1008.5h0M1040.5 1008.5h0M1040.5 1008.5h0M1040.5 1008.5h0M1041.5 1008.5h0M1041.5 1008.5h0M1042.5 1007.5h0M1042.5 1008.5h0M1043.5 1008.5h0M1043.5 1008.5h0M1044.5 1007.5h0M1044.5 1008.5h0M1045.5 1008.5h0M1045.5 1008.5h0M1046.5 1008.5h0M1046.5 1008.5h0M1047.5 1007.5h0M1047.5 1008.5h0M1048.5 1008.5h0M1048.5 1008.5h0M1049.5 1008.5h0M1049.5 1008.5h0M1049.5 1008.5h0M1050.5 1008.5h0M1050.5 1008.5h0M1051.5 1008.5h0M1051.5 1008.5h0M1052.5 1008.5h0M1052.5 1008.5h0M1053.5 1008.5h0M1053.5 1008.5h0M1054.5 1007.5h0M1054.5 1007.5h0M1055.5 1007.5h0M1055.5 1007.5h0M1056.5 1007.5h0M1056.5 1007.5h0M1057.5 1007.5h0M1057.5 1007.5h0M1058.5 1007.5h0M1058.5 1007.5h0M1059.5 1007.5h0M1059.5 1007.5h0M1059.5 1007.5h0M1060.5 1007.5h0M1060.5 1007.5h0M1061.5 1007.5h0M1061.5 1007.5h0M1062.5 1007.5h0M1062.5 1007.5h0M1063.5 1007.5h0M1063.5 1007.5h0M1064.5 1007.5h0M1064.5 1007.5h0M1065.5 1007.5h0M1065.5 1007.5h0M1066.5 1007.5h0M1066.5 1007.5h0M1067.5 1007.5h0M1067.5 1007.5h0M1068.5 1007.5h0M1068.5 1007.5h0M1069.5 1007.5h0M1069.5 1007.5h0M1069.5 1007.5h0M1070.5 1007.5h0M1070.5 1007.5h0M1071.5 1007.5h0M1071.5 1007.5h0M1072.5 1007.5h0M1072.5 1007.5h0M1073.5 1007.5h0M1073.5 1007.5h0M1074.5 1007.5h0M1074.5 1007.5h0M1075.5 1007.5h0M1075.5 1007.5h0M1076.5 1008.5h0M1076.5 1007.5h0M1077.5 1007.5h0M1077.5 1008.5h0M1078.5 1008.5h0M1078.5 1008.5h0M1078.5 1008.5h0M1079.5 1008.5h0M1079.5 1008.5h0M1080.5 1007.5h0M1080.5 1007.5h0M1081.5 1008.5h0M1081.5 1008.5h0M1082.5 1007.5h0M1082.5 1007.5h0M1083.5 1007.5h0M1083.5 1007.5h0M1084.5 1008.5h0M1084.5 1007.5h0M1085.5 1007.5h0M1085.5 1007.5h0M1086.5 1007.5h0M1086.5 1007.5h0M1087.5 1007.5h0M1087.5 1007.5h0M1088.5 1007.5h0M1088.5 1007.5h0M1088.5 1007.5h0M1089.5 1007.5h0M1089.5 1007.5h0M1090.5 1007.5h0M1090.5 1007.5h0M1091.5 1007.5h0M1091.5 1007.5h0M1092.5 1007.5h0M1092.5 1007.5h0M1093.5 1007.5h0M1093.5 1007.5h0M1094.5 1008.5h0M1094.5 1007.5h0M1095.5 1007.5h0M1095.5 1007.5h0M1096.5 1007.5h0M1096.5 1007.5h0M1097.5 1007.5h0M1097.5 1007.5h0M1098.5 1007.5h0M1098.5 1007.5h0M1098.5 1007.5h0M1099.5 1007.5h0M1099.5 1007.5h0M1100.5 1007.5h0M1100.5 1007.5h0M1101.5 1007.5h0M1101.5 1007.5h0M1102.5 1006.5h0M1102.5 1007.5h0M1103.5 1007.5h0M1103.5 1007.5h0M1104.5 1007.5h0M1104.5 1007.5h0M1105.5 1007.5h0M1105.5 1008.5h0M1106.5 1008.5h0M1106.5 1008.5h0M1107.5 1008.5h0M1107.5 1008.5h0M1107.5 1008.5h0M1108.5 1008.5h0M1108.5 1008.5h0M1109.5 1008.5h0M1109.5 1008.5h0M1110.5 1008.5h0M1110.5 1008.5h0M1111.5 1008.5h0M1111.5 1008.5h0M1112.5 1008.5h0M1112.5 1008.5h0M1113.5 1008.5h0M1113.5 1008.5h0M1114.5 1008.5h0M1114.5 1008.5h0M1115.5 1008.5h0M1115.5 1008.5h0M1116.5 1008.5h0M1116.5 1007.5h0M1117.5 1007.5h0M1117.5 1007.5h0M1117.5 1008.5h0M1118.5 1007.5h0M1118.5 1008.5h0M1119.5 1008.5h0M1119.5 1008.5h0M1120.5 1008.5h0M1120.5 1008.5h0M1121.5 1007.5h0M1121.5 1008.5h0M1122.5 1008.5h0M1122.5 1008.5h0M1123.5 1008.5h0M1123.5 1008.5h0M1124.5 1008.5h0M1124.5 1008.5h0M1125.5 1008.5h0M1125.5 1008.5h0M1126.5 1008.5h0M1126.5 1008.5h0M1127.5 1008.5h0M1127.5 1008.5h0M1127.5 1007.5h0M1128.5 1007.5h0M1128.5 1007.5h0M1129.5 1007.5h0M1129.5 1007.5h0M1130.5 1007.5h0M1130.5 1007.5h0M1131.5 1008.5h0M1131.5 1007.5h0M1132.5 1007.5h0M1132.5 1008.5h0M1133.5 1007.5h0M1133.5 1007.5h0M1134.5 1007.5h0M1134.5 1007.5h0M1135.5 1007.5h0M1135.5 1008.5h0M1136.5 1008.5h0M1136.5 1007.5h0M1136.5 1007.5h0M1137.5 1008.5h0M1137.5 1008.5h0M1138.5 1008.5h0M1138.5 1007.5h0M1139.5 1008.5h0M1139.5 1008.5h0M1140.5 1008.5h0M1140.5 1008.5h0M1141.5 1007.5h0M1141.5 1007.5h0M1142.5 1008.5h0M1142.5 1007.5h0M1143.5 1008.5h0M1143.5 1007.5h0M1144.5 1007.5h0M1144.5 1008.5h0M1145.5 1008.5h0M1145.5 1007.5h0M1146.5 1007.5h0M1146.5 1007.5h0M1146.5 1008.5h0M1147.5 1008.5h0M1147.5 1008.5h0M1148.5 1008.5h0M1148.5 1007.5h0M1149.5 1008.5h0M1149.5 1008.5h0M1150.5 1008.5h0M1150.5 1008.5h0M1151.5 1008.5h0M1151.5 1008.5h0M1152.5 1008.5h0M1152.5 1008.5h0M1153.5 1008.5h0M1153.5 1008.5h0M1154.5 1007.5h0M1154.5 1008.5h0M1155.5 1007.5h0M1155.5 1007.5h0M1156.5 1007.5h0M1156.5 1007.5h0M1156.5 1007.5h0M1157.5 1007.5h0M1157.5 1007.5h0M1158.5 1007.5h0M1158.5 1007.5h0M1159.5 1006.5h0M1159.5 1007.5h0M1160.5 1007.5h0M1160.5 1007.5h0M1161.5 1007.5h0M1161.5 1007.5h0M1162.5 1007.5h0M1162.5 1007.5h0M1163.5 1007.5h0M1163.5 1007.5h0M1164.5 1007.5h0M1164.5 1007.5h0M1165.5 1007.5h0M1165.5 1007.5h0M1165.5 1007.5h0M1166.5 1007.5h0M1166.5 1007.5h0M1167.5 1007.5h0M1167.5 1006.5h0M1168.5 1007.5h0M1168.5 1007.5h0M1169.5 1007.5h0M1169.5 1007.5h0M1170.5 1007.5h0M1170.5 1007.5h0M1171.5 1007.5h0M1171.5 1006.5h0M1172.5 1007.5h0M1172.5 1006.5h0M1173.5 1007.5h0M1173.5 1007.5h0M1174.5 1007.5h0M1174.5 1007.5h0M1175.5 1007.5h0M1175.5 1007.5h0M1175.5 1007.5h0M1176.5 1007.5h0M1176.5 1007.5h0M1177.5 1007.5h0M1177.5 1008.5h0M1178.5 1007.5h0M1178.5 1008.5h0M1179.5 1008.5h0M1179.5 1008.5h0M1180.5 1008.5h0M1180.5 1008.5h0M1181.5 1008.5h0M1181.5 1008.5h0M1182.5 1008.5h0M1182.5 1008.5h0M1183.5 1008.5h0M1183.5 1008.5h0M1184.5 1008.5h0M1184.5 1008.5h0M1185.5 1008.5h0M1185.5 1007.5h0M1185.5 1008.5h0M1186.5 1007.5h0M1186.5 1008.5h0M1187.5 1008.5h0M1187.5 1008.5h0M1188.5 1007.5h0M1188.5 1008.5h0M1189.5 1008.5h0M1189.5 1007.5h0M1190.5 1007.5h0M1190.5 1007.5h0M1191.5 1007.5h0M1191.5 1007.5h0M1192.5 1007.5h0M1192.5 1007.5h0M1193.5 1007.5h0M1193.5 1008.5h0M1194.5 1008.5h0M1194.5 1007.5h0M1194.5 1007.5h0M1195.5 1008.5h0M1195.5 1007.5h0M1196.5 1007.5h0M1196.5 1008.5h0M1197.5 1007.5h0M1197.5 1007.5h0M1198.5 1007.5h0M1198.5 1007.5h0M1199.5 1008.5h0M1199.5 1007.5h0M1200.5 1007.5h0M1200.5 1007.5h0M1201.5 1007.5h0M1201.5 1007.5h0M1202.5 1007.5h0M1202.5 1007.5h0M1203.5 1007.5h0M1203.5 1007.5h0M1204.5 1007.5h0M1204.5 1008.5h0M1204.5 1007.5h0M1205.5 1007.5h0M1205.5 1007.5h0M1206.5 1007.5h0M1206.5 1007.5h0M1207.5 1008.5h0M1207.5 1008.5h0M1208.5 1008.5h0M1208.5 1008.5h0M1209.5 1008.5h0M1209.5 1009.5h0M1210.5 1008.5h0M1210.5 1008.5h0M1211.5 1009.5h0M1211.5 1009.5h0M1212.5 1008.5h0M1212.5 1008.5h0M1213.5 1008.5h0M1213.5 1008.5h0M1214.5 1007.5h0M1214.5 1008.5h0M1214.5 1008.5h0M1215.5 1008.5h0M1215.5 1007.5h0M1216.5 1008.5h0M1216.5 1008.5h0M1217.5 1008.5h0M1217.5 1008.5h0M1218.5 1008.5h0M1218.5 1007.5h0M1219.5 1008.5h0M1219.5 1008.5h0M1220.5 1008.5h0M1220.5 1008.5h0M1221.5 1008.5h0M1221.5 1008.5h0M1222.5 1008.5h0M1222.5 1008.5h0M1223.5 1008.5h0M1223.5 1009.5h0M1223.5 1008.5h0M1224.5 1008.5h0M1224.5 1008.5h0M1225.5 1008.5h0M1225.5 1008.5h0M1226.5 1008.5h0M1226.5 1008.5h0M1227.5 1007.5h0M1227.5 1008.5h0M1228.5 1007.5h0M1228.5 1007.5h0M1229.5 1007.5h0M1229.5 1007.5h0M1230.5 1007.5h0M1230.5 1007.5h0M1231.5 1007.5h0M1231.5 1007.5h0M1232.5 1007.5h0M1232.5 1007.5h0M1233.5 1006.5h0M1233.5 1007.5h0M1233.5 1007.5h0M1234.5 1007.5h0M1234.5 1007.5h0M1235.5 1007.5h0M1235.5 1007.5h0M1236.5 1007.5h0M1236.5 1008.5h0M1237.5 1007.5h0M1237.5 1007.5h0M1238.5 1007.5h0M1238.5 1007.5h0M1239.5 1007.5h0M1239.5 1008.5h0M1240.5 1008.5h0M1240.5 1007.5h0M1241.5 1007.5h0M1241.5 1007.5h0M1242.5 1008.5h0M1242.5 1007.5h0M1243.5 1008.5h0M1243.5 1007.5h0M1243.5 1007.5h0M1244.5 1007.5h0M1244.5 1007.5h0M1245.5 1007.5h0M1245.5 1007.5h0M1246.5 1007.5h0M1246.5 1008.5h0M1247.5 1007.5h0M1247.5 1007.5h0M1248.5 1007.5h0M1248.5 1007.5h0M1249.5 1007.5h0M1249.5 1008.5h0M1250.5 1008.5h0M1250.5 1008.5h0M1251.5 1008.5h0M1251.5 1008.5h0M1252.5 1008.5h0M1252.5 1008.5h0M1252.5 1008.5h0M1253.5 1008.5h0M1253.5 1007.5h0M1254.5 1008.5h0M1254.5 1007.5h0M1255.5 1008.5h0M1255.5 1007.5h0M1256.5 1008.5h0M1256.5 1008.5h0M1257.5 1007.5h0M1257.5 1007.5h0M1258.5 1007.5h0M1258.5 1007.5h0M1259.5 1007.5h0M1259.5 1007.5h0M1260.5 1007.5h0M1260.5 1007.5h0M1261.5 1007.5h0M1261.5 1007.5h0M1262.5 1006.5h0M1262.5 1007.5h0M1262.5 1007.5h0M1263.5 1006.5h0M1263.5 1007.5h0M1264.5 1007.5h0M1264.5 1006.5h0M1265.5 1007.5h0M1265.5 1007.5h0M1266.5 1007.5h0M1266.5 1007.5h0M1267.5 1007.5h0M1267.5 1007.5h0M1268.5 1007.5h0M1268.5 1007.5h0M1269.5 1007.5h0M1269.5 1007.5h0M1270.5 1007.5h0M1270.5 1007.5h0M1271.5 1006.5h0M1271.5 1007.5h0M1272.5 1007.5h0M1272.5 1007.5h0M1272.5 1007.5h0M1273.5 1007.5h0M1273.5 1007.5h0M1274.5 1006.5h0M1274.5 1007.5h0M1275.5 1007.5h0M1275.5 1007.5h0M1276.5 1006.5h0M1276.5 1007.5h0M1277.5 1007.5h0M1277.5 1008.5h0M1278.5 1007.5h0M1278.5 1008.5h0M1279.5 1007.5h0M1279.5 1008.5h0M1280.5 1008.5h0M1280.5 1008.5h0M1281.5 1008.5h0M1281.5 1008.5h0M1281.5 1008.5h0M1282.5 1008.5h0M1282.5 1008.5h0M1283.5 1008.5h0M1283.5 1008.5h0M1284.5 1008.5h0M1284.5 1008.5h0M1285.5 1008.5h0M1285.5 1008.5h0M1286.5 1007.5h0M1286.5 1008.5h0M1287.5 1008.5h0M1287.5 1008.5h0M1288.5 1008.5h0M1288.5 1008.5h0M1289.5 1008.5h0M1289.5 1008.5h0M1290.5 1008.5h0M1290.5 1007.5h0M1291.5 1007.5h0M1291.5 1007.5h0M1291.5 1008.5h0M1292.5 1007.5h0M1292.5 1008.5h0M1293.5 1008.5h0M1293.5 1008.5h0M1294.5 1007.5h0M1294.5 1007.5h0M1295.5 1008.5h0M1295.5 1008.5h0M1296.5 1008.5h0M1296.5 1008.5h0M1297.5 1008.5h0M1297.5 1008.5h0M1298.5 1007.5h0M1298.5 1008.5h0M1299.5 1008.5h0M1299.5 1008.5h0M1300.5 1007.5h0M1300.5 1007.5h0M1301.5 1007.5h0M1301.5 1007.5h0M1301.5 1007.5h0M1302.5 1008.5h0M1302.5 1007.5h0" stroke="#000" stroke-width="2.5" stroke-linecap="round" fill="none"/>
<path d="M191.5 1000.5h0M841.5 1002.5h0M984.5 1002.5h0M1163.5 1004.5h0M1249.5 998.5h0M1278.5 1003.5h0" stroke="#000" stroke-width="2.5" stroke-linecap="round" fill="none"/>
<circle cx="959.5" cy="992.5" r="1.3" fill="#f00"/>
<path d="M226.2 956.0l1.7 3.1h-3.4zM401.3 956.0l1.7 3.1h-3.4zM728.0 956.0l1.7 3.1h-3.4zM1119.3 956.0l1.7 3.1h-3.4zM1181.3 956.0l1.7 3.1h-3.4z" fill="#f00" fill-opacity="0.5" stroke="#f00" stroke-width="0.9" stroke-linejoin="miter"/>
<circle cx="226.2" cy="856.5" r="1.0" fill="#000" fill-opacity="0.5" stroke="#000" stroke-width="0.9"/>
<circle cx="226.2" cy="889.5" r="1.0" fill="#000" fill-opacity="0.5" stroke="#000" stroke-width="0.9"/>
<circle cx="401.3" cy="856.5" r="1.0" fill="#000" fill-opacity="0.5" stroke="#000" stroke-width="0.9"/>
<circle cx="401.3" cy="889.5" r="1.0" fill="#000" fill-opacity="0.5" stroke="#000" stroke-width="0.9"/>
<circle cx="728.0" cy="856.5" r="1.0" fill="#000" fill-opacity="0.5" stroke="#000" stroke-width="0.9"/>
<circle cx="728.0" cy="889.5" r="1.0" fill="#000" fill-opacity="0.5" stroke="#000" stroke-width="0.9"/>
<circle cx="1119.3" cy="856.5" r="1.0" fill="#000" fill-opacity="0.5" stroke="#000" stroke-width="0.9"/>
<circle cx="1119.3" cy="889.5" r="1.0" fill="#000" fill-opacity="0.5" stroke="#000" stroke-width="0.9"/>
<circle cx="1181.3" cy="856.5" r="1.0" fill="#000" fill-opacity="0.5" stroke="#000" stroke-width="0.9"/>
<circle cx="1181.3" cy="889.5" r="1.0" fill="#000" fill-opacity="0.5" stroke="#000" stroke-width="0.9"/>
<path d="M105.5 954.4H1485.5" stroke="#000" stroke-width="1.3"/>
<path d="M162.00 1011.5V725.5" stroke="#800080" stroke-width="2.08" stroke-dasharray="2.08 3.44" stroke-dashoffset="-0.4" fill="none"/><path d="M1303.00 1011.5V725.5" stroke="#800080" stroke-width="2.08" stroke-dasharray="2.08 3.44" stroke-dashoffset="-0.4" fill="none"/>
</g>
<rect x="105.5" y="725.5" width="1380.0" height="286.0" fill="none" stroke="#000" stroke-width="1.11"/>
<path d="M162.5 1011.5v4.86" stroke="#000" stroke-width="1.11"/><text x="163.4" y="1031.9" text-anchor="middle">0</text><path d="M400.5 1011.5v4.86" stroke="#000" stroke-width="1.11"/><text x="399.5" y="1031.9" text-anchor="middle">1000</text><path d="M637.5 1011.5v4.86" stroke="#000" stroke-width="1.11"/><text x="637.0" y="1031.9" text-anchor="middle">2000</text><path d="M874.5 1011.5v4.86" stroke="#000" stroke-width="1.11"/><text x="874.5" y="1031.9" text-anchor="middle">3000</text><path d="M1112.5 1011.5v4.86" stroke="#000" stroke-width="1.11"/><text x="1111.8" y="1031.9" text-anchor="middle">4000</text><path d="M1349.5 1011.5v4.86" stroke="#000" stroke-width="1.11"/><text x="1349.0" y="1031.9" text-anchor="middle">5000</text>
<path d="M105.5 758.5h-4.86" stroke="#000" stroke-width="1.11"/><text x="95.4" y="764.0" text-anchor="end">not Kalman</text>
<path d="M105.5 791.5h-4.86" stroke="#000" stroke-width="1.11"/><text x="95.4" y="796.0" text-anchor="end">not track</text>
<path d="M105.5 823.5h-4.86" stroke="#000" stroke-width="1.11"/><text x="95.4" y="829.0" text-anchor="end">Sat. pixel.</text>
<path d="M105.5 856.5h-4.86" stroke="#000" stroke-width="1.11"/><text x="95.4" y="862.0" text-anchor="end">Ion. rad.</text>
<path d="M105.5 889.5h-4.86" stroke="#000" stroke-width="1.11"/><text x="95.4" y="894.0" text-anchor="end">dr &gt; 5</text>
<path d="M105.5 921.5h-4.86" stroke="#000" stroke-width="1.11"/><text x="95.4" y="927.0" text-anchor="end">OBS not OK</text>
<path d="M105.5 957.5h-4.86" stroke="#000" stroke-width="1.11"/><text x="94.7" y="962.0" text-anchor="end">10</text>
<path d="M105.5 983.5h-4.86" stroke="#000" stroke-width="1.11"/><text x="95.4" y="988.0" text-anchor="end">5</text>
<path d="M105.5 1009.5h-4.86" stroke="#000" stroke-width="1.11"/><text x="96.6" y="1014.0" text-anchor="end">0</text>
<path d="M105.5 970.5h-2.78" stroke="#000" stroke-width="0.83"/>
<path d="M105.5 996.5h-2.78" stroke="#000" stroke-width="0.83"/>
<text transform="translate(68.6 984) rotate(-90)" text-anchor="middle">dr</text>
</svg>
</body></html>
